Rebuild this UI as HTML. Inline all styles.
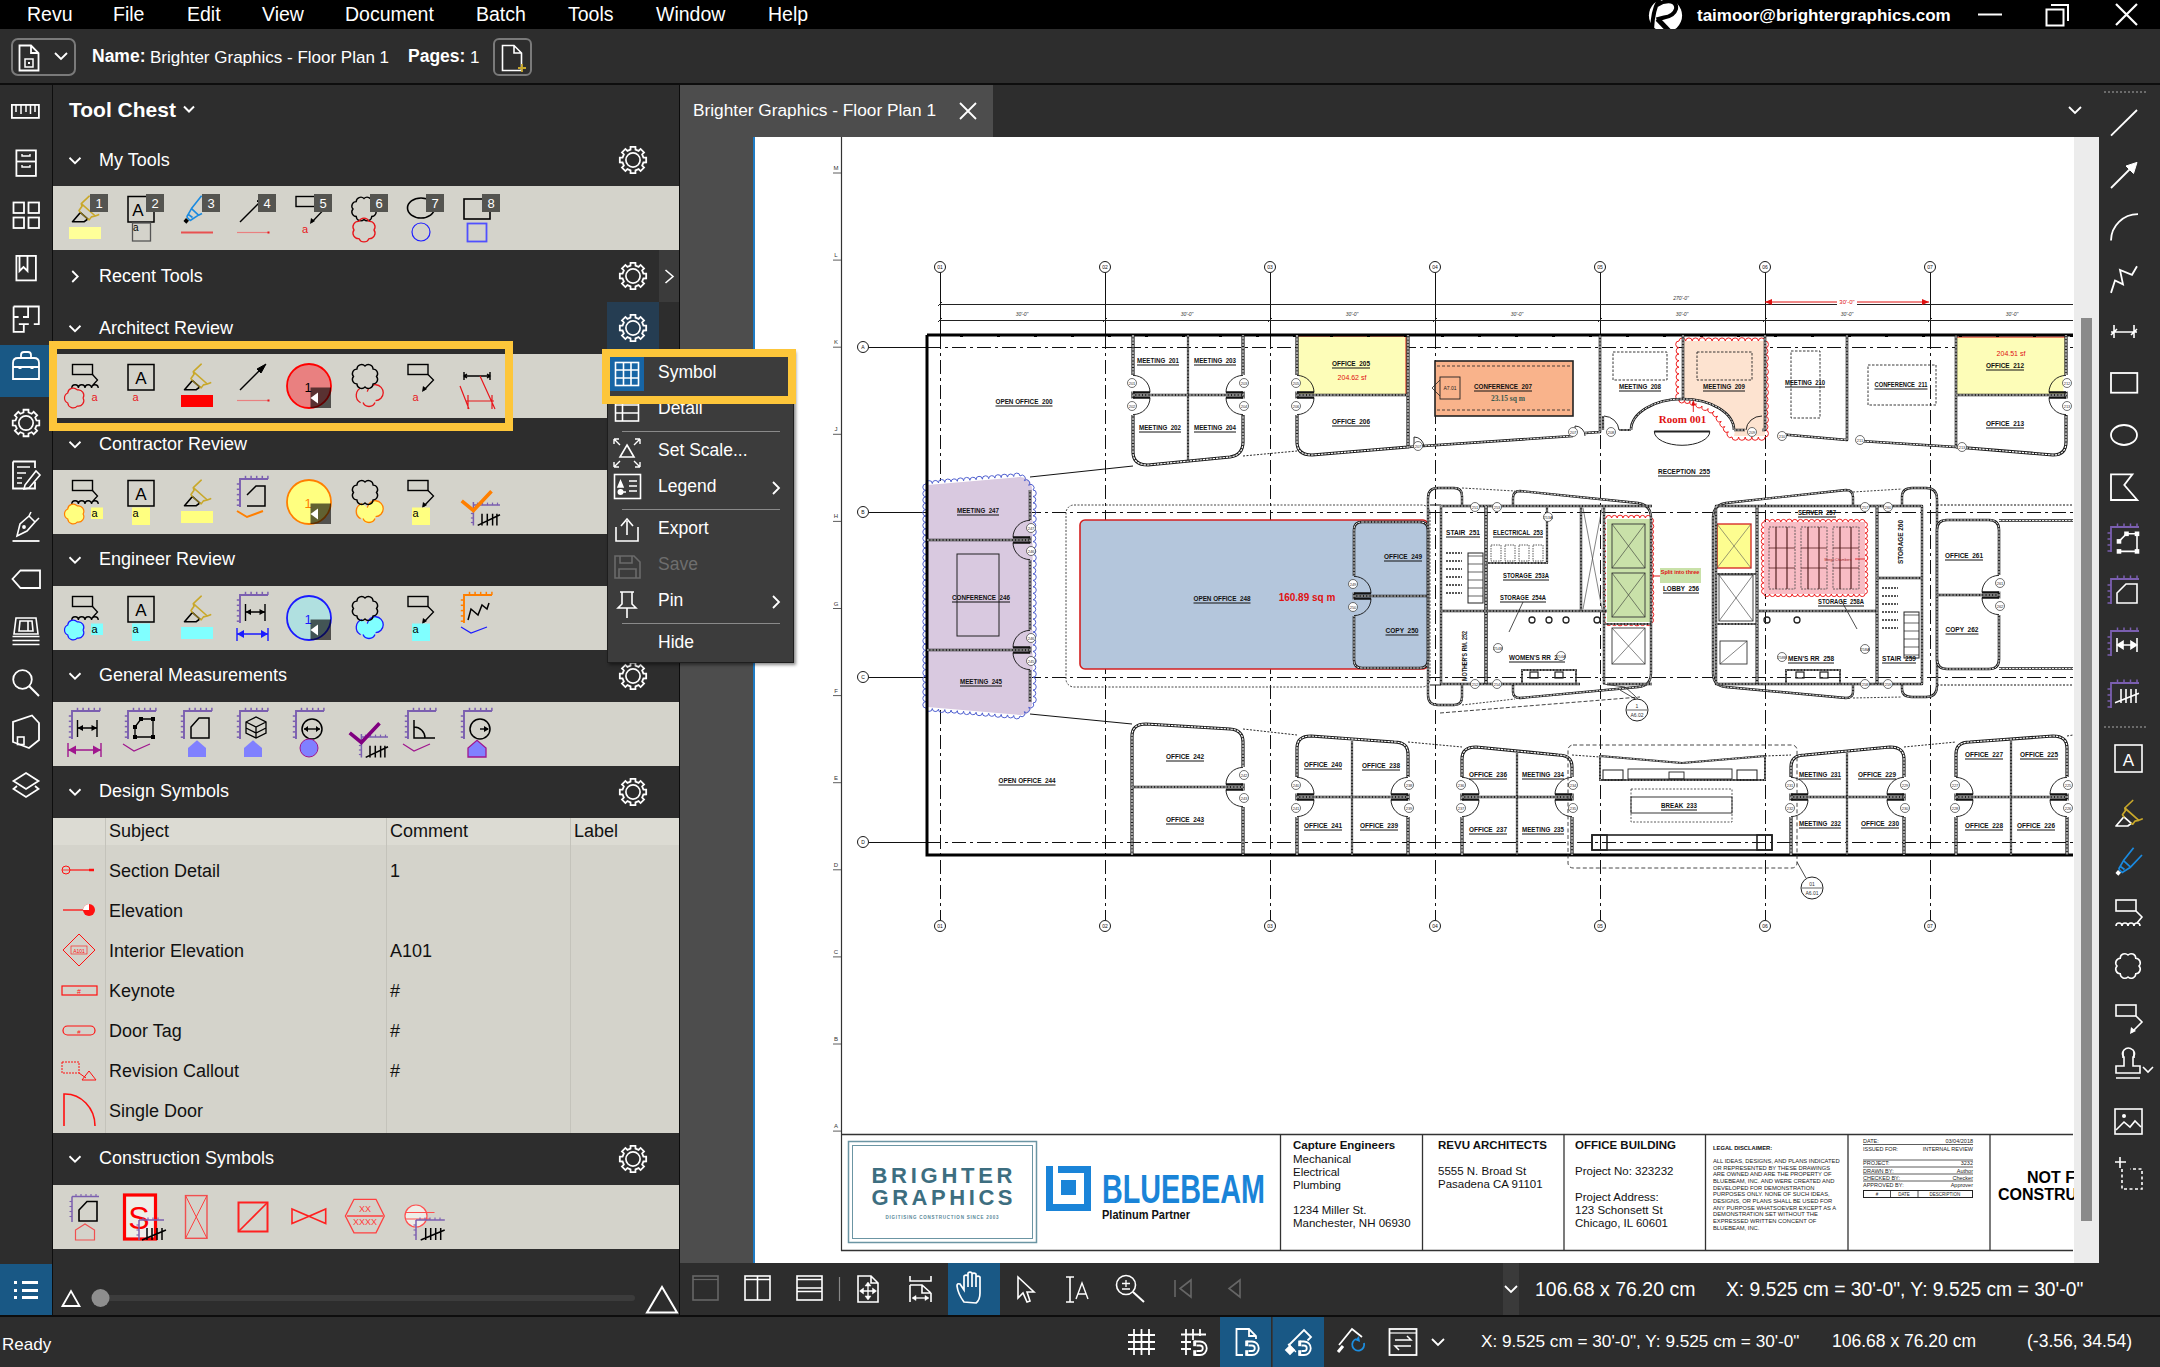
<!DOCTYPE html>
<html><head><meta charset="utf-8">
<style>
*{box-sizing:border-box;margin:0;padding:0}
html,body{width:2160px;height:1367px;overflow:hidden;background:#2d2d2d;font-family:"Liberation Sans",sans-serif;color:#fff}
.a{position:absolute}
.t{position:absolute;white-space:pre;line-height:1}
svg{position:absolute;overflow:visible}
</style></head><body>

<div class="a" style="left:0px;top:0px;width:2160px;height:29px;background:#000;"></div>
<div class="a" style="left:0px;top:29px;width:2160px;height:54px;background:#2d2d2d;"></div>
<div class="a" style="left:0px;top:83px;width:2160px;height:2px;background:#0d0d0d;"></div>
<div class="a" style="left:0px;top:85px;width:52px;height:1231px;background:#2d2d2d;"></div>
<div class="a" style="left:52px;top:85px;width:1px;height:1231px;background:#0e0e0e;"></div>
<div class="a" style="left:0px;top:345px;width:49px;height:52px;background:#195885;"></div>
<div class="a" style="left:0px;top:1264px;width:52px;height:52px;background:#195885;"></div>
<div class="a" style="left:53px;top:85px;width:626px;height:1231px;background:#2d2d2d;"></div>
<div class="a" style="left:679px;top:85px;width:1px;height:1231px;background:#0c0c0c;"></div>
<div class="a" style="left:680px;top:85px;width:1419px;height:52px;background:#2d2d2d;"></div>
<div class="a" style="left:680px;top:85px;width:313px;height:52px;background:#4d4d4d;"></div>
<div class="a" style="left:680px;top:137px;width:1394px;height:1126px;background:#4d4d4d;"></div>
<div class="a" style="left:753px;top:137px;width:1321px;height:1126px;background:#fff;"></div>
<div class="a" style="left:753px;top:137px;width:2px;height:1126px;background:#1e7bc4;"></div>
<div class="a" style="left:2074px;top:137px;width:25px;height:1126px;background:#ececec;"></div>
<div class="a" style="left:2081px;top:318px;width:11px;height:903px;background:#8a8a8a;"></div>
<div class="a" style="left:2099px;top:85px;width:61px;height:1231px;background:#2d2d2d;"></div>
<div class="a" style="left:680px;top:1263px;width:1480px;height:52px;background:#2d2d2d;"></div>
<div class="a" style="left:0px;top:1315px;width:2160px;height:2px;background:#0d0d0d;"></div>
<div class="a" style="left:0px;top:1317px;width:2160px;height:50px;background:#2d2d2d;"></div>
<div class="t" style="left:27px;top:4.5px;font-size:19.5px;font-weight:400;color:#fff;">Revu</div>
<div class="t" style="left:113px;top:4.5px;font-size:19.5px;font-weight:400;color:#fff;">File</div>
<div class="t" style="left:187px;top:4.5px;font-size:19.5px;font-weight:400;color:#fff;">Edit</div>
<div class="t" style="left:262px;top:4.5px;font-size:19.5px;font-weight:400;color:#fff;">View</div>
<div class="t" style="left:345px;top:4.5px;font-size:19.5px;font-weight:400;color:#fff;">Document</div>
<div class="t" style="left:476px;top:4.5px;font-size:19.5px;font-weight:400;color:#fff;">Batch</div>
<div class="t" style="left:568px;top:4.5px;font-size:19.5px;font-weight:400;color:#fff;">Tools</div>
<div class="t" style="left:656px;top:4.5px;font-size:19.5px;font-weight:400;color:#fff;">Window</div>
<div class="t" style="left:768px;top:4.5px;font-size:19.5px;font-weight:400;color:#fff;">Help</div>
<div class="t" style="left:1697px;top:6.6px;font-size:17px;font-weight:700;color:#fff;">taimoor@brightergraphics.com</div>
<svg style="left:1645px;top:0px;" width="42" height="29" viewBox="1645 0 42 29"><clipPath id="lc"><rect x="1640" y="0" width="50" height="29"/></clipPath><g clip-path="url(#lc)"><circle cx="1665.5" cy="15.5" r="16.6" fill="#fff"/><path d="M1659.5 -1 Q1652.5 10 1652 31" fill="none" stroke="#000" stroke-width="4"/><path d="M1657 5 Q1664 0.5 1671 1.5 Q1677 3 1676 9 Q1674 16 1664 17.5 L1656.5 19.5" fill="none" stroke="#000" stroke-width="4"/><path d="M1657.5 19 L1669 31" fill="none" stroke="#000" stroke-width="5"/></g></svg>
<svg style="left:1970px;top:0px;" width="190" height="29" viewBox="1970 0 190 29"><line x1="1978" y1="14.5" x2="2002" y2="14.5" stroke="#fff" stroke-width="2"/><rect x="2046.5" y="9.5" width="17" height="16" fill="none" stroke="#fff" stroke-width="2"/><path d="M2051 5 H2068 V21" fill="none" stroke="#fff" stroke-width="2"/><path d="M2116 4 L2137 25 M2137 4 L2116 25" stroke="#fff" stroke-width="2.2"/></svg>
<svg style="left:8px;top:34px;" width="530" height="46" viewBox="8 34 530 46"><rect x="12" y="39" width="63" height="36" rx="6" fill="none" stroke="#7a7a7a" stroke-width="2"/><path d="M19.5 45.5 H31 L38.5 53 V70.5 H19.5 Z M31 45.5 V53 H38.5" fill="none" stroke="#fff" stroke-width="1.8"/><rect x="25" y="59" width="8" height="8" fill="none" stroke="#fff" stroke-width="1.5"/><rect x="28" y="62" width="2" height="2" fill="#fff"/><path d="M55 53 L61 59 L67 53" fill="none" stroke="#fff" stroke-width="1.8"/><rect x="494" y="39" width="37" height="36" rx="5" fill="none" stroke="#7a7a7a" stroke-width="2"/><path d="M502.5 45.5 H514 L521.5 53 V70.5 H502.5 Z M514 45.5 V53 H521.5" fill="none" stroke="#fff" stroke-width="1.6"/><path d="M522 64 V72 M518 68 H526" stroke="#c8a82c" stroke-width="1.8"/></svg>
<div class="t" style="left:92px;top:48.2px;font-size:17.5px;font-weight:700;color:#fff;">Name:</div>
<div class="t" style="left:150px;top:48.6px;font-size:17px;font-weight:400;color:#fff;">Brighter Graphics - Floor Plan 1</div>
<div class="t" style="left:408px;top:48.2px;font-size:17.5px;font-weight:700;color:#fff;">Pages:</div>
<div class="t" style="left:470px;top:48.6px;font-size:17px;font-weight:400;color:#fff;">1</div>
<div class="t" style="left:69px;top:99.2px;font-size:21px;font-weight:700;color:#fff;">Tool Chest</div>
<svg style="left:180px;top:100px;" width="20" height="20" viewBox="180 100 20 20"><path d="M184 106.5 L189 111.5 L194 106.5" fill="none" stroke="#fff" stroke-width="2"/></svg>
<div class="a" style="left:607px;top:302px;width:52px;height:52px;background:#253d52;"></div>
<div class="a" style="left:659px;top:250px;width:20px;height:52px;background:#3b3b3b;"></div>
<div class="t" style="left:99px;top:150.8px;font-size:18px;font-weight:400;color:#fff;">My Tools</div>
<div class="t" style="left:99px;top:266.8px;font-size:18px;font-weight:400;color:#fff;">Recent Tools</div>
<div class="t" style="left:99px;top:318.8px;font-size:18px;font-weight:400;color:#fff;">Architect Review</div>
<div class="t" style="left:99px;top:434.8px;font-size:18px;font-weight:400;color:#fff;">Contractor Review</div>
<div class="t" style="left:99px;top:550.3px;font-size:18px;font-weight:400;color:#fff;">Engineer Review</div>
<div class="t" style="left:99px;top:666.3px;font-size:18px;font-weight:400;color:#fff;">General Measurements</div>
<div class="t" style="left:99px;top:782.3px;font-size:18px;font-weight:400;color:#fff;">Design Symbols</div>
<div class="t" style="left:99px;top:1149.3px;font-size:18px;font-weight:400;color:#fff;">Construction Symbols</div>
<svg style="left:53px;top:85px;" width="626" height="1231" viewBox="53 85 626 1231"><path d="M69.5 157.75 L75 163.25 L80.5 157.75" fill="none" stroke="#fff" stroke-width="1.8"/><path d="M72.25 271.0 L77.75 276.5 L72.25 282.0" fill="none" stroke="#fff" stroke-width="1.8"/><path d="M69.5 325.75 L75 331.25 L80.5 325.75" fill="none" stroke="#fff" stroke-width="1.8"/><path d="M69.5 441.75 L75 447.25 L80.5 441.75" fill="none" stroke="#fff" stroke-width="1.8"/><path d="M69.5 557.25 L75 562.75 L80.5 557.25" fill="none" stroke="#fff" stroke-width="1.8"/><path d="M69.5 673.25 L75 678.75 L80.5 673.25" fill="none" stroke="#fff" stroke-width="1.8"/><path d="M69.5 789.25 L75 794.75 L80.5 789.25" fill="none" stroke="#fff" stroke-width="1.8"/><path d="M69.5 1156.25 L75 1161.75 L80.5 1156.25" fill="none" stroke="#fff" stroke-width="1.8"/><polygon points="630.50,149.58 630.56,146.82 635.44,146.82 635.50,149.58 638.60,150.86 640.59,148.96 644.04,152.41 642.14,154.40 643.42,157.50 646.18,157.56 646.18,162.44 643.42,162.50 642.14,165.60 644.04,167.59 640.59,171.04 638.60,169.14 635.50,170.42 635.44,173.18 630.56,173.18 630.50,170.42 627.40,169.14 625.41,171.04 621.96,167.59 623.86,165.60 622.58,162.50 619.82,162.44 619.82,157.56 622.58,157.50 623.86,154.40 621.96,152.41 625.41,148.96 627.40,150.86" fill="none" stroke="#fff" stroke-width="1.8" stroke-linejoin="miter"/><circle cx="633" cy="160" r="7.10" fill="none" stroke="#fff" stroke-width="1.7"/><polygon points="630.50,265.58 630.56,262.82 635.44,262.82 635.50,265.58 638.60,266.86 640.59,264.96 644.04,268.41 642.14,270.40 643.42,273.50 646.18,273.56 646.18,278.44 643.42,278.50 642.14,281.60 644.04,283.59 640.59,287.04 638.60,285.14 635.50,286.42 635.44,289.18 630.56,289.18 630.50,286.42 627.40,285.14 625.41,287.04 621.96,283.59 623.86,281.60 622.58,278.50 619.82,278.44 619.82,273.56 622.58,273.50 623.86,270.40 621.96,268.41 625.41,264.96 627.40,266.86" fill="none" stroke="#fff" stroke-width="1.8" stroke-linejoin="miter"/><circle cx="633" cy="276" r="7.10" fill="none" stroke="#fff" stroke-width="1.7"/><polygon points="630.50,317.58 630.56,314.82 635.44,314.82 635.50,317.58 638.60,318.86 640.59,316.96 644.04,320.41 642.14,322.40 643.42,325.50 646.18,325.56 646.18,330.44 643.42,330.50 642.14,333.60 644.04,335.59 640.59,339.04 638.60,337.14 635.50,338.42 635.44,341.18 630.56,341.18 630.50,338.42 627.40,337.14 625.41,339.04 621.96,335.59 623.86,333.60 622.58,330.50 619.82,330.44 619.82,325.56 622.58,325.50 623.86,322.40 621.96,320.41 625.41,316.96 627.40,318.86" fill="none" stroke="#fff" stroke-width="1.8" stroke-linejoin="miter"/><circle cx="633" cy="328" r="7.10" fill="none" stroke="#fff" stroke-width="1.7"/><polygon points="630.50,665.58 630.56,662.82 635.44,662.82 635.50,665.58 638.60,666.86 640.59,664.96 644.04,668.41 642.14,670.40 643.42,673.50 646.18,673.56 646.18,678.44 643.42,678.50 642.14,681.60 644.04,683.59 640.59,687.04 638.60,685.14 635.50,686.42 635.44,689.18 630.56,689.18 630.50,686.42 627.40,685.14 625.41,687.04 621.96,683.59 623.86,681.60 622.58,678.50 619.82,678.44 619.82,673.56 622.58,673.50 623.86,670.40 621.96,668.41 625.41,664.96 627.40,666.86" fill="none" stroke="#fff" stroke-width="1.8" stroke-linejoin="miter"/><circle cx="633" cy="676" r="7.10" fill="none" stroke="#fff" stroke-width="1.7"/><polygon points="630.50,781.58 630.56,778.82 635.44,778.82 635.50,781.58 638.60,782.86 640.59,780.96 644.04,784.41 642.14,786.40 643.42,789.50 646.18,789.56 646.18,794.44 643.42,794.50 642.14,797.60 644.04,799.59 640.59,803.04 638.60,801.14 635.50,802.42 635.44,805.18 630.56,805.18 630.50,802.42 627.40,801.14 625.41,803.04 621.96,799.59 623.86,797.60 622.58,794.50 619.82,794.44 619.82,789.56 622.58,789.50 623.86,786.40 621.96,784.41 625.41,780.96 627.40,782.86" fill="none" stroke="#fff" stroke-width="1.8" stroke-linejoin="miter"/><circle cx="633" cy="792" r="7.10" fill="none" stroke="#fff" stroke-width="1.7"/><polygon points="630.50,1148.58 630.56,1145.82 635.44,1145.82 635.50,1148.58 638.60,1149.86 640.59,1147.96 644.04,1151.41 642.14,1153.40 643.42,1156.50 646.18,1156.56 646.18,1161.44 643.42,1161.50 642.14,1164.60 644.04,1166.59 640.59,1170.04 638.60,1168.14 635.50,1169.42 635.44,1172.18 630.56,1172.18 630.50,1169.42 627.40,1168.14 625.41,1170.04 621.96,1166.59 623.86,1164.60 622.58,1161.50 619.82,1161.44 619.82,1156.56 622.58,1156.50 623.86,1153.40 621.96,1151.41 625.41,1147.96 627.40,1149.86" fill="none" stroke="#fff" stroke-width="1.8" stroke-linejoin="miter"/><circle cx="633" cy="1159" r="7.10" fill="none" stroke="#fff" stroke-width="1.7"/><path d="M665.5 270 L673 276.5 L665.5 283" fill="none" stroke="#fff" stroke-width="1.6"/></svg>
<div class="a" style="left:53px;top:186px;width:626px;height:64px;background:#d4d3cb;"></div>
<div class="a" style="left:53px;top:354px;width:626px;height:64px;background:#d4d3cb;"></div>
<div class="a" style="left:53px;top:470px;width:626px;height:64px;background:#d4d3cb;"></div>
<div class="a" style="left:53px;top:586px;width:626px;height:64px;background:#d4d3cb;"></div>
<div class="a" style="left:53px;top:702px;width:626px;height:64px;background:#d4d3cb;"></div>
<div class="a" style="left:53px;top:1185px;width:626px;height:64px;background:#d4d3cb;"></div>
<div class="a" style="left:53px;top:818px;width:626px;height:315px;background:#d4d3cb;"></div>
<div class="a" style="left:53px;top:818px;width:626px;height:27px;background:#dcdbd3;"></div>
<div class="a" style="left:105px;top:818px;width:1px;height:315px;background:#c4c3bb;"></div>
<div class="a" style="left:386px;top:818px;width:1px;height:315px;background:#c4c3bb;"></div>
<div class="a" style="left:570px;top:818px;width:1px;height:315px;background:#c4c3bb;"></div>
<div class="t" style="left:109px;top:821.8px;font-size:18px;font-weight:400;color:#111;">Subject</div>
<div class="t" style="left:390px;top:821.8px;font-size:18px;font-weight:400;color:#111;">Comment</div>
<div class="t" style="left:574px;top:821.8px;font-size:18px;font-weight:400;color:#111;">Label</div>
<div class="t" style="left:109px;top:861.8px;font-size:18px;font-weight:400;color:#111;">Section Detail</div>
<div class="t" style="left:390px;top:861.8px;font-size:18px;font-weight:400;color:#111;">1</div>
<div class="t" style="left:109px;top:901.8px;font-size:18px;font-weight:400;color:#111;">Elevation</div>
<div class="t" style="left:109px;top:941.8px;font-size:18px;font-weight:400;color:#111;">Interior Elevation</div>
<div class="t" style="left:390px;top:941.8px;font-size:18px;font-weight:400;color:#111;">A101</div>
<div class="t" style="left:109px;top:981.8px;font-size:18px;font-weight:400;color:#111;">Keynote</div>
<div class="t" style="left:390px;top:981.8px;font-size:18px;font-weight:400;color:#111;">#</div>
<div class="t" style="left:109px;top:1021.8px;font-size:18px;font-weight:400;color:#111;">Door Tag</div>
<div class="t" style="left:390px;top:1021.8px;font-size:18px;font-weight:400;color:#111;">#</div>
<div class="t" style="left:109px;top:1061.8px;font-size:18px;font-weight:400;color:#111;">Revision Callout</div>
<div class="t" style="left:390px;top:1061.8px;font-size:18px;font-weight:400;color:#111;">#</div>
<div class="t" style="left:109px;top:1101.8px;font-size:18px;font-weight:400;color:#111;">Single Door</div>
<svg style="left:53px;top:818px;" width="626" height="315" viewBox="53 818 626 315"><circle cx="66" cy="870" r="4" fill="none" stroke="#ff1010" stroke-width="1"/><line x1="62" y1="870" x2="70" y2="870" stroke="#ff1010" stroke-width="0.8"/><line x1="70" y1="870" x2="94" y2="870" stroke="#ff1010" stroke-width="1.2"/><line x1="89" y1="870" x2="94" y2="870" stroke="#ff1010" stroke-width="2.5"/><line x1="63" y1="910" x2="84" y2="910" stroke="#ff1010" stroke-width="1.3"/><circle cx="89" cy="910" r="6" fill="#ff1010"/><path d="M89 904 A6 6 0 0 0 83 910 H89 Z" fill="#fff"/><path d="M79 934 L95 950 L79 966 L63 950 Z" fill="none" stroke="#ff1010" stroke-width="1"/><rect x="71" y="946" width="16" height="8" fill="none" stroke="#ff1010" stroke-width="0.6"/><text x="79" y="952.5" font-size="5" fill="#ff1010" text-anchor="middle" font-family="Liberation Sans">A101</text><rect x="62" y="986" width="35" height="9" fill="none" stroke="#ff1010" stroke-width="1.2"/><text x="79" y="994" font-size="7" fill="#ff1010" text-anchor="middle" font-family="Liberation Sans">#</text><rect x="63" y="1026" width="32" height="9" rx="4.5" fill="none" stroke="#ff1010" stroke-width="1.2"/><text x="79" y="1033.5" font-size="6" fill="#ff1010" text-anchor="middle" font-family="Liberation Sans">#</text><rect x="62" y="1062" width="17" height="11" fill="none" stroke="#ff1010" stroke-width="1" stroke-dasharray="2 1"/><path d="M79 1073 L86 1078" stroke="#ff1010" stroke-width="1"/><path d="M89 1071 L96 1080 H82 Z" fill="none" stroke="#ff1010" stroke-width="1"/><path d="M64 1126 V1094 A30 32 0 0 1 95 1126" fill="none" stroke="#ff1010" stroke-width="1.6"/></svg>
<svg style="left:53px;top:1263px;" width="626" height="52" viewBox="53 1263 626 52"><path d="M62.5 1306 L71 1291 L79.5 1306 Z" fill="none" stroke="#fff" stroke-width="1.8"/><rect x="100" y="1295" width="535" height="6" rx="3" fill="#3c3c3c"/><circle cx="100.5" cy="1298" r="9" fill="#8e8e8e"/><path d="M647 1312.5 L662 1287 L677 1312.5 Z" fill="none" stroke="#fff" stroke-width="2"/></svg>
<div class="t" style="left:2px;top:1335.6px;font-size:17px;font-weight:400;color:#fff;">Ready</div>
<svg style="left:0px;top:1264px;" width="52" height="52" viewBox="0 1264 52 52"><rect x="14" y="1281" width="3" height="3" fill="#fff"/><rect x="14" y="1289" width="3" height="3" fill="#fff"/><rect x="14" y="1296" width="3" height="3" fill="#fff"/><rect x="22" y="1281" width="16" height="3" fill="#fff"/><rect x="22" y="1289" width="16" height="3" fill="#fff"/><rect x="22" y="1296" width="16" height="3" fill="#fff"/></svg>
<svg style="left:0px;top:85px;" width="52" height="730" viewBox="0 85 52 730"><g fill="none" stroke="#fff" stroke-width="1.8">
<rect x="11.9" y="104.9" width="27" height="13"/>
<path d="M16 105 V112 M21 105 V114 M26 105 V112 M30.5 105 V114 M35 105 V112" stroke-width="1.5"/>
<rect x="16.4" y="150.4" width="19.5" height="25.5"/><line x1="16" y1="161.5" x2="36" y2="161.5"/>
<path d="M22 154 V156 H30 V154 M22 165 V167 H30 V165" stroke-width="1.4"/>
<rect x="13.5" y="202.5" width="10.5" height="10.5"/><rect x="28.5" y="202.5" width="10.5" height="10.5"/>
<rect x="13.5" y="217.5" width="10.5" height="10.5"/><rect x="28.5" y="217.5" width="10.5" height="10.5"/>
<rect x="16.4" y="255.9" width="19.5" height="24.5"/><path d="M19.5 255 V271 L23.5 267 L27.5 271 V255"/>
<path d="M13.6 306.5 H38.8 V324.2 H33.8 M28.8 324.2 H18.8 M23.8 324.2 V331.8 H13.6 V306.5 M28.1 306.5 V317 H23 M18.6 317 H13.6"/>
<path d="M13 461.5 H35 V468 M13 461.5 V488.5 H35 V482" /><path d="M17 467 H30 M17 473 H26 M17 478 H22 M17 483 H22" stroke-width="1.6"/><path d="M25 485 L36 471 L40 475 L29 488 L24 489 Z" stroke-width="1.6"/>
<path d="M12.5 541 H39.5" /><path d="M17 536 L20 524 L29 516 L35 522 L27 531 Z M29 516 L31 512 M35 522 L39 518" stroke-width="1.6"/><circle cx="24" cy="527" r="1" fill="#fff"/>
<path d="M40 570.5 H20.5 L12.5 579 L20.5 588 H40 Z"/>
<path d="M16 618 H36 L38 634 H14 Z M20 621 H32 L33 631 H19 Z M28 621 V631" stroke-width="1.6"/><path d="M12.5 636.5 H39.5 M12.5 640.5 H39.5 M12.5 644.5 H39.5" stroke-width="1.6"/>
<circle cx="22.5" cy="679.5" r="9.3"/><line x1="29.3" y1="686.3" x2="39" y2="696" stroke-width="2"/>
<path d="M13 727 V742 L29 748 L39 740 V723 L32 715.5 L13 722 Z"/><rect x="17.5" y="737" width="6.5" height="7.5" stroke-width="1.6"/>
<path d="M26 773 L38.5 781 L26 789 L13.5 781 Z"/><path d="M17 786 L13.5 789 L26 797 L38.5 789 L35 786"/>
<rect x="12.5" y="408.5" width="27" height="0" stroke="none"/>
</g><path d="M13 370.5 V363 Q13 358 18 358 H34 Q39 358 39 363 V370.5 M13 367 H39 M13 367 V379 H39 V367" fill="none" stroke="#fff" stroke-width="1.8"/><path d="M21 358 V355 Q21 352 24 352 H28 Q31 352 31 355 V358" fill="none" stroke="#fff" stroke-width="1.8"/><rect x="18.5" y="366" width="3" height="3" fill="#fff"/><rect x="30.5" y="366" width="3" height="3" fill="#fff"/><polygon points="23.48,412.50 23.54,409.73 28.46,409.73 28.52,412.50 31.64,413.79 33.65,411.87 37.13,415.35 35.21,417.36 36.50,420.48 39.27,420.54 39.27,425.46 36.50,425.52 35.21,428.64 37.13,430.65 33.65,434.13 31.64,432.21 28.52,433.50 28.46,436.27 23.54,436.27 23.48,433.50 20.36,432.21 18.35,434.13 14.87,430.65 16.79,428.64 15.50,425.52 12.73,425.46 12.73,420.54 15.50,420.48 16.79,417.36 14.87,415.35 18.35,411.87 20.36,413.79" fill="none" stroke="#fff" stroke-width="1.8" stroke-linejoin="miter"/><circle cx="26" cy="423" r="7.16" fill="none" stroke="#fff" stroke-width="1.7"/></svg>
<svg style="left:53px;top:186px;" width="626" height="64" viewBox="53 186 626 64"><g transform="translate(61,194)"><rect x="8" y="33" width="32" height="12" fill="#ffff99"/><path d="M11.5 27.7 L19.4 18.5 L26.8 25 L23.3 27.7 Z" fill="none" stroke="#000" stroke-width="1.6" stroke-linejoin="round"/><path d="M19.4 18.5 L18 16.5 L21 12.3 L20.3 9.7 L28.2 2.2 M20.3 9.7 L34.3 22 L37.6 20.7 M34.3 22 L30.4 22.9 L28.2 25.9 L26.8 25" fill="none" stroke="#c9a82a" stroke-width="1.6" stroke-linejoin="round" stroke-linecap="round"/><path d="M19.4 18.5 L26.8 25" stroke="#8a7420" stroke-width="1.3"/><rect x="29" y="0" width="18" height="18" fill="#545450"/><text x="38" y="14" font-size="13" fill="#fff" text-anchor="middle" font-family="Liberation Sans">1</text></g><g transform="translate(117,194)"><rect x="11" y="2.5" width="26" height="25.5" fill="none" stroke="#000" stroke-width="1.5"/><text x="21" y="22" font-size="17" fill="#000" text-anchor="middle" font-family="Liberation Sans">A</text><rect x="15.5" y="29" width="18" height="18" fill="none" stroke="#555" stroke-width="1.3"/><text x="16" y="37" font-size="10" fill="#000" font-family="Liberation Sans">a</text><rect x="29" y="0" width="18" height="18" fill="#545450"/><text x="38" y="14" font-size="13" fill="#fff" text-anchor="middle" font-family="Liberation Sans">2</text></g><g transform="translate(173,194)"><path d="M13.7 23 L18.5 14.6 L28.6 1.7 M18.5 14.6 L25.5 21.2 L29 19.5 M13.7 23 L17.2 26.5 L25.5 21.2 M15.5 20.5 L19.5 23.5" fill="none" stroke="#1a8ae0" stroke-width="1.6" stroke-linejoin="round"/><path d="M10.5 27 L13 24 L16 26.8 L13.3 29.8 Z" fill="#000"/><line x1="8" y1="38.5" x2="40" y2="38.5" stroke="#e85050" stroke-width="2"/><rect x="29" y="0" width="18" height="18" fill="#545450"/><text x="38" y="14" font-size="13" fill="#fff" text-anchor="middle" font-family="Liberation Sans">3</text></g><g transform="translate(229,194)"><line x1="11" y1="28" x2="33" y2="6" stroke="#000" stroke-width="1.5"/><path d="M37 2 L28 7 L32 11 Z" fill="#000" stroke="#000" stroke-width="1"/><line x1="8" y1="38.5" x2="40" y2="38.5" stroke="#e98080" stroke-width="1.2"/><rect x="38.5" y="37.5" width="2" height="2" fill="#e8161b"/><rect x="29" y="0" width="18" height="18" fill="#545450"/><text x="38" y="14" font-size="13" fill="#fff" text-anchor="middle" font-family="Liberation Sans">4</text></g><g transform="translate(285,194)"><rect x="11" y="2.5" width="20" height="10" fill="none" stroke="#000" stroke-width="1.4"/><path d="M31 12.5 L36.5 18 L27 28" fill="none" stroke="#000" stroke-width="1.3"/><path d="M25 30 L26 24 L30 27 Z" fill="#000"/><text x="17" y="38.5" font-size="11" fill="#e8161b" font-family="Liberation Sans">a</text><rect x="29" y="0" width="18" height="18" fill="#545450"/><text x="38" y="14" font-size="13" fill="#fff" text-anchor="middle" font-family="Liberation Sans">5</text></g><g transform="translate(341,194)"><path d="M34.00 15.00 A4.45 4.45 0 0 1 30.78 22.42 A4.60 4.60 0 0 1 23.00 25.50 A4.60 4.60 0 0 1 15.22 22.42 A4.45 4.45 0 0 1 12.00 15.00 A4.45 4.45 0 0 1 15.22 7.58 A4.60 4.60 0 0 1 23.00 4.50 A4.60 4.60 0 0 1 30.78 7.58 A4.45 4.45 0 0 1 34.00 15.00 Z" fill="none" stroke="#000" stroke-width="1.4"/><path d="M33.00 36.00 A5.50 5.50 0 0 1 28.00 44.66 A5.50 5.50 0 0 1 18.00 44.66 A5.50 5.50 0 0 1 13.00 36.00 A5.50 5.50 0 0 1 18.00 27.34 A5.50 5.50 0 0 1 28.00 27.34 A5.50 5.50 0 0 1 33.00 36.00 Z" fill="none" stroke="#e8161b" stroke-width="1.3"/><rect x="29" y="0" width="18" height="18" fill="#545450"/><text x="38" y="14" font-size="13" fill="#fff" text-anchor="middle" font-family="Liberation Sans">6</text></g><g transform="translate(397,194)"><ellipse cx="24" cy="14" rx="13.5" ry="10" fill="none" stroke="#000" stroke-width="1.6"/><circle cx="24" cy="38" r="9" fill="none" stroke="#2020ff" stroke-width="1.2"/><rect x="29" y="0" width="18" height="18" fill="#545450"/><text x="38" y="14" font-size="13" fill="#fff" text-anchor="middle" font-family="Liberation Sans">7</text></g><g transform="translate(453,194)"><rect x="11" y="5" width="26" height="20" fill="none" stroke="#000" stroke-width="1.6"/><rect x="14.5" y="29.5" width="19" height="18" fill="none" stroke="#5050ff" stroke-width="1.8"/><rect x="29" y="0" width="18" height="18" fill="#545450"/><text x="38" y="14" font-size="13" fill="#fff" text-anchor="middle" font-family="Liberation Sans">8</text></g></svg>
<svg style="left:53px;top:354px;" width="626" height="64" viewBox="53 354 626 64"><g transform="translate(61,362)"><rect x="11.5" y="2.5" width="20" height="10" fill="none" stroke="#000" stroke-width="1.4"/><path d="M31.5 12.5 L36.5 18 L32 23" fill="none" stroke="#000" stroke-width="1.3"/><path d="M10.8 26 a3.3 3.3 0 0 1 6.6 0 a3.3 3.3 0 0 1 6.6 0 a3.3 3.3 0 0 1 6.6 0 a3.3 3.3 0 0 1 6.6 0" fill="none" stroke="#000" stroke-width="1.4"/><path d="M22.10 36.00 A5.50 5.50 0 0 1 16.23 44.08 A5.50 5.50 0 0 1 6.72 41.00 A5.50 5.50 0 0 1 6.72 31.00 A5.50 5.50 0 0 1 16.23 27.92 A5.50 5.50 0 0 1 22.10 36.00 Z" fill="none" stroke="#e8161b" stroke-width="1.2"/><text x="30.5" y="38.5" font-size="11" fill="#e8161b" font-family="Liberation Sans">a</text></g><g transform="translate(117,362)"><rect x="11" y="2.5" width="26" height="25.5" fill="none" stroke="#000" stroke-width="1.5"/><text x="24" y="22" font-size="17" fill="#000" text-anchor="middle" font-family="Liberation Sans">A</text><text x="15.5" y="38.5" font-size="11" fill="#e8161b" font-family="Liberation Sans">a</text></g><g transform="translate(173,362)"><rect x="8" y="33" width="32" height="12" fill="#ff0000"/><path d="M11.5 27.7 L19.4 18.5 L26.8 25 L23.3 27.7 Z" fill="none" stroke="#000" stroke-width="1.6" stroke-linejoin="round"/><path d="M19.4 18.5 L18 16.5 L21 12.3 L20.3 9.7 L28.2 2.2 M20.3 9.7 L34.3 22 L37.6 20.7 M34.3 22 L30.4 22.9 L28.2 25.9 L26.8 25" fill="none" stroke="#c9a82a" stroke-width="1.6" stroke-linejoin="round" stroke-linecap="round"/><path d="M19.4 18.5 L26.8 25" stroke="#8a7420" stroke-width="1.3"/></g><g transform="translate(229,362)"><line x1="11" y1="28" x2="33" y2="6" stroke="#000" stroke-width="1.5"/><path d="M37 2 L28 7 L32 11 Z" fill="#000" stroke="#000" stroke-width="1"/><line x1="8" y1="38.5" x2="40" y2="38.5" stroke="#e98080" stroke-width="1.2"/><rect x="38.5" y="37.5" width="2" height="2" fill="#e8161b"/></g><g transform="translate(285,362)"><circle cx="24" cy="24" r="22" fill="#e98080" stroke="#ff0000" stroke-width="1.8"/><text x="23" y="30" font-size="13" fill="#000" text-anchor="middle" font-family="Liberation Sans">1</text><rect x="25.5" y="25.5" width="20.5" height="20.5" fill="#000" fill-opacity="0.62"/><path d="M33 30.5 L25.5 36 L33 41.5 Z" fill="#fff"/></g><g transform="translate(341,362)"><path d="M19.6 40.7 A8.3 8.3 0 0 1 21 25.5 M26.3 29.6 A8 8 0 1 1 34.6 38.7 M22 40.5 A6.5 6.5 0 0 0 34 40.5" fill="none" stroke="#e8161b" stroke-width="1.3"/><path d="M35.50 14.50 A4.48 4.48 0 0 1 32.13 21.92 A4.78 4.78 0 0 1 24.00 25.00 A4.78 4.78 0 0 1 15.87 21.92 A4.48 4.48 0 0 1 12.50 14.50 A4.48 4.48 0 0 1 15.87 7.08 A4.78 4.78 0 0 1 24.00 4.00 A4.78 4.78 0 0 1 32.13 7.08 A4.48 4.48 0 0 1 35.50 14.50 Z" fill="#d4d3cb" stroke="#000" stroke-width="1.4"/></g><g transform="translate(397,362)"><rect x="11" y="2.5" width="20" height="10" fill="none" stroke="#000" stroke-width="1.4"/><path d="M31 12.5 L36.5 18 L27 28" fill="none" stroke="#000" stroke-width="1.3"/><path d="M25 30 L26 24 L30 27 Z" fill="#000"/><text x="15.5" y="38.5" font-size="11" fill="#e8161b" font-family="Liberation Sans">a</text></g><g transform="translate(453,362)"><path d="M11 14 H37 M11 10 V18 M37 10 V18 M14 12 L11 14 L14 16 M34 12 L37 14 L34 16" fill="none" stroke="#000" stroke-width="1.4"/><path d="M7 24 L16 47 M27 14 L42 47 M13 39 H41 M15 33 V47 M39 33 V47" fill="none" stroke="#e8161b" stroke-width="1.2"/></g></svg>
<svg style="left:53px;top:470px;" width="626" height="64" viewBox="53 470 626 64"><g transform="translate(61,478)"><rect x="11.5" y="2.5" width="20" height="10" fill="none" stroke="#000" stroke-width="1.4"/><path d="M31.5 12.5 L36.5 18 L32 23" fill="none" stroke="#000" stroke-width="1.3"/><path d="M10.8 26 a3.3 3.3 0 0 1 6.6 0 a3.3 3.3 0 0 1 6.6 0 a3.3 3.3 0 0 1 6.6 0 a3.3 3.3 0 0 1 6.6 0" fill="none" stroke="#000" stroke-width="1.4"/><path d="M22.10 36.00 A5.50 5.50 0 0 1 16.23 44.08 A5.50 5.50 0 0 1 6.72 41.00 A5.50 5.50 0 0 1 6.72 31.00 A5.50 5.50 0 0 1 16.23 27.92 A5.50 5.50 0 0 1 22.10 36.00 Z" fill="#ffff80" stroke="#ff7f00" stroke-width="1.2"/><rect x="30" y="29.5" width="12" height="11.5" fill="#ffff80"/><text x="30.5" y="38.5" font-size="11" fill="#000" font-family="Liberation Sans">a</text></g><g transform="translate(117,478)"><rect x="11" y="2.5" width="26" height="25.5" fill="none" stroke="#000" stroke-width="1.5"/><text x="24" y="22" font-size="17" fill="#000" text-anchor="middle" font-family="Liberation Sans">A</text><rect x="15" y="29.5" width="18" height="17.5" fill="#ffff80"/><text x="15.5" y="38.5" font-size="11" fill="#000" font-family="Liberation Sans">a</text></g><g transform="translate(173,478)"><rect x="8" y="33" width="32" height="12" fill="#ffff80"/><path d="M11.5 27.7 L19.4 18.5 L26.8 25 L23.3 27.7 Z" fill="none" stroke="#000" stroke-width="1.6" stroke-linejoin="round"/><path d="M19.4 18.5 L18 16.5 L21 12.3 L20.3 9.7 L28.2 2.2 M20.3 9.7 L34.3 22 L37.6 20.7 M34.3 22 L30.4 22.9 L28.2 25.9 L26.8 25" fill="none" stroke="#c9a82a" stroke-width="1.6" stroke-linejoin="round" stroke-linecap="round"/><path d="M19.4 18.5 L26.8 25" stroke="#8a7420" stroke-width="1.3"/></g><g transform="translate(229,478)"><path d="M11 0 V29 M11 1 H39" stroke="#7b5fb0" stroke-width="1.9" fill="none"/><line x1="16.5" y1="-2.2" x2="16.5" y2="1" stroke="#7b5fb0" stroke-width="1.5"/><line x1="22.1" y1="-2.2" x2="22.1" y2="1" stroke="#7b5fb0" stroke-width="1.5"/><line x1="27.7" y1="-2.2" x2="27.7" y2="1" stroke="#7b5fb0" stroke-width="1.5"/><line x1="33.3" y1="-2.2" x2="33.3" y2="1" stroke="#7b5fb0" stroke-width="1.5"/><line x1="38.9" y1="-2.2" x2="38.9" y2="1" stroke="#7b5fb0" stroke-width="1.5"/><line x1="7.8" y1="6.0" x2="11" y2="6.0" stroke="#7b5fb0" stroke-width="1.5"/><line x1="7.8" y1="11.3" x2="11" y2="11.3" stroke="#7b5fb0" stroke-width="1.5"/><line x1="7.8" y1="16.6" x2="11" y2="16.6" stroke="#7b5fb0" stroke-width="1.5"/><line x1="7.8" y1="21.9" x2="11" y2="21.9" stroke="#7b5fb0" stroke-width="1.5"/><line x1="7.8" y1="27.2" x2="11" y2="27.2" stroke="#7b5fb0" stroke-width="1.5"/><path d="M18 17 L27 8 H36 V28 H18" fill="none" stroke="#000" stroke-width="1.5"/><path d="M8 33 L18 39 L34 33" fill="none" stroke="#ff7f00" stroke-width="2"/></g><g transform="translate(285,478)"><circle cx="24" cy="24" r="22" fill="#ffff80" stroke="#ff7f00" stroke-width="1.8"/><text x="23" y="30" font-size="13" fill="#ff7f00" text-anchor="middle" font-family="Liberation Sans">1</text><rect x="25.5" y="25.5" width="20.5" height="20.5" fill="#000" fill-opacity="0.62"/><path d="M33 30.5 L25.5 36 L33 41.5 Z" fill="#fff"/></g><g transform="translate(341,478)"><path d="M21 40.5 A8.3 8.3 0 0 1 21 25.5 L26.3 29.6 A8 8 0 1 1 34.6 38.7 A7 7 0 0 1 21 40.5 Z" fill="#ffff80" stroke="none"/><path d="M19.6 40.7 A8.3 8.3 0 0 1 21 25.5 M26.3 29.6 A8 8 0 1 1 34.6 38.7 M22 40.5 A6.5 6.5 0 0 0 34 40.5" fill="none" stroke="#ff7f00" stroke-width="1.3"/><path d="M35.50 14.50 A4.48 4.48 0 0 1 32.13 21.92 A4.78 4.78 0 0 1 24.00 25.00 A4.78 4.78 0 0 1 15.87 21.92 A4.48 4.48 0 0 1 12.50 14.50 A4.48 4.48 0 0 1 15.87 7.08 A4.78 4.78 0 0 1 24.00 4.00 A4.78 4.78 0 0 1 32.13 7.08 A4.48 4.48 0 0 1 35.50 14.50 Z" fill="none" stroke="#000" stroke-width="1.4"/></g><g transform="translate(397,478)"><rect x="11" y="2.5" width="20" height="10" fill="none" stroke="#000" stroke-width="1.4"/><path d="M31 12.5 L36.5 18 L27 28" fill="none" stroke="#000" stroke-width="1.3"/><path d="M25 30 L26 24 L30 27 Z" fill="#000"/><rect x="15" y="29.5" width="18" height="17.5" fill="#ffff80"/><text x="15.5" y="38.5" font-size="11" fill="#000" font-family="Liberation Sans">a</text></g><g transform="translate(453,478)"><path d="M20.4 24 V47.4 M20.4 27.1 H47" stroke="#7b5fb0" stroke-width="1.5" fill="none"/><line x1="24.5" y1="24.6" x2="24.5" y2="27.1" stroke="#7b5fb0" stroke-width="1.2"/><line x1="29.5" y1="24.6" x2="29.5" y2="27.1" stroke="#7b5fb0" stroke-width="1.2"/><line x1="34.5" y1="24.6" x2="34.5" y2="27.1" stroke="#7b5fb0" stroke-width="1.2"/><line x1="39.5" y1="24.6" x2="39.5" y2="27.1" stroke="#7b5fb0" stroke-width="1.2"/><line x1="44.5" y1="24.6" x2="44.5" y2="27.1" stroke="#7b5fb0" stroke-width="1.2"/><line x1="17.9" y1="31.0" x2="20.4" y2="31.0" stroke="#7b5fb0" stroke-width="1.2"/><line x1="17.9" y1="35.5" x2="20.4" y2="35.5" stroke="#7b5fb0" stroke-width="1.2"/><line x1="17.9" y1="40.0" x2="20.4" y2="40.0" stroke="#7b5fb0" stroke-width="1.2"/><line x1="17.9" y1="44.5" x2="20.4" y2="44.5" stroke="#7b5fb0" stroke-width="1.2"/><path d="M8.7 22.9 L20.4 32.5 L38.5 13.3" fill="none" stroke="#ff7f00" stroke-width="3.6"/><path d="M24.7 47.4 L47 36.7 M29 47.4 V35.7 M34.3 47.4 V35.7 M39.6 47.4 V35.7 M43.9 47.4 V35.7" stroke="#000" stroke-width="1.5" fill="none"/></g></svg>
<svg style="left:53px;top:586px;" width="626" height="64" viewBox="53 586 626 64"><g transform="translate(61,594)"><rect x="11.5" y="2.5" width="20" height="10" fill="none" stroke="#000" stroke-width="1.4"/><path d="M31.5 12.5 L36.5 18 L32 23" fill="none" stroke="#000" stroke-width="1.3"/><path d="M10.8 26 a3.3 3.3 0 0 1 6.6 0 a3.3 3.3 0 0 1 6.6 0 a3.3 3.3 0 0 1 6.6 0 a3.3 3.3 0 0 1 6.6 0" fill="none" stroke="#000" stroke-width="1.4"/><path d="M22.10 36.00 A5.50 5.50 0 0 1 16.23 44.08 A5.50 5.50 0 0 1 6.72 41.00 A5.50 5.50 0 0 1 6.72 31.00 A5.50 5.50 0 0 1 16.23 27.92 A5.50 5.50 0 0 1 22.10 36.00 Z" fill="#80ffff" stroke="#1a1aff" stroke-width="1.2"/><rect x="30" y="29.5" width="12" height="11.5" fill="#80ffff"/><text x="30.5" y="38.5" font-size="11" fill="#000" font-family="Liberation Sans">a</text></g><g transform="translate(117,594)"><rect x="11" y="2.5" width="26" height="25.5" fill="none" stroke="#000" stroke-width="1.5"/><text x="24" y="22" font-size="17" fill="#000" text-anchor="middle" font-family="Liberation Sans">A</text><rect x="15" y="29.5" width="18" height="17.5" fill="#80ffff"/><text x="15.5" y="38.5" font-size="11" fill="#000" font-family="Liberation Sans">a</text></g><g transform="translate(173,594)"><rect x="8" y="33" width="32" height="12" fill="#80ffff"/><path d="M11.5 27.7 L19.4 18.5 L26.8 25 L23.3 27.7 Z" fill="none" stroke="#000" stroke-width="1.6" stroke-linejoin="round"/><path d="M19.4 18.5 L18 16.5 L21 12.3 L20.3 9.7 L28.2 2.2 M20.3 9.7 L34.3 22 L37.6 20.7 M34.3 22 L30.4 22.9 L28.2 25.9 L26.8 25" fill="none" stroke="#c9a82a" stroke-width="1.6" stroke-linejoin="round" stroke-linecap="round"/><path d="M19.4 18.5 L26.8 25" stroke="#8a7420" stroke-width="1.3"/></g><g transform="translate(229,594)"><path d="M11 0 V29 M11 1 H39" stroke="#7b5fb0" stroke-width="1.9" fill="none"/><line x1="16.5" y1="-2.2" x2="16.5" y2="1" stroke="#7b5fb0" stroke-width="1.5"/><line x1="22.1" y1="-2.2" x2="22.1" y2="1" stroke="#7b5fb0" stroke-width="1.5"/><line x1="27.7" y1="-2.2" x2="27.7" y2="1" stroke="#7b5fb0" stroke-width="1.5"/><line x1="33.3" y1="-2.2" x2="33.3" y2="1" stroke="#7b5fb0" stroke-width="1.5"/><line x1="38.9" y1="-2.2" x2="38.9" y2="1" stroke="#7b5fb0" stroke-width="1.5"/><line x1="7.8" y1="6.0" x2="11" y2="6.0" stroke="#7b5fb0" stroke-width="1.5"/><line x1="7.8" y1="11.3" x2="11" y2="11.3" stroke="#7b5fb0" stroke-width="1.5"/><line x1="7.8" y1="16.6" x2="11" y2="16.6" stroke="#7b5fb0" stroke-width="1.5"/><line x1="7.8" y1="21.9" x2="11" y2="21.9" stroke="#7b5fb0" stroke-width="1.5"/><line x1="7.8" y1="27.2" x2="11" y2="27.2" stroke="#7b5fb0" stroke-width="1.5"/><path d="M16.5 10 V27 M36 10 V27 M16.5 18 H36" stroke="#000" stroke-width="1.4" fill="none"/><path d="M16.5 18 L22 15 V21 Z M36 18 L30.5 15 V21 Z" fill="#000"/><path d="M8 34 V47 M39 34 V47 M8 40 H39" stroke="#1a1aff" stroke-width="1.4" fill="none"/><path d="M8 40 L15 36 V44 Z M39 40 L32 36 V44 Z" fill="#1a1aff"/></g><g transform="translate(285,594)"><circle cx="24" cy="24" r="22" fill="#b0e0e0" stroke="#1a1aff" stroke-width="1.8"/><text x="23" y="30" font-size="13" fill="#1a1aff" text-anchor="middle" font-family="Liberation Sans">1</text><rect x="25.5" y="25.5" width="20.5" height="20.5" fill="#000" fill-opacity="0.62"/><path d="M33 30.5 L25.5 36 L33 41.5 Z" fill="#fff"/></g><g transform="translate(341,594)"><path d="M21 40.5 A8.3 8.3 0 0 1 21 25.5 L26.3 29.6 A8 8 0 1 1 34.6 38.7 A7 7 0 0 1 21 40.5 Z" fill="#80ffff" stroke="none"/><path d="M19.6 40.7 A8.3 8.3 0 0 1 21 25.5 M26.3 29.6 A8 8 0 1 1 34.6 38.7 M22 40.5 A6.5 6.5 0 0 0 34 40.5" fill="none" stroke="#1a1aff" stroke-width="1.3"/><path d="M35.50 14.50 A4.48 4.48 0 0 1 32.13 21.92 A4.78 4.78 0 0 1 24.00 25.00 A4.78 4.78 0 0 1 15.87 21.92 A4.48 4.48 0 0 1 12.50 14.50 A4.48 4.48 0 0 1 15.87 7.08 A4.78 4.78 0 0 1 24.00 4.00 A4.78 4.78 0 0 1 32.13 7.08 A4.48 4.48 0 0 1 35.50 14.50 Z" fill="none" stroke="#000" stroke-width="1.4"/></g><g transform="translate(397,594)"><rect x="11" y="2.5" width="20" height="10" fill="none" stroke="#000" stroke-width="1.4"/><path d="M31 12.5 L36.5 18 L27 28" fill="none" stroke="#000" stroke-width="1.3"/><path d="M25 30 L26 24 L30 27 Z" fill="#000"/><rect x="15" y="29.5" width="18" height="17.5" fill="#80ffff"/><text x="15.5" y="38.5" font-size="11" fill="#000" font-family="Liberation Sans">a</text></g><g transform="translate(453,594)"><path d="M11 0 V29 M11 1 H39" stroke="#ff7f00" stroke-width="1.9" fill="none"/><line x1="16.5" y1="-2.2" x2="16.5" y2="1" stroke="#ff7f00" stroke-width="1.5"/><line x1="22.1" y1="-2.2" x2="22.1" y2="1" stroke="#ff7f00" stroke-width="1.5"/><line x1="27.7" y1="-2.2" x2="27.7" y2="1" stroke="#ff7f00" stroke-width="1.5"/><line x1="33.3" y1="-2.2" x2="33.3" y2="1" stroke="#ff7f00" stroke-width="1.5"/><line x1="38.9" y1="-2.2" x2="38.9" y2="1" stroke="#ff7f00" stroke-width="1.5"/><line x1="7.8" y1="6.0" x2="11" y2="6.0" stroke="#ff7f00" stroke-width="1.5"/><line x1="7.8" y1="11.3" x2="11" y2="11.3" stroke="#ff7f00" stroke-width="1.5"/><line x1="7.8" y1="16.6" x2="11" y2="16.6" stroke="#ff7f00" stroke-width="1.5"/><line x1="7.8" y1="21.9" x2="11" y2="21.9" stroke="#ff7f00" stroke-width="1.5"/><line x1="7.8" y1="27.2" x2="11" y2="27.2" stroke="#ff7f00" stroke-width="1.5"/><path d="M15 26 L18 15 L25 21 L29 11 L34 15 L36 9" fill="none" stroke="#000" stroke-width="1.5"/><path d="M8 33 L18 39 L34 33" fill="none" stroke="#1a1aff" stroke-width="1.2"/></g></svg>
<svg style="left:53px;top:702px;" width="626" height="64" viewBox="53 702 626 64"><g transform="translate(61,710)"><path d="M11 0 V29 M11 1 H39" stroke="#7b5fb0" stroke-width="1.9" fill="none"/><line x1="16.5" y1="-2.2" x2="16.5" y2="1" stroke="#7b5fb0" stroke-width="1.5"/><line x1="22.1" y1="-2.2" x2="22.1" y2="1" stroke="#7b5fb0" stroke-width="1.5"/><line x1="27.7" y1="-2.2" x2="27.7" y2="1" stroke="#7b5fb0" stroke-width="1.5"/><line x1="33.3" y1="-2.2" x2="33.3" y2="1" stroke="#7b5fb0" stroke-width="1.5"/><line x1="38.9" y1="-2.2" x2="38.9" y2="1" stroke="#7b5fb0" stroke-width="1.5"/><line x1="7.8" y1="6.0" x2="11" y2="6.0" stroke="#7b5fb0" stroke-width="1.5"/><line x1="7.8" y1="11.3" x2="11" y2="11.3" stroke="#7b5fb0" stroke-width="1.5"/><line x1="7.8" y1="16.6" x2="11" y2="16.6" stroke="#7b5fb0" stroke-width="1.5"/><line x1="7.8" y1="21.9" x2="11" y2="21.9" stroke="#7b5fb0" stroke-width="1.5"/><line x1="7.8" y1="27.2" x2="11" y2="27.2" stroke="#7b5fb0" stroke-width="1.5"/><path d="M16.5 10 V27 M36 10 V27 M16.5 18 H36" stroke="#000" stroke-width="1.4" fill="none"/><path d="M16.5 18 L22 15 V21 Z M36 18 L30.5 15 V21 Z" fill="#000"/><path d="M7 33 V47 M40 33 V47 M7 40 H40" stroke="#a0168e" stroke-width="1.4" fill="none"/><path d="M7 40 L15 35.5 V44.5 Z M40 40 L32 35.5 V44.5 Z" fill="#a0168e"/></g><g transform="translate(117,710)"><path d="M11 0 V29 M11 1 H39" stroke="#7b5fb0" stroke-width="1.9" fill="none"/><line x1="16.5" y1="-2.2" x2="16.5" y2="1" stroke="#7b5fb0" stroke-width="1.5"/><line x1="22.1" y1="-2.2" x2="22.1" y2="1" stroke="#7b5fb0" stroke-width="1.5"/><line x1="27.7" y1="-2.2" x2="27.7" y2="1" stroke="#7b5fb0" stroke-width="1.5"/><line x1="33.3" y1="-2.2" x2="33.3" y2="1" stroke="#7b5fb0" stroke-width="1.5"/><line x1="38.9" y1="-2.2" x2="38.9" y2="1" stroke="#7b5fb0" stroke-width="1.5"/><line x1="7.8" y1="6.0" x2="11" y2="6.0" stroke="#7b5fb0" stroke-width="1.5"/><line x1="7.8" y1="11.3" x2="11" y2="11.3" stroke="#7b5fb0" stroke-width="1.5"/><line x1="7.8" y1="16.6" x2="11" y2="16.6" stroke="#7b5fb0" stroke-width="1.5"/><line x1="7.8" y1="21.9" x2="11" y2="21.9" stroke="#7b5fb0" stroke-width="1.5"/><line x1="7.8" y1="27.2" x2="11" y2="27.2" stroke="#7b5fb0" stroke-width="1.5"/><path d="M18 17 L24 9 H36 V27 H18 Z" fill="none" stroke="#000" stroke-width="1.3"/><rect x="16" y="15" width="4" height="4"/><rect x="22" y="7" width="4" height="4"/><rect x="34" y="7" width="4" height="4"/><rect x="34" y="25" width="4" height="4"/><rect x="16" y="25" width="4" height="4"/><path d="M6 34 L17 41 L33 34" fill="none" stroke="#a0168e" stroke-width="1.2"/></g><g transform="translate(173,710)"><path d="M11 0 V29 M11 1 H39" stroke="#7b5fb0" stroke-width="1.9" fill="none"/><line x1="16.5" y1="-2.2" x2="16.5" y2="1" stroke="#7b5fb0" stroke-width="1.5"/><line x1="22.1" y1="-2.2" x2="22.1" y2="1" stroke="#7b5fb0" stroke-width="1.5"/><line x1="27.7" y1="-2.2" x2="27.7" y2="1" stroke="#7b5fb0" stroke-width="1.5"/><line x1="33.3" y1="-2.2" x2="33.3" y2="1" stroke="#7b5fb0" stroke-width="1.5"/><line x1="38.9" y1="-2.2" x2="38.9" y2="1" stroke="#7b5fb0" stroke-width="1.5"/><line x1="7.8" y1="6.0" x2="11" y2="6.0" stroke="#7b5fb0" stroke-width="1.5"/><line x1="7.8" y1="11.3" x2="11" y2="11.3" stroke="#7b5fb0" stroke-width="1.5"/><line x1="7.8" y1="16.6" x2="11" y2="16.6" stroke="#7b5fb0" stroke-width="1.5"/><line x1="7.8" y1="21.9" x2="11" y2="21.9" stroke="#7b5fb0" stroke-width="1.5"/><line x1="7.8" y1="27.2" x2="11" y2="27.2" stroke="#7b5fb0" stroke-width="1.5"/><path d="M18 28 V17 L26 8 H36 V28 Z" fill="none" stroke="#000" stroke-width="1.5"/><path d="M15 47 V38 L24 30.3 L33 38 V47 Z" fill="#8080ff" /></g><g transform="translate(229,710)"><path d="M11 0 V29 M11 1 H39" stroke="#7b5fb0" stroke-width="1.9" fill="none"/><line x1="16.5" y1="-2.2" x2="16.5" y2="1" stroke="#7b5fb0" stroke-width="1.5"/><line x1="22.1" y1="-2.2" x2="22.1" y2="1" stroke="#7b5fb0" stroke-width="1.5"/><line x1="27.7" y1="-2.2" x2="27.7" y2="1" stroke="#7b5fb0" stroke-width="1.5"/><line x1="33.3" y1="-2.2" x2="33.3" y2="1" stroke="#7b5fb0" stroke-width="1.5"/><line x1="38.9" y1="-2.2" x2="38.9" y2="1" stroke="#7b5fb0" stroke-width="1.5"/><line x1="7.8" y1="6.0" x2="11" y2="6.0" stroke="#7b5fb0" stroke-width="1.5"/><line x1="7.8" y1="11.3" x2="11" y2="11.3" stroke="#7b5fb0" stroke-width="1.5"/><line x1="7.8" y1="16.6" x2="11" y2="16.6" stroke="#7b5fb0" stroke-width="1.5"/><line x1="7.8" y1="21.9" x2="11" y2="21.9" stroke="#7b5fb0" stroke-width="1.5"/><line x1="7.8" y1="27.2" x2="11" y2="27.2" stroke="#7b5fb0" stroke-width="1.5"/><path d="M17 12 L27 7 L37 12 V23 L27 28 L17 23 Z M17 12 L27 17 L37 12 M27 17 V28 M17 18 L27 23 L37 18" fill="none" stroke="#000" stroke-width="1.3"/><path d="M15 47 V38 L24 30.3 L33 38 V47 Z" fill="#8080ff" /></g><g transform="translate(285,710)"><path d="M11 0 V29 M11 1 H39" stroke="#7b5fb0" stroke-width="1.9" fill="none"/><line x1="16.5" y1="-2.2" x2="16.5" y2="1" stroke="#7b5fb0" stroke-width="1.5"/><line x1="22.1" y1="-2.2" x2="22.1" y2="1" stroke="#7b5fb0" stroke-width="1.5"/><line x1="27.7" y1="-2.2" x2="27.7" y2="1" stroke="#7b5fb0" stroke-width="1.5"/><line x1="33.3" y1="-2.2" x2="33.3" y2="1" stroke="#7b5fb0" stroke-width="1.5"/><line x1="38.9" y1="-2.2" x2="38.9" y2="1" stroke="#7b5fb0" stroke-width="1.5"/><line x1="7.8" y1="6.0" x2="11" y2="6.0" stroke="#7b5fb0" stroke-width="1.5"/><line x1="7.8" y1="11.3" x2="11" y2="11.3" stroke="#7b5fb0" stroke-width="1.5"/><line x1="7.8" y1="16.6" x2="11" y2="16.6" stroke="#7b5fb0" stroke-width="1.5"/><line x1="7.8" y1="21.9" x2="11" y2="21.9" stroke="#7b5fb0" stroke-width="1.5"/><line x1="7.8" y1="27.2" x2="11" y2="27.2" stroke="#7b5fb0" stroke-width="1.5"/><circle cx="27" cy="19" r="10" fill="none" stroke="#000" stroke-width="1.5"/><path d="M19 19 H35" stroke="#000" stroke-width="1.4"/><path d="M19 19 L23 16 V22 Z M35 19 L31 16 V22 Z" fill="#000"/><circle cx="24" cy="38" r="9" fill="#8080ff" stroke="#a0168e" stroke-width="1"/></g><g transform="translate(341,710)"><path d="M20.4 24 V47.4 M20.4 27.1 H47" stroke="#7b5fb0" stroke-width="1.5" fill="none"/><line x1="24.5" y1="24.6" x2="24.5" y2="27.1" stroke="#7b5fb0" stroke-width="1.2"/><line x1="29.5" y1="24.6" x2="29.5" y2="27.1" stroke="#7b5fb0" stroke-width="1.2"/><line x1="34.5" y1="24.6" x2="34.5" y2="27.1" stroke="#7b5fb0" stroke-width="1.2"/><line x1="39.5" y1="24.6" x2="39.5" y2="27.1" stroke="#7b5fb0" stroke-width="1.2"/><line x1="44.5" y1="24.6" x2="44.5" y2="27.1" stroke="#7b5fb0" stroke-width="1.2"/><line x1="17.9" y1="31.0" x2="20.4" y2="31.0" stroke="#7b5fb0" stroke-width="1.2"/><line x1="17.9" y1="35.5" x2="20.4" y2="35.5" stroke="#7b5fb0" stroke-width="1.2"/><line x1="17.9" y1="40.0" x2="20.4" y2="40.0" stroke="#7b5fb0" stroke-width="1.2"/><line x1="17.9" y1="44.5" x2="20.4" y2="44.5" stroke="#7b5fb0" stroke-width="1.2"/><path d="M8.7 22.9 L20.4 32.5 L38.5 13.3" fill="none" stroke="#800080" stroke-width="3.6"/><path d="M24.7 47.4 L47 36.7 M29 47.4 V35.7 M34.3 47.4 V35.7 M39.6 47.4 V35.7 M43.9 47.4 V35.7" stroke="#000" stroke-width="1.5" fill="none"/></g><g transform="translate(397,710)"><path d="M11 0 V29 M11 1 H39" stroke="#7b5fb0" stroke-width="1.9" fill="none"/><line x1="16.5" y1="-2.2" x2="16.5" y2="1" stroke="#7b5fb0" stroke-width="1.5"/><line x1="22.1" y1="-2.2" x2="22.1" y2="1" stroke="#7b5fb0" stroke-width="1.5"/><line x1="27.7" y1="-2.2" x2="27.7" y2="1" stroke="#7b5fb0" stroke-width="1.5"/><line x1="33.3" y1="-2.2" x2="33.3" y2="1" stroke="#7b5fb0" stroke-width="1.5"/><line x1="38.9" y1="-2.2" x2="38.9" y2="1" stroke="#7b5fb0" stroke-width="1.5"/><line x1="7.8" y1="6.0" x2="11" y2="6.0" stroke="#7b5fb0" stroke-width="1.5"/><line x1="7.8" y1="11.3" x2="11" y2="11.3" stroke="#7b5fb0" stroke-width="1.5"/><line x1="7.8" y1="16.6" x2="11" y2="16.6" stroke="#7b5fb0" stroke-width="1.5"/><line x1="7.8" y1="21.9" x2="11" y2="21.9" stroke="#7b5fb0" stroke-width="1.5"/><line x1="7.8" y1="27.2" x2="11" y2="27.2" stroke="#7b5fb0" stroke-width="1.5"/><path d="M17 10 V28 H38 M17 17 A11 11 0 0 1 28 28" fill="none" stroke="#000" stroke-width="1.5"/><path d="M6 34 L17 41 L33 34" fill="none" stroke="#a0168e" stroke-width="1.2"/></g><g transform="translate(453,710)"><path d="M11 0 V29 M11 1 H39" stroke="#7b5fb0" stroke-width="1.9" fill="none"/><line x1="16.5" y1="-2.2" x2="16.5" y2="1" stroke="#7b5fb0" stroke-width="1.5"/><line x1="22.1" y1="-2.2" x2="22.1" y2="1" stroke="#7b5fb0" stroke-width="1.5"/><line x1="27.7" y1="-2.2" x2="27.7" y2="1" stroke="#7b5fb0" stroke-width="1.5"/><line x1="33.3" y1="-2.2" x2="33.3" y2="1" stroke="#7b5fb0" stroke-width="1.5"/><line x1="38.9" y1="-2.2" x2="38.9" y2="1" stroke="#7b5fb0" stroke-width="1.5"/><line x1="7.8" y1="6.0" x2="11" y2="6.0" stroke="#7b5fb0" stroke-width="1.5"/><line x1="7.8" y1="11.3" x2="11" y2="11.3" stroke="#7b5fb0" stroke-width="1.5"/><line x1="7.8" y1="16.6" x2="11" y2="16.6" stroke="#7b5fb0" stroke-width="1.5"/><line x1="7.8" y1="21.9" x2="11" y2="21.9" stroke="#7b5fb0" stroke-width="1.5"/><line x1="7.8" y1="27.2" x2="11" y2="27.2" stroke="#7b5fb0" stroke-width="1.5"/><circle cx="27" cy="19" r="10" fill="none" stroke="#000" stroke-width="1.5"/><path d="M27 19 H35" stroke="#000" stroke-width="1.4"/><path d="M36 19 L31 16 V22 Z" fill="#000"/><path d="M15 47 V38 L24 30.3 L33 38 V47 Z" fill="#8080ff" stroke="#a0168e" stroke-width="1.3"/></g></svg>
<svg style="left:53px;top:1185px;" width="626" height="64" viewBox="53 1185 626 64"><g transform="translate(61,1193)"><path d="M11 3.5 V29 M11 3.5 H38" stroke="#7b5fb0" stroke-width="1.5" fill="none"/><line x1="15" y1="1.0" x2="15" y2="3.5" stroke="#7b5fb0" stroke-width="1.1"/><line x1="20" y1="1.0" x2="20" y2="3.5" stroke="#7b5fb0" stroke-width="1.1"/><line x1="25" y1="1.0" x2="25" y2="3.5" stroke="#7b5fb0" stroke-width="1.1"/><line x1="30" y1="1.0" x2="30" y2="3.5" stroke="#7b5fb0" stroke-width="1.1"/><line x1="35" y1="1.0" x2="35" y2="3.5" stroke="#7b5fb0" stroke-width="1.1"/><line x1="8.5" y1="8.5" x2="11" y2="8.5" stroke="#7b5fb0" stroke-width="1.1"/><line x1="8.5" y1="13.5" x2="11" y2="13.5" stroke="#7b5fb0" stroke-width="1.1"/><line x1="8.5" y1="18.5" x2="11" y2="18.5" stroke="#7b5fb0" stroke-width="1.1"/><line x1="8.5" y1="23.5" x2="11" y2="23.5" stroke="#7b5fb0" stroke-width="1.1"/><path d="M18 28 V17 L26 8.5 H36 V28 Z" fill="none" stroke="#000" stroke-width="1.6"/><path d="M14.5 47 V37 L24 31 L33.5 37 V47 Z" fill="none" stroke="#f05050" stroke-width="1.2"/></g><g transform="translate(117,1193)"><rect x="7.5" y="2" width="31" height="44" fill="#eeeee8" stroke="#ff0000" stroke-width="3.2"/><text x="22" y="35.5" font-size="32" fill="#ff0000" text-anchor="middle" font-family="Liberation Sans">S</text><path d="M22 27 V47 M22 27 H47" stroke="#7b5fb0" stroke-width="1.5" fill="none"/><line x1="26" y1="24.5" x2="26" y2="27" stroke="#7b5fb0" stroke-width="1.1"/><line x1="31" y1="24.5" x2="31" y2="27" stroke="#7b5fb0" stroke-width="1.1"/><line x1="36" y1="24.5" x2="36" y2="27" stroke="#7b5fb0" stroke-width="1.1"/><line x1="41" y1="24.5" x2="41" y2="27" stroke="#7b5fb0" stroke-width="1.1"/><line x1="19.5" y1="32" x2="22" y2="32" stroke="#7b5fb0" stroke-width="1.1"/><line x1="19.5" y1="37" x2="22" y2="37" stroke="#7b5fb0" stroke-width="1.1"/><line x1="19.5" y1="42" x2="22" y2="42" stroke="#7b5fb0" stroke-width="1.1"/><path d="M25 47 L49 37 M30 47 V35 M35 47 V35 M40 47 V35 M45 47 V35" stroke="#000" stroke-width="1.5" fill="none"/></g><g transform="translate(173,1193)"><rect x="12.5" y="2.6" width="21.5" height="42.7" fill="none" stroke="#f05050" stroke-width="1.4"/><path d="M12.5 2.6 L34 45.3 M34 2.6 L12.5 45.3" stroke="#ff4040" stroke-width="1"/></g><g transform="translate(229,1193)"><rect x="9.5" y="9.5" width="29" height="29" fill="none" stroke="#ff2020" stroke-width="2"/><path d="M9.5 38.5 L38.5 9.5" stroke="#ff2020" stroke-width="1.6"/></g><g transform="translate(285,1193)"><path d="M7 16 L24 23.3 L40.7 16 V30.5 L24 23.3 L7 30.5 Z" fill="none" stroke="#ff2020" stroke-width="1.6"/></g><g transform="translate(341,1193)"><path d="M13 6.3 H35 L43.3 23 L35 39.8 H13 L4.4 23 Z M6 23 H42" fill="none" stroke="#ff4040" stroke-width="1.3"/><text x="24" y="19" font-size="9" fill="#ff4040" text-anchor="middle" font-family="Liberation Sans">XX</text><text x="24" y="32" font-size="9" fill="#ff4040" text-anchor="middle" font-family="Liberation Sans">XXXX</text></g><g transform="translate(397,1193)"><circle cx="19" cy="23" r="11" fill="#eeeee8" stroke="#ff5050" stroke-width="1.2"/><path d="M9 19.5 H37.5 M9 26 H33" stroke="#ff5050" stroke-width="1.1"/><path d="M19 27 V47 M19 27 H47.8" stroke="#7b5fb0" stroke-width="1.5" fill="none"/><line x1="23" y1="24.5" x2="23" y2="27" stroke="#7b5fb0" stroke-width="1.1"/><line x1="28" y1="24.5" x2="28" y2="27" stroke="#7b5fb0" stroke-width="1.1"/><line x1="33" y1="24.5" x2="33" y2="27" stroke="#7b5fb0" stroke-width="1.1"/><line x1="38" y1="24.5" x2="38" y2="27" stroke="#7b5fb0" stroke-width="1.1"/><line x1="43" y1="24.5" x2="43" y2="27" stroke="#7b5fb0" stroke-width="1.1"/><line x1="16.5" y1="32" x2="19" y2="32" stroke="#7b5fb0" stroke-width="1.1"/><line x1="16.5" y1="37" x2="19" y2="37" stroke="#7b5fb0" stroke-width="1.1"/><line x1="16.5" y1="42" x2="19" y2="42" stroke="#7b5fb0" stroke-width="1.1"/><path d="M23.7 47 L47.7 37 M28.7 47 V35 M33.7 47 V35 M38.7 47 V35 M43.7 47 V35" stroke="#000" stroke-width="1.5" fill="none"/></g></svg>
<div class="a" style="left:49px;top:341px;width:464px;height:90px;border:8px solid #fdc63a"></div>
<div class="a" style="left:57px;top:349px;width:448px;height:5px;background:#2d2d2d;"></div>
<div class="a" style="left:57px;top:418px;width:448px;height:5px;background:#2d2d2d;"></div>
<div class="a" style="left:607px;top:350px;width:187px;height:313px;background:#3c3c3c;border:1px solid #1e1e1e;box-shadow:2px 2px 3px rgba(0,0,0,0.45)"></div>
<div class="a" style="left:622px;top:431px;width:158px;height:1px;background:#8a8a8a;"></div>
<div class="a" style="left:622px;top:509px;width:158px;height:1px;background:#8a8a8a;"></div>
<div class="a" style="left:622px;top:623px;width:158px;height:1px;background:#8a8a8a;"></div>
<div class="t" style="left:658px;top:364.2px;font-size:17.5px;font-weight:400;color:#fff;">Symbol</div>
<div class="t" style="left:658px;top:400.2px;font-size:17.5px;font-weight:400;color:#fff;">Detail</div>
<div class="t" style="left:658px;top:442.2px;font-size:17.5px;font-weight:400;color:#fff;">Set Scale...</div>
<div class="t" style="left:658px;top:478.2px;font-size:17.5px;font-weight:400;color:#fff;">Legend</div>
<div class="t" style="left:658px;top:520.2px;font-size:17.5px;font-weight:400;color:#fff;">Export</div>
<div class="t" style="left:658px;top:556.2px;font-size:17.5px;font-weight:400;color:#6e6e6e;">Save</div>
<div class="t" style="left:658px;top:592.2px;font-size:17.5px;font-weight:400;color:#fff;">Pin</div>
<div class="t" style="left:658px;top:634.2px;font-size:17.5px;font-weight:400;color:#fff;">Hide</div>
<svg style="left:607px;top:350px;" width="187" height="313" viewBox="607 350 187 313"><rect x="610" y="357" width="34" height="34" fill="#1765a5"/><g fill="none" stroke="#fff" stroke-width="1.6"><rect x="615.5" y="362.5" width="23" height="23"/><path d="M623.5 362.5 V385.5 M631 362.5 V385.5 M615.5 370 H638.5 M615.5 378 H638.5"/><rect x="615.5" y="398" width="23" height="23"/><path d="M622.5 398 V421 M615.5 405 H638.5 M615.5 413 H638.5"/><path d="M627 445 L634 457 H620 Z"/><path d="M614 439 L620 445 M614 439 H619 M614 439 V444 M640 439 L634 445 M640 439 H635 M640 439 V444 M614 467 L620 461 M614 467 H619 M614 467 V462 M640 467 L634 461 M640 467 H635 M640 467 V462" stroke-width="1.4"/><rect x="614.5" y="474.5" width="26" height="24"/><path d="M629 481 H637 M629 486 H637 M629 491 H637 M620 492 H626"/><path d="M618 487 L620.5 481 L623 487 Z" fill="#fff"/><circle cx="620.5" cy="492" r="2.2" fill="#fff"/><path d="M616 527 V541 H638 V527 M627 521 V535 M621 526 L627 519 L633 526"/></g><g fill="none" stroke="#6a6a6a" stroke-width="1.6"><path d="M615 556 H634 L640 562 V578 H615 Z M620 556 V563 H632 V556 M619 578 V569 H636 V578"/></g><g fill="none" stroke="#fff" stroke-width="1.6"><path d="M620 592 H634 M622 592 V604 L618 608 H636 L632 604 V592 M627 608 V618"/></g><path d="M773 482 L779 488 L773 494 M773 596 L779 602 L773 608" fill="none" stroke="#fff" stroke-width="1.8"/></svg>
<div class="a" style="left:602px;top:349px;width:194px;height:55px;border:8px solid #fdc63a"></div>
<div class="t" style="left:693px;top:102.4px;font-size:17.3px;font-weight:400;color:#fff;">Brighter Graphics - Floor Plan 1</div>
<svg style="left:955px;top:100px;" width="25" height="25" viewBox="955 100 25 25"><path d="M960 103 L976 119 M976 103 L960 119" stroke="#fff" stroke-width="1.8"/></svg>
<svg style="left:2065px;top:100px;" width="20" height="20" viewBox="2065 100 20 20"><path d="M2069 107 L2075 113 L2081 107" fill="none" stroke="#fff" stroke-width="1.8"/></svg>
<svg style="left:2099px;top:85px;" width="61" height="1231" viewBox="2099 85 61 1231"><g fill="none" stroke="#fff" stroke-width="1.8"><path d="M2104 92 H2146" stroke-dasharray="2 2" stroke-width="1.2" stroke="#aaa"/><path d="M2111 135.7 L2137 110"/><path d="M2111 188 L2131 168"/><path d="M2137 162.4 L2126 166 L2133.5 173.5 Z" fill="#fff" stroke-width="1"/><path d="M2111 240.5 A27 26.5 0 0 1 2138 214.2"/><path d="M2111 292.9 L2115 280.5 L2123 284.3 L2120 270 L2132 274.8 L2137 266.2"/><path d="M2111 332 H2137 M2114 325 V338 M2134 325 V338 M2111 335 L2117 329 M2131 335 L2137 329" stroke-width="1.6"/><rect x="2111" y="373" width="26.3" height="19.7"/><ellipse cx="2124" cy="435" rx="13" ry="10"/><path d="M2111 474.3 H2132.4 L2124.3 485 L2137.3 500 H2111 Z"/></g><path d="M2111 526 V552 M2111 527 H2139" stroke="#7b5fb0" stroke-width="1.8" fill="none"/><line x1="2117.5" y1="523.5" x2="2117.5" y2="527" stroke="#7b5fb0" stroke-width="1.5"/><line x1="2124.0" y1="523.5" x2="2124.0" y2="527" stroke="#7b5fb0" stroke-width="1.5"/><line x1="2130.5" y1="523.5" x2="2130.5" y2="527" stroke="#7b5fb0" stroke-width="1.5"/><line x1="2137.0" y1="523.5" x2="2137.0" y2="527" stroke="#7b5fb0" stroke-width="1.5"/><line x1="2107.5" y1="533" x2="2111" y2="533" stroke="#7b5fb0" stroke-width="1.5"/><line x1="2107.5" y1="539" x2="2111" y2="539" stroke="#7b5fb0" stroke-width="1.5"/><line x1="2107.5" y1="545" x2="2111" y2="545" stroke="#7b5fb0" stroke-width="1.5"/><line x1="2107.5" y1="551" x2="2111" y2="551" stroke="#7b5fb0" stroke-width="1.5"/><path d="M2111 578 V604 M2111 579 H2139" stroke="#7b5fb0" stroke-width="1.8" fill="none"/><line x1="2117.5" y1="575.5" x2="2117.5" y2="579" stroke="#7b5fb0" stroke-width="1.5"/><line x1="2124.0" y1="575.5" x2="2124.0" y2="579" stroke="#7b5fb0" stroke-width="1.5"/><line x1="2130.5" y1="575.5" x2="2130.5" y2="579" stroke="#7b5fb0" stroke-width="1.5"/><line x1="2137.0" y1="575.5" x2="2137.0" y2="579" stroke="#7b5fb0" stroke-width="1.5"/><line x1="2107.5" y1="585" x2="2111" y2="585" stroke="#7b5fb0" stroke-width="1.5"/><line x1="2107.5" y1="591" x2="2111" y2="591" stroke="#7b5fb0" stroke-width="1.5"/><line x1="2107.5" y1="597" x2="2111" y2="597" stroke="#7b5fb0" stroke-width="1.5"/><line x1="2107.5" y1="603" x2="2111" y2="603" stroke="#7b5fb0" stroke-width="1.5"/><path d="M2111 630 V656 M2111 631 H2139" stroke="#7b5fb0" stroke-width="1.8" fill="none"/><line x1="2117.5" y1="627.5" x2="2117.5" y2="631" stroke="#7b5fb0" stroke-width="1.5"/><line x1="2124.0" y1="627.5" x2="2124.0" y2="631" stroke="#7b5fb0" stroke-width="1.5"/><line x1="2130.5" y1="627.5" x2="2130.5" y2="631" stroke="#7b5fb0" stroke-width="1.5"/><line x1="2137.0" y1="627.5" x2="2137.0" y2="631" stroke="#7b5fb0" stroke-width="1.5"/><line x1="2107.5" y1="637" x2="2111" y2="637" stroke="#7b5fb0" stroke-width="1.5"/><line x1="2107.5" y1="643" x2="2111" y2="643" stroke="#7b5fb0" stroke-width="1.5"/><line x1="2107.5" y1="649" x2="2111" y2="649" stroke="#7b5fb0" stroke-width="1.5"/><line x1="2107.5" y1="655" x2="2111" y2="655" stroke="#7b5fb0" stroke-width="1.5"/><path d="M2111 682 V708 M2111 683 H2139" stroke="#7b5fb0" stroke-width="1.8" fill="none"/><line x1="2117.5" y1="679.5" x2="2117.5" y2="683" stroke="#7b5fb0" stroke-width="1.5"/><line x1="2124.0" y1="679.5" x2="2124.0" y2="683" stroke="#7b5fb0" stroke-width="1.5"/><line x1="2130.5" y1="679.5" x2="2130.5" y2="683" stroke="#7b5fb0" stroke-width="1.5"/><line x1="2137.0" y1="679.5" x2="2137.0" y2="683" stroke="#7b5fb0" stroke-width="1.5"/><line x1="2107.5" y1="689" x2="2111" y2="689" stroke="#7b5fb0" stroke-width="1.5"/><line x1="2107.5" y1="695" x2="2111" y2="695" stroke="#7b5fb0" stroke-width="1.5"/><line x1="2107.5" y1="701" x2="2111" y2="701" stroke="#7b5fb0" stroke-width="1.5"/><line x1="2107.5" y1="707" x2="2111" y2="707" stroke="#7b5fb0" stroke-width="1.5"/><g fill="none" stroke="#fff" stroke-width="1.6"><path d="M2119 541.4 L2126.5 533.8 H2137 V551.4 H2119"/><path d="M2117 603 V593 L2126 584 H2137 V603 Z"/><path d="M2118 645 H2136 M2117 638 V652 M2137 638 V652"/><path d="M2117.5 645 L2123 641.5 V648.5 Z M2136.5 645 L2131 641.5 V648.5 Z" fill="#fff"/><path d="M2115 702.7 L2139 693.2 M2121 703 V689 M2126 703 V689 M2131 703 V689 M2136 703 V689"/></g><rect x="2116.7" y="539.1" width="4.6" height="4.6" fill="#fff"/><rect x="2124.2" y="531.5" width="4.6" height="4.6" fill="#fff"/><rect x="2134.7" y="531.5" width="4.6" height="4.6" fill="#fff"/><rect x="2134.7" y="549.1" width="4.6" height="4.6" fill="#fff"/><rect x="2116.7" y="549.1" width="4.6" height="4.6" fill="#fff"/><path d="M2104 727 H2146" stroke-dasharray="2 2" stroke-width="1.2" stroke="#aaa"/><g fill="none" stroke="#fff" stroke-width="1.6"><rect x="2115" y="745" width="27" height="27"/><path d="M2134 1052 V1058 M2123 1052 V1058"/></g><text x="2128.5" y="766" font-size="17" fill="#fff" text-anchor="middle" font-family="Liberation Sans">A</text><g transform="translate(2104.5,798.3)"><path d="M11.5 27.7 L19.4 18.5 L26.8 25 L23.3 27.7 Z" fill="none" stroke="#fff" stroke-width="1.7" stroke-linejoin="round"/><path d="M19.4 18.5 L18 16.5 L21 12.3 L20.3 9.7 L28.2 2.2 M20.3 9.7 L34.3 22 L37.6 20.7 M34.3 22 L30.4 22.9 L28.2 25.9 L26.8 25" fill="none" stroke="#c9a82a" stroke-width="1.7" stroke-linejoin="round" stroke-linecap="round"/></g><g transform="translate(2105,846)"><path d="M13.7 23 L18.5 14.6 L28.6 1.7 M18.5 14.6 L25.5 21.2 L37 9 M13.7 23 L17.2 26.5 L25.5 21.2 M15.5 20.5 L19.5 23.5" fill="none" stroke="#1a8ae0" stroke-width="1.7" stroke-linejoin="round"/><path d="M10.5 27 L13 24 L16 26.8 L13.3 29.8 Z" fill="#fff"/></g><g fill="none" stroke="#fff" stroke-width="1.6"><rect x="2116" y="900" width="20" height="11"/><path d="M2136 911 L2142 917 L2137 923"/><path d="M2116 926 a3 3 0 0 1 6 0 a3 3 0 0 1 6 0 a3 3 0 0 1 6 0 a3 3 0 0 1 6 0"/></g><path d="M2139.00 966.00 A4.63 4.63 0 0 1 2135.78 973.78 A4.63 4.63 0 0 1 2128.00 977.00 A4.63 4.63 0 0 1 2120.22 973.78 A4.63 4.63 0 0 1 2117.00 966.00 A4.63 4.63 0 0 1 2120.22 958.22 A4.63 4.63 0 0 1 2128.00 955.00 A4.63 4.63 0 0 1 2135.78 958.22 A4.63 4.63 0 0 1 2139.00 966.00 Z" fill="none" stroke="#fff" stroke-width="1.6"/><g fill="none" stroke="#fff" stroke-width="1.6"><rect x="2116" y="1005" width="20" height="11"/><path d="M2136 1016 L2142 1022 L2132 1032"/></g><path d="M2130 1034 L2131 1027 L2136 1031 Z" fill="#fff"/><g fill="none" stroke="#fff" stroke-width="1.6"><path d="M2116 1073 H2140 V1066 H2133 V1057 Q2136 1054 2133 1050 Q2128 1046 2124 1050 Q2121 1054 2124 1057 V1066 H2116 Z M2116 1078 H2140"/><path d="M2143 1067 L2148 1072 L2153 1067"/><rect x="2115" y="1109" width="27" height="25"/><path d="M2116 1130 L2124 1122 L2130 1127 L2135 1121 L2141 1127"/><path d="M2120 1157 V1168 M2115 1162 H2126" /><path d="M2122 1169 V1189 H2142 V1169 H2130" stroke-dasharray="3 2.5"/></g><circle cx="2124" cy="1116" r="2" fill="#fff"/></svg>
<div class="a" style="left:948px;top:1263px;width:52px;height:52px;background:#195885;"></div>
<div class="a" style="left:1503px;top:1263px;width:16px;height:52px;background:#3a3a3a;"></div>
<svg style="left:680px;top:1263px;" width="1480" height="52" viewBox="680 1263 1480 52"><g fill="none" stroke="#fff" stroke-width="1.6"><rect x="693" y="1276" width="25" height="24" stroke="#666"/><path d="M693 1279.5 H718" stroke="#666" stroke-width="1.2"/><rect x="745" y="1276" width="25" height="24"/><path d="M757.5 1276 V1300 M745 1279.5 H770" /><rect x="797" y="1276" width="25" height="24"/><path d="M797 1288 H822 M797 1279.5 H822 M797 1291.5 H822"/><path d="M839.5 1277 V1301" stroke="#888" stroke-width="1.2"/><path d="M858 1276 H871 L878 1283 V1302 H858 Z M871 1276 V1283 H878"/><path d="M868 1283 V1299 M860.5 1291 H875.5" stroke-width="1.3"/><path d="M868 1282 L865 1286 H871 Z M868 1300 L865 1296 H871 Z M859.5 1291 L863.5 1288 V1294 Z M876.5 1291 L872.5 1288 V1294 Z" fill="#fff" stroke-width="0.5"/><path d="M910 1276 V1281 H931 V1276 M910 1285 V1302 M931 1293 V1302 M910 1285 H922 L931 1293 M922 1285 V1293 H931"/><path d="M913 1298 H928" stroke-width="1.3"/><path d="M912 1298 L916 1295.5 V1300.5 Z M929 1298 L925 1295.5 V1300.5 Z" fill="#fff" stroke-width="0.5"/><path d="M1018 1277 V1298 L1023 1293 L1027 1302 L1030 1301 L1027 1292 L1034 1292 Z"/><path d="M1066 1277 H1074 M1070 1277 V1302 M1066 1302 H1074"/><path d="M1076 1299 L1082 1283 L1088 1299 M1078 1294 H1086" stroke-width="1.4"/><circle cx="1126" cy="1285" r="9.5"/><path d="M1133 1292 L1144 1302" stroke-width="2"/><path d="M1126 1280 V1287 M1122 1283.5 H1130 M1122 1289 H1130" stroke-width="1.3"/><path d="M1175 1280 V1297 M1191 1280 L1180 1288.5 L1191 1297 Z" stroke="#666"/><path d="M1240 1280 L1229 1288.5 L1240 1297 Z" stroke="#666"/><path d="M1505 1286 L1511 1292 L1517 1286" stroke-width="1.8"/></g><path d="M964 1302 Q958 1294 957 1286 Q957 1283 960 1284 L964 1290 V1276 Q966 1274 968 1276 V1287 V1273 Q970 1271 972 1273 V1287 V1274 Q974 1272 976 1274 V1287 V1277 Q978 1275 980 1277 V1293 Q980 1300 976 1303 Z" fill="none" stroke="#fff" stroke-width="1.7"/></svg>
<div class="t" style="left:1535px;top:1279.5px;font-size:19.5px;font-weight:400;color:#fff;">106.68 x 76.20 cm</div>
<div class="t" style="left:1726px;top:1279.7px;font-size:19.3px;font-weight:400;color:#fff;">X: 9.525 cm = 30'-0", Y: 9.525 cm = 30'-0"</div>
<div class="a" style="left:1220px;top:1317px;width:51px;height:50px;background:#195885;"></div>
<div class="a" style="left:1272px;top:1317px;width:52px;height:50px;background:#195885;"></div>
<svg style="left:1100px;top:1317px;" width="360" height="50" viewBox="1100 1317 360 50"><g fill="none" stroke="#fff" stroke-width="1.8"><path d="M1134 1329 V1355 M1141.5 1329 V1355 M1149 1329 V1355 M1128 1335 H1155 M1128 1342 H1155 M1128 1349 H1155"/><path d="M1186 1329 V1355 M1193 1329 V1340 M1200 1329 V1336 M1181 1334.5 H1206 M1181 1342 H1191 M1181 1349 H1191"/><path d="M1194.5 1341.5 H1200 A6.75 6.75 0 0 1 1200 1355 H1194.5 M1196.5 1345.5 H1200 A2.75 2.75 0 0 1 1200 1351 H1196.5"/><rect x="1193.2" y="1340.6" width="3" height="5.6" fill="#fff" stroke="none"/><rect x="1193.2" y="1350.2" width="3" height="5.6" fill="#fff" stroke="none"/><path d="M1243 1355 H1236.5 V1329 H1249 L1256 1336 V1339 M1249 1329 V1336 H1256"/><path d="M1246.5 1341.5 H1252 A6.75 6.75 0 0 1 1252 1355 H1246.5 M1248.5 1345.5 H1252 A2.75 2.75 0 0 1 1252 1351 H1248.5"/><rect x="1245.2" y="1340.6" width="3" height="5.6" fill="#fff" stroke="none"/><rect x="1245.2" y="1350.2" width="3" height="5.6" fill="#fff" stroke="none"/><path d="M1288.5 1345.5 L1304 1330 L1311 1337 L1307.5 1340.5"/><path d="M1290 1346 L1294 1350 L1290 1354 L1286 1350 Z" fill="#fff"/><path d="M1288 1344 L1296 1352" stroke-width="1.2"/><path d="M1299.5 1341.5 H1304 A6.75 6.75 0 0 1 1304 1355 H1299.5 M1301.5 1345.5 H1304 A2.75 2.75 0 0 1 1304 1351 H1301.5"/><rect x="1298.2" y="1340.6" width="3" height="5.6" fill="#fff" stroke="none"/><rect x="1298.2" y="1350.2" width="3" height="5.6" fill="#fff" stroke="none"/><path d="M1339 1345 L1352 1329 L1362 1337"/><path d="M1338 1352 L1343 1346" stroke-width="3"/><rect x="1389.5" y="1329" width="27" height="26"/><path d="M1389.5 1333 H1416.5" stroke-width="1.2"/><path d="M1395 1340 H1411 L1407 1336 M1411 1346 H1395 L1399 1350" stroke-width="1.5"/><path d="M1432 1339 L1438 1345 L1444 1339"/></g><path d="M1364 1343 A6 6 0 1 1 1356 1339" fill="none" stroke="#1c8ee0" stroke-width="1.8"/><path d="M1359 1336 L1355 1340 L1360 1342 Z" fill="#1c8ee0"/><rect x="1272" y="1317" width="1" height="50" fill="#2f3d48"/></svg>
<div class="t" style="left:1481px;top:1333.4px;font-size:17.2px;font-weight:400;color:#fff;">X: 9.525 cm = 30'-0", Y: 9.525 cm = 30'-0"</div>
<div class="t" style="left:1832px;top:1333.2px;font-size:17.5px;font-weight:400;color:#fff;">106.68 x 76.20 cm</div>
<div class="t" style="left:2027px;top:1333.2px;font-size:17.5px;font-weight:400;color:#fff;">(-3.56, 34.54)</div>
<svg style="left:755px;top:137px;clip-path:inset(0 0 0 0)" width="1319" height="1126" viewBox="755 137 1319 1126"><line x1="841.5" y1="137" x2="841.5" y2="1251" stroke="#333" stroke-width="1.2"/><text x="836" y="170.0" font-size="6" fill="#333" text-anchor="middle" font-family="Liberation Sans">M</text><line x1="833" y1="173.0" x2="841" y2="173.0" stroke="#333" stroke-width="0.8"/><text x="836" y="257.1" font-size="6" fill="#333" text-anchor="middle" font-family="Liberation Sans">L</text><line x1="833" y1="260.1" x2="841" y2="260.1" stroke="#333" stroke-width="0.8"/><text x="836" y="344.2" font-size="6" fill="#333" text-anchor="middle" font-family="Liberation Sans">K</text><line x1="833" y1="347.2" x2="841" y2="347.2" stroke="#333" stroke-width="0.8"/><text x="836" y="431.29999999999995" font-size="6" fill="#333" text-anchor="middle" font-family="Liberation Sans">J</text><line x1="833" y1="434.29999999999995" x2="841" y2="434.29999999999995" stroke="#333" stroke-width="0.8"/><text x="836" y="518.4" font-size="6" fill="#333" text-anchor="middle" font-family="Liberation Sans">H</text><line x1="833" y1="521.4" x2="841" y2="521.4" stroke="#333" stroke-width="0.8"/><text x="836" y="605.5" font-size="6" fill="#333" text-anchor="middle" font-family="Liberation Sans">G</text><line x1="833" y1="608.5" x2="841" y2="608.5" stroke="#333" stroke-width="0.8"/><text x="836" y="692.5999999999999" font-size="6" fill="#333" text-anchor="middle" font-family="Liberation Sans">F</text><line x1="833" y1="695.5999999999999" x2="841" y2="695.5999999999999" stroke="#333" stroke-width="0.8"/><text x="836" y="779.6999999999999" font-size="6" fill="#333" text-anchor="middle" font-family="Liberation Sans">E</text><line x1="833" y1="782.6999999999999" x2="841" y2="782.6999999999999" stroke="#333" stroke-width="0.8"/><text x="836" y="866.8" font-size="6" fill="#333" text-anchor="middle" font-family="Liberation Sans">D</text><line x1="833" y1="869.8" x2="841" y2="869.8" stroke="#333" stroke-width="0.8"/><text x="836" y="953.9" font-size="6" fill="#333" text-anchor="middle" font-family="Liberation Sans">C</text><line x1="833" y1="956.9" x2="841" y2="956.9" stroke="#333" stroke-width="0.8"/><text x="836" y="1041.0" font-size="6" fill="#333" text-anchor="middle" font-family="Liberation Sans">B</text><line x1="833" y1="1044.0" x2="841" y2="1044.0" stroke="#333" stroke-width="0.8"/><text x="836" y="1128.1" font-size="6" fill="#333" text-anchor="middle" font-family="Liberation Sans">A</text><line x1="833" y1="1131.1" x2="841" y2="1131.1" stroke="#333" stroke-width="0.8"/><line x1="940.5" y1="273" x2="940.5" y2="335" stroke="#111" stroke-width="1"/><line x1="940.5" y1="335" x2="940.5" y2="920" stroke="#111" stroke-width="1" stroke-dasharray="14 4 3 4"/><circle cx="940" cy="267" r="5.5" fill="#fff" stroke="#1a1a1a" stroke-width="1"/><text x="940" y="268.8" font-size="5" fill="#111" text-anchor="middle" font-family="Liberation Sans">01</text><circle cx="940" cy="926" r="5.5" fill="#fff" stroke="#1a1a1a" stroke-width="1"/><text x="940" y="927.8" font-size="5" fill="#111" text-anchor="middle" font-family="Liberation Sans">01</text><line x1="1105.5" y1="273" x2="1105.5" y2="335" stroke="#111" stroke-width="1"/><line x1="1105.5" y1="335" x2="1105.5" y2="920" stroke="#111" stroke-width="1" stroke-dasharray="14 4 3 4"/><circle cx="1105" cy="267" r="5.5" fill="#fff" stroke="#1a1a1a" stroke-width="1"/><text x="1105" y="268.8" font-size="5" fill="#111" text-anchor="middle" font-family="Liberation Sans">02</text><circle cx="1105" cy="926" r="5.5" fill="#fff" stroke="#1a1a1a" stroke-width="1"/><text x="1105" y="927.8" font-size="5" fill="#111" text-anchor="middle" font-family="Liberation Sans">02</text><line x1="1270.5" y1="273" x2="1270.5" y2="335" stroke="#111" stroke-width="1"/><line x1="1270.5" y1="335" x2="1270.5" y2="920" stroke="#111" stroke-width="1" stroke-dasharray="14 4 3 4"/><circle cx="1270" cy="267" r="5.5" fill="#fff" stroke="#1a1a1a" stroke-width="1"/><text x="1270" y="268.8" font-size="5" fill="#111" text-anchor="middle" font-family="Liberation Sans">03</text><circle cx="1270" cy="926" r="5.5" fill="#fff" stroke="#1a1a1a" stroke-width="1"/><text x="1270" y="927.8" font-size="5" fill="#111" text-anchor="middle" font-family="Liberation Sans">03</text><line x1="1435.5" y1="273" x2="1435.5" y2="335" stroke="#111" stroke-width="1"/><line x1="1435.5" y1="335" x2="1435.5" y2="920" stroke="#111" stroke-width="1" stroke-dasharray="14 4 3 4"/><circle cx="1435" cy="267" r="5.5" fill="#fff" stroke="#1a1a1a" stroke-width="1"/><text x="1435" y="268.8" font-size="5" fill="#111" text-anchor="middle" font-family="Liberation Sans">04</text><circle cx="1435" cy="926" r="5.5" fill="#fff" stroke="#1a1a1a" stroke-width="1"/><text x="1435" y="927.8" font-size="5" fill="#111" text-anchor="middle" font-family="Liberation Sans">04</text><line x1="1600.5" y1="273" x2="1600.5" y2="335" stroke="#111" stroke-width="1"/><line x1="1600.5" y1="335" x2="1600.5" y2="920" stroke="#111" stroke-width="1" stroke-dasharray="14 4 3 4"/><circle cx="1600" cy="267" r="5.5" fill="#fff" stroke="#1a1a1a" stroke-width="1"/><text x="1600" y="268.8" font-size="5" fill="#111" text-anchor="middle" font-family="Liberation Sans">05</text><circle cx="1600" cy="926" r="5.5" fill="#fff" stroke="#1a1a1a" stroke-width="1"/><text x="1600" y="927.8" font-size="5" fill="#111" text-anchor="middle" font-family="Liberation Sans">05</text><line x1="1765.5" y1="273" x2="1765.5" y2="335" stroke="#111" stroke-width="1"/><line x1="1765.5" y1="335" x2="1765.5" y2="920" stroke="#111" stroke-width="1" stroke-dasharray="14 4 3 4"/><circle cx="1765" cy="267" r="5.5" fill="#fff" stroke="#1a1a1a" stroke-width="1"/><text x="1765" y="268.8" font-size="5" fill="#111" text-anchor="middle" font-family="Liberation Sans">06</text><circle cx="1765" cy="926" r="5.5" fill="#fff" stroke="#1a1a1a" stroke-width="1"/><text x="1765" y="927.8" font-size="5" fill="#111" text-anchor="middle" font-family="Liberation Sans">06</text><line x1="1930.5" y1="273" x2="1930.5" y2="335" stroke="#111" stroke-width="1"/><line x1="1930.5" y1="335" x2="1930.5" y2="920" stroke="#111" stroke-width="1" stroke-dasharray="14 4 3 4"/><circle cx="1930" cy="267" r="5.5" fill="#fff" stroke="#1a1a1a" stroke-width="1"/><text x="1930" y="268.8" font-size="5" fill="#111" text-anchor="middle" font-family="Liberation Sans">07</text><circle cx="1930" cy="926" r="5.5" fill="#fff" stroke="#1a1a1a" stroke-width="1"/><text x="1930" y="927.8" font-size="5" fill="#111" text-anchor="middle" font-family="Liberation Sans">07</text><line x1="869" y1="347.5" x2="927" y2="347.5" stroke="#111" stroke-width="1"/><line x1="927" y1="347.5" x2="2073" y2="347.5" stroke="#111" stroke-width="1" stroke-dasharray="14 4 3 4"/><circle cx="863" cy="347" r="5.5" fill="#fff" stroke="#1a1a1a" stroke-width="1"/><text x="863" y="348.8" font-size="5" fill="#111" text-anchor="middle" font-family="Liberation Sans">A</text><line x1="869" y1="512.5" x2="927" y2="512.5" stroke="#111" stroke-width="1"/><line x1="927" y1="512.5" x2="2073" y2="512.5" stroke="#111" stroke-width="1" stroke-dasharray="14 4 3 4"/><circle cx="863" cy="512" r="5.5" fill="#fff" stroke="#1a1a1a" stroke-width="1"/><text x="863" y="513.8" font-size="5" fill="#111" text-anchor="middle" font-family="Liberation Sans">B</text><line x1="869" y1="677.5" x2="927" y2="677.5" stroke="#111" stroke-width="1"/><line x1="927" y1="677.5" x2="2073" y2="677.5" stroke="#111" stroke-width="1" stroke-dasharray="14 4 3 4"/><circle cx="863" cy="677" r="5.5" fill="#fff" stroke="#1a1a1a" stroke-width="1"/><text x="863" y="678.8" font-size="5" fill="#111" text-anchor="middle" font-family="Liberation Sans">C</text><line x1="869" y1="842.5" x2="927" y2="842.5" stroke="#111" stroke-width="1"/><line x1="927" y1="842.5" x2="2073" y2="842.5" stroke="#111" stroke-width="1" stroke-dasharray="14 4 3 4"/><circle cx="863" cy="842" r="5.5" fill="#fff" stroke="#1a1a1a" stroke-width="1"/><text x="863" y="843.8" font-size="5" fill="#111" text-anchor="middle" font-family="Liberation Sans">D</text><line x1="940" y1="304.5" x2="2073" y2="304.5" stroke="#222" stroke-width="1"/><line x1="940" y1="320.5" x2="2073" y2="320.5" stroke="#222" stroke-width="1"/><line x1="938" y1="322" x2="942" y2="318" stroke="#222" stroke-width="1"/><line x1="1103" y1="322" x2="1107" y2="318" stroke="#222" stroke-width="1"/><line x1="1268" y1="322" x2="1272" y2="318" stroke="#222" stroke-width="1"/><line x1="1433" y1="322" x2="1437" y2="318" stroke="#222" stroke-width="1"/><line x1="1598" y1="322" x2="1602" y2="318" stroke="#222" stroke-width="1"/><line x1="1763" y1="322" x2="1767" y2="318" stroke="#222" stroke-width="1"/><line x1="1928" y1="322" x2="1932" y2="318" stroke="#222" stroke-width="1"/><line x1="938" y1="306" x2="942" y2="302" stroke="#222" stroke-width="1"/><text x="1022" y="316" font-size="5" fill="#333" text-anchor="middle" font-family="Liberation Sans" font-style="italic">30'-0"</text><text x="1187" y="316" font-size="5" fill="#333" text-anchor="middle" font-family="Liberation Sans" font-style="italic">30'-0"</text><text x="1352" y="316" font-size="5" fill="#333" text-anchor="middle" font-family="Liberation Sans" font-style="italic">30'-0"</text><text x="1517" y="316" font-size="5" fill="#333" text-anchor="middle" font-family="Liberation Sans" font-style="italic">30'-0"</text><text x="1682" y="316" font-size="5" fill="#333" text-anchor="middle" font-family="Liberation Sans" font-style="italic">30'-0"</text><text x="1847" y="316" font-size="5" fill="#333" text-anchor="middle" font-family="Liberation Sans" font-style="italic">30'-0"</text><text x="2012" y="316" font-size="5" fill="#333" text-anchor="middle" font-family="Liberation Sans" font-style="italic">30'-0"</text><text x="1681" y="300" font-size="5" fill="#333" text-anchor="middle" font-family="Liberation Sans" font-style="italic">270'-0"</text><line x1="1765" y1="302" x2="1929" y2="302" stroke="#e01010" stroke-width="1"/><path d="M1765 302 L1772 299 V305 Z M1929 302 L1922 299 V305 Z" fill="#e01010"/><rect x="1837" y="298" width="20" height="7" fill="#fff"/><text x="1847" y="304" font-size="6" fill="#e01010" text-anchor="middle" font-family="Liberation Sans">30'-0"</text><rect x="1297" y="336" width="110" height="58" fill="#fdfdb8"/><rect x="1957" y="337" width="109" height="57" fill="#fdfdb8"/><path d="M1297 336 H1406 V394" fill="none" stroke="#e01010" stroke-width="1"/><path d="M1957 337 H2066" fill="none" stroke="#e01010" stroke-width="1"/><rect x="1435" y="361" width="138" height="55" fill="#f9b38b" stroke="#222" stroke-width="1.6"/><line x1="1437" y1="366" x2="1571" y2="366" stroke="#222" stroke-width="0.8" stroke-dasharray="3 2"/><line x1="1437" y1="410" x2="1571" y2="410" stroke="#222" stroke-width="0.8" stroke-dasharray="3 2"/><rect x="1440" y="377" width="20" height="22" fill="none" stroke="#222" stroke-width="0.9"/><path d="M1440 380 L1432 388 L1440 396" fill="none" stroke="#222" stroke-width="0.8"/><text x="1450" y="390" font-size="5" fill="#222" text-anchor="middle" font-family="Liberation Sans">A7.01</text><text x="1503" y="389" font-size="7.5" font-weight="700" fill="#111" text-anchor="middle" font-family="Liberation Sans" style="white-space:pre" textLength="58" lengthAdjust="spacingAndGlyphs">CONFERENCE  207</text><line x1="1474.0" y1="391" x2="1532.0" y2="391" stroke="#111" stroke-width="1"/><text x="1508" y="401" font-size="7.5" font-weight="700" fill="#3a5a50" text-anchor="middle" font-family="Liberation Serif">23.15 sq m</text><path d="M1682 341 H1765 V436 H1734 A51.5 31 0 0 0 1682 399 Z" fill="#fde3d0"/><path d="M1679.0 341.0 A3.31 3.31 0 0 1 1685.6 341.0 A3.31 3.31 0 0 1 1692.2 341.0 A3.31 3.31 0 0 1 1698.8 341.0 A3.31 3.31 0 0 1 1705.5 341.0 A3.31 3.31 0 0 1 1712.1 341.0 A3.31 3.31 0 0 1 1718.7 341.0 A3.31 3.31 0 0 1 1725.3 341.0 A3.31 3.31 0 0 1 1731.9 341.0 A3.31 3.31 0 0 1 1738.5 341.0 A3.31 3.31 0 0 1 1745.2 341.0 A3.31 3.31 0 0 1 1751.8 341.0 A3.31 3.31 0 0 1 1758.4 341.0 A3.31 3.31 0 0 1 1765.0 341.0 A3.43 3.43 0 0 1 1765.0 347.9 A3.43 3.43 0 0 1 1765.0 354.7 A3.43 3.43 0 0 1 1765.0 361.6 A3.43 3.43 0 0 1 1765.0 368.4 A3.43 3.43 0 0 1 1765.0 375.3 A3.43 3.43 0 0 1 1765.0 382.1 A3.43 3.43 0 0 1 1765.0 389.0 A3.43 3.43 0 0 1 1765.0 395.9 A3.43 3.43 0 0 1 1765.0 402.7 A3.43 3.43 0 0 1 1765.0 409.6 A3.43 3.43 0 0 1 1765.0 416.4 A3.43 3.43 0 0 1 1765.0 423.3 A3.43 3.43 0 0 1 1765.0 430.1 A3.43 3.43 0 0 1 1765.0 437.0 A3.30 3.30 0 0 1 1758.4 437.0 A3.30 3.30 0 0 1 1751.8 437.0 A3.30 3.30 0 0 1 1745.2 437.0 A3.30 3.30 0 0 1 1738.6 437.0 A3.30 3.30 0 0 1 1732.0 437.0 A3.16 3.16 0 0 1 1728.4 431.8 A3.16 3.16 0 0 1 1724.8 426.6 A3.16 3.16 0 0 1 1721.2 421.4 A3.16 3.16 0 0 1 1717.6 416.2 A3.16 3.16 0 0 1 1714.0 411.0 A3.25 3.25 0 0 1 1708.0 408.5 A3.25 3.25 0 0 1 1702.0 406.0 A3.25 3.25 0 0 1 1696.0 403.5 A3.25 3.25 0 0 1 1690.0 401.0 A2.76 2.76 0 0 1 1684.5 400.5 A2.76 2.76 0 0 1 1679.0 400.0 A3.28 3.28 0 0 1 1679.0 393.4 A3.28 3.28 0 0 1 1679.0 386.9 A3.28 3.28 0 0 1 1679.0 380.3 A3.28 3.28 0 0 1 1679.0 373.8 A3.28 3.28 0 0 1 1679.0 367.2 A3.28 3.28 0 0 1 1679.0 360.7 A3.28 3.28 0 0 1 1679.0 354.1 A3.28 3.28 0 0 1 1679.0 347.6 A3.28 3.28 0 0 1 1679.0 341.0 " fill="none" stroke="#ef2020" stroke-width="1"/><path d="M927 485 L1020 477 Q1032 478 1032 490 V702 Q1032 715 1020 715 L927 707 Z" fill="#d9c9e0"/><path d="M926.0 484.0 A3.14 3.14 0 0 1 932.3 483.5 A3.14 3.14 0 0 1 938.5 482.9 A3.14 3.14 0 0 1 944.8 482.4 A3.14 3.14 0 0 1 951.1 481.9 A3.14 3.14 0 0 1 957.3 481.3 A3.14 3.14 0 0 1 963.6 480.8 A3.14 3.14 0 0 1 969.9 480.3 A3.14 3.14 0 0 1 976.1 479.7 A3.14 3.14 0 0 1 982.4 479.2 A3.14 3.14 0 0 1 988.7 478.7 A3.14 3.14 0 0 1 994.9 478.1 A3.14 3.14 0 0 1 1001.2 477.6 A3.14 3.14 0 0 1 1007.5 477.1 A3.14 3.14 0 0 1 1013.7 476.5 A3.14 3.14 0 0 1 1020.0 476.0 A3.18 3.18 0 0 1 1024.3 480.7 A3.18 3.18 0 0 1 1028.7 485.3 A3.18 3.18 0 0 1 1033.0 490.0 A3.23 3.23 0 0 1 1033.0 496.5 A3.23 3.23 0 0 1 1033.0 502.9 A3.23 3.23 0 0 1 1033.0 509.4 A3.23 3.23 0 0 1 1033.0 515.8 A3.23 3.23 0 0 1 1033.0 522.3 A3.23 3.23 0 0 1 1033.0 528.7 A3.23 3.23 0 0 1 1033.0 535.2 A3.23 3.23 0 0 1 1033.0 541.6 A3.23 3.23 0 0 1 1033.0 548.1 A3.23 3.23 0 0 1 1033.0 554.5 A3.23 3.23 0 0 1 1033.0 561.0 A3.23 3.23 0 0 1 1033.0 567.5 A3.23 3.23 0 0 1 1033.0 573.9 A3.23 3.23 0 0 1 1033.0 580.4 A3.23 3.23 0 0 1 1033.0 586.8 A3.23 3.23 0 0 1 1033.0 593.3 A3.23 3.23 0 0 1 1033.0 599.7 A3.23 3.23 0 0 1 1033.0 606.2 A3.23 3.23 0 0 1 1033.0 612.6 A3.23 3.23 0 0 1 1033.0 619.1 A3.23 3.23 0 0 1 1033.0 625.5 A3.23 3.23 0 0 1 1033.0 632.0 A3.23 3.23 0 0 1 1033.0 638.5 A3.23 3.23 0 0 1 1033.0 644.9 A3.23 3.23 0 0 1 1033.0 651.4 A3.23 3.23 0 0 1 1033.0 657.8 A3.23 3.23 0 0 1 1033.0 664.3 A3.23 3.23 0 0 1 1033.0 670.7 A3.23 3.23 0 0 1 1033.0 677.2 A3.23 3.23 0 0 1 1033.0 683.6 A3.23 3.23 0 0 1 1033.0 690.1 A3.23 3.23 0 0 1 1033.0 696.5 A3.23 3.23 0 0 1 1033.0 703.0 A3.06 3.06 0 0 1 1028.7 707.3 A3.06 3.06 0 0 1 1024.3 711.7 A3.06 3.06 0 0 1 1020.0 716.0 A3.14 3.14 0 0 1 1013.7 715.5 A3.14 3.14 0 0 1 1007.5 714.9 A3.14 3.14 0 0 1 1001.2 714.4 A3.14 3.14 0 0 1 994.9 713.9 A3.14 3.14 0 0 1 988.7 713.3 A3.14 3.14 0 0 1 982.4 712.8 A3.14 3.14 0 0 1 976.1 712.3 A3.14 3.14 0 0 1 969.9 711.7 A3.14 3.14 0 0 1 963.6 711.2 A3.14 3.14 0 0 1 957.3 710.7 A3.14 3.14 0 0 1 951.1 710.1 A3.14 3.14 0 0 1 944.8 709.6 A3.14 3.14 0 0 1 938.5 709.1 A3.14 3.14 0 0 1 932.3 708.5 A3.14 3.14 0 0 1 926.0 708.0 A3.20 3.20 0 0 1 926.0 701.6 A3.20 3.20 0 0 1 926.0 695.2 A3.20 3.20 0 0 1 926.0 688.8 A3.20 3.20 0 0 1 926.0 682.4 A3.20 3.20 0 0 1 926.0 676.0 A3.20 3.20 0 0 1 926.0 669.6 A3.20 3.20 0 0 1 926.0 663.2 A3.20 3.20 0 0 1 926.0 656.8 A3.20 3.20 0 0 1 926.0 650.4 A3.20 3.20 0 0 1 926.0 644.0 A3.20 3.20 0 0 1 926.0 637.6 A3.20 3.20 0 0 1 926.0 631.2 A3.20 3.20 0 0 1 926.0 624.8 A3.20 3.20 0 0 1 926.0 618.4 A3.20 3.20 0 0 1 926.0 612.0 A3.20 3.20 0 0 1 926.0 605.6 A3.20 3.20 0 0 1 926.0 599.2 A3.20 3.20 0 0 1 926.0 592.8 A3.20 3.20 0 0 1 926.0 586.4 A3.20 3.20 0 0 1 926.0 580.0 A3.20 3.20 0 0 1 926.0 573.6 A3.20 3.20 0 0 1 926.0 567.2 A3.20 3.20 0 0 1 926.0 560.8 A3.20 3.20 0 0 1 926.0 554.4 A3.20 3.20 0 0 1 926.0 548.0 A3.20 3.20 0 0 1 926.0 541.6 A3.20 3.20 0 0 1 926.0 535.2 A3.20 3.20 0 0 1 926.0 528.8 A3.20 3.20 0 0 1 926.0 522.4 A3.20 3.20 0 0 1 926.0 516.0 A3.20 3.20 0 0 1 926.0 509.6 A3.20 3.20 0 0 1 926.0 503.2 A3.20 3.20 0 0 1 926.0 496.8 A3.20 3.20 0 0 1 926.0 490.4 A3.20 3.20 0 0 1 926.0 484.0 " fill="none" stroke="#5060d0" stroke-width="1"/><rect x="1066" y="505" width="364" height="182" rx="8" fill="none" stroke="#333" stroke-width="0.9" stroke-dasharray="2 1.5"/><rect x="1080" y="520" width="348" height="149" rx="5" fill="#b4c6dc" stroke="#d42020" stroke-width="1.6"/><rect x="1607" y="519" width="44" height="103" fill="#c9e1a9"/><path d="M1606.0 518.0 A2.81 2.81 0 0 1 1611.6 518.0 A2.81 2.81 0 0 1 1617.2 518.0 A2.81 2.81 0 0 1 1622.9 518.0 A2.81 2.81 0 0 1 1628.5 518.0 A2.81 2.81 0 0 1 1634.1 518.0 A2.81 2.81 0 0 1 1639.8 518.0 A2.81 2.81 0 0 1 1645.4 518.0 A2.81 2.81 0 0 1 1651.0 518.0 A2.76 2.76 0 0 1 1651.0 523.5 A2.76 2.76 0 0 1 1651.0 529.1 A2.76 2.76 0 0 1 1651.0 534.6 A2.76 2.76 0 0 1 1651.0 540.1 A2.76 2.76 0 0 1 1651.0 545.6 A2.76 2.76 0 0 1 1651.0 551.2 A2.76 2.76 0 0 1 1651.0 556.7 A2.76 2.76 0 0 1 1651.0 562.2 A2.76 2.76 0 0 1 1651.0 567.7 A2.76 2.76 0 0 1 1651.0 573.3 A2.76 2.76 0 0 1 1651.0 578.8 A2.76 2.76 0 0 1 1651.0 584.3 A2.76 2.76 0 0 1 1651.0 589.8 A2.76 2.76 0 0 1 1651.0 595.4 A2.76 2.76 0 0 1 1651.0 600.9 A2.76 2.76 0 0 1 1651.0 606.4 A2.76 2.76 0 0 1 1651.0 611.9 A2.76 2.76 0 0 1 1651.0 617.5 A2.76 2.76 0 0 1 1651.0 623.0 A2.81 2.81 0 0 1 1645.4 623.0 A2.81 2.81 0 0 1 1639.8 623.0 A2.81 2.81 0 0 1 1634.1 623.0 A2.81 2.81 0 0 1 1628.5 623.0 A2.81 2.81 0 0 1 1622.9 623.0 A2.81 2.81 0 0 1 1617.2 623.0 A2.81 2.81 0 0 1 1611.6 623.0 A2.81 2.81 0 0 1 1606.0 623.0 A2.76 2.76 0 0 1 1606.0 617.5 A2.76 2.76 0 0 1 1606.0 611.9 A2.76 2.76 0 0 1 1606.0 606.4 A2.76 2.76 0 0 1 1606.0 600.9 A2.76 2.76 0 0 1 1606.0 595.4 A2.76 2.76 0 0 1 1606.0 589.8 A2.76 2.76 0 0 1 1606.0 584.3 A2.76 2.76 0 0 1 1606.0 578.8 A2.76 2.76 0 0 1 1606.0 573.3 A2.76 2.76 0 0 1 1606.0 567.7 A2.76 2.76 0 0 1 1606.0 562.2 A2.76 2.76 0 0 1 1606.0 556.7 A2.76 2.76 0 0 1 1606.0 551.2 A2.76 2.76 0 0 1 1606.0 545.6 A2.76 2.76 0 0 1 1606.0 540.1 A2.76 2.76 0 0 1 1606.0 534.6 A2.76 2.76 0 0 1 1606.0 529.1 A2.76 2.76 0 0 1 1606.0 523.5 A2.76 2.76 0 0 1 1606.0 518.0 " fill="none" stroke="#ef2020" stroke-width="1"/><rect x="1612" y="524" width="33" height="44" fill="none" stroke="#333" stroke-width="0.9"/><path d="M1612 524 L1645 568 M1645 524 L1612 568" stroke="#333" stroke-width="0.6"/><rect x="1612" y="573" width="33" height="44" fill="none" stroke="#333" stroke-width="0.9"/><path d="M1612 573 L1645 617 M1645 573 L1612 617" stroke="#333" stroke-width="0.6"/><line x1="1651" y1="576" x2="1660" y2="576" stroke="#e01010" stroke-width="1"/><rect x="1660" y="568" width="41" height="15" fill="#c9e1a9"/><text x="1680" y="574" font-size="5.5" font-weight="700" fill="#e01010" text-anchor="middle" font-family="Liberation Sans">Split into three</text><text x="1681" y="591" font-size="7.5" font-weight="700" fill="#111" text-anchor="middle" font-family="Liberation Sans" style="white-space:pre" textLength="36" lengthAdjust="spacingAndGlyphs">LOBBY  256</text><line x1="1663.0" y1="593" x2="1699.0" y2="593" stroke="#111" stroke-width="1"/><rect x="1717" y="524" width="34" height="44" fill="#fdfd90" stroke="#d42020" stroke-width="1.3"/><path d="M1717 524 L1751 568 M1751 524 L1717 568" stroke="#555" stroke-width="0.6"/><rect x="1764" y="522" width="101" height="72" fill="#f8bcc4"/><path d="M1764.0 522.0 A2.81 2.81 0 0 1 1769.6 522.0 A2.81 2.81 0 0 1 1775.2 522.0 A2.81 2.81 0 0 1 1780.8 522.0 A2.81 2.81 0 0 1 1786.4 522.0 A2.81 2.81 0 0 1 1792.1 522.0 A2.81 2.81 0 0 1 1797.7 522.0 A2.81 2.81 0 0 1 1803.3 522.0 A2.81 2.81 0 0 1 1808.9 522.0 A2.81 2.81 0 0 1 1814.5 522.0 A2.81 2.81 0 0 1 1820.1 522.0 A2.81 2.81 0 0 1 1825.7 522.0 A2.81 2.81 0 0 1 1831.3 522.0 A2.81 2.81 0 0 1 1836.9 522.0 A2.81 2.81 0 0 1 1842.6 522.0 A2.81 2.81 0 0 1 1848.2 522.0 A2.81 2.81 0 0 1 1853.8 522.0 A2.81 2.81 0 0 1 1859.4 522.0 A2.81 2.81 0 0 1 1865.0 522.0 A2.77 2.77 0 0 1 1865.0 527.5 A2.77 2.77 0 0 1 1865.0 533.1 A2.77 2.77 0 0 1 1865.0 538.6 A2.77 2.77 0 0 1 1865.0 544.2 A2.77 2.77 0 0 1 1865.0 549.7 A2.77 2.77 0 0 1 1865.0 555.2 A2.77 2.77 0 0 1 1865.0 560.8 A2.77 2.77 0 0 1 1865.0 566.3 A2.77 2.77 0 0 1 1865.0 571.8 A2.77 2.77 0 0 1 1865.0 577.4 A2.77 2.77 0 0 1 1865.0 582.9 A2.77 2.77 0 0 1 1865.0 588.5 A2.77 2.77 0 0 1 1865.0 594.0 A2.81 2.81 0 0 1 1859.4 594.0 A2.81 2.81 0 0 1 1853.8 594.0 A2.81 2.81 0 0 1 1848.2 594.0 A2.81 2.81 0 0 1 1842.6 594.0 A2.81 2.81 0 0 1 1836.9 594.0 A2.81 2.81 0 0 1 1831.3 594.0 A2.81 2.81 0 0 1 1825.7 594.0 A2.81 2.81 0 0 1 1820.1 594.0 A2.81 2.81 0 0 1 1814.5 594.0 A2.81 2.81 0 0 1 1808.9 594.0 A2.81 2.81 0 0 1 1803.3 594.0 A2.81 2.81 0 0 1 1797.7 594.0 A2.81 2.81 0 0 1 1792.1 594.0 A2.81 2.81 0 0 1 1786.4 594.0 A2.81 2.81 0 0 1 1780.8 594.0 A2.81 2.81 0 0 1 1775.2 594.0 A2.81 2.81 0 0 1 1769.6 594.0 A2.81 2.81 0 0 1 1764.0 594.0 A2.77 2.77 0 0 1 1764.0 588.5 A2.77 2.77 0 0 1 1764.0 582.9 A2.77 2.77 0 0 1 1764.0 577.4 A2.77 2.77 0 0 1 1764.0 571.8 A2.77 2.77 0 0 1 1764.0 566.3 A2.77 2.77 0 0 1 1764.0 560.8 A2.77 2.77 0 0 1 1764.0 555.2 A2.77 2.77 0 0 1 1764.0 549.7 A2.77 2.77 0 0 1 1764.0 544.2 A2.77 2.77 0 0 1 1764.0 538.6 A2.77 2.77 0 0 1 1764.0 533.1 A2.77 2.77 0 0 1 1764.0 527.5 A2.77 2.77 0 0 1 1764.0 522.0 " fill="none" stroke="#ef2020" stroke-width="1"/><rect x="1769" y="527" width="26" height="62" fill="none" stroke="#444" stroke-width="0.8" stroke-dasharray="2 1.2"/><line x1="1776" y1="527" x2="1776" y2="589" stroke="#552020" stroke-width="1.2"/><line x1="1787" y1="527" x2="1787" y2="589" stroke="#552020" stroke-width="1.2"/><line x1="1769" y1="548" x2="1795" y2="548" stroke="#552020" stroke-width="0.8"/><line x1="1769" y1="568" x2="1795" y2="568" stroke="#552020" stroke-width="0.8"/><rect x="1801" y="527" width="26" height="62" fill="none" stroke="#444" stroke-width="0.8" stroke-dasharray="2 1.2"/><line x1="1808" y1="527" x2="1808" y2="589" stroke="#552020" stroke-width="1.2"/><line x1="1819" y1="527" x2="1819" y2="589" stroke="#552020" stroke-width="1.2"/><line x1="1801" y1="548" x2="1827" y2="548" stroke="#552020" stroke-width="0.8"/><line x1="1801" y1="568" x2="1827" y2="568" stroke="#552020" stroke-width="0.8"/><rect x="1833" y="527" width="26" height="62" fill="none" stroke="#444" stroke-width="0.8" stroke-dasharray="2 1.2"/><line x1="1840" y1="527" x2="1840" y2="589" stroke="#552020" stroke-width="1.2"/><line x1="1851" y1="527" x2="1851" y2="589" stroke="#552020" stroke-width="1.2"/><line x1="1833" y1="548" x2="1859" y2="548" stroke="#552020" stroke-width="0.8"/><line x1="1833" y1="568" x2="1859" y2="568" stroke="#552020" stroke-width="0.8"/><text x="1838" y="561" font-size="3.5" fill="#a02020" text-anchor="middle" font-family="Liberation Sans">Merge Chambers</text><line x1="1855" y1="559" x2="1865" y2="559" stroke="#e01010" stroke-width="0.8"/><path d="M927 335 H2073 M927 335 V855 H2073" fill="none" stroke="#000" stroke-width="3"/><rect x="960" y="334" width="3" height="3" fill="#000"/><rect x="997" y="334" width="3" height="3" fill="#000"/><rect x="1034" y="334" width="3" height="3" fill="#000"/><rect x="1071" y="334" width="3" height="3" fill="#000"/><rect x="1108" y="334" width="3" height="3" fill="#000"/><rect x="1145" y="334" width="3" height="3" fill="#000"/><rect x="1182" y="334" width="3" height="3" fill="#000"/><rect x="1219" y="334" width="3" height="3" fill="#000"/><rect x="1256" y="334" width="3" height="3" fill="#000"/><rect x="1293" y="334" width="3" height="3" fill="#000"/><rect x="1330" y="334" width="3" height="3" fill="#000"/><rect x="1367" y="334" width="3" height="3" fill="#000"/><rect x="1404" y="334" width="3" height="3" fill="#000"/><rect x="1441" y="334" width="3" height="3" fill="#000"/><rect x="1478" y="334" width="3" height="3" fill="#000"/><rect x="1515" y="334" width="3" height="3" fill="#000"/><rect x="1552" y="334" width="3" height="3" fill="#000"/><rect x="1589" y="334" width="3" height="3" fill="#000"/><rect x="1626" y="334" width="3" height="3" fill="#000"/><rect x="1663" y="334" width="3" height="3" fill="#000"/><rect x="1700" y="334" width="3" height="3" fill="#000"/><rect x="1737" y="334" width="3" height="3" fill="#000"/><rect x="1774" y="334" width="3" height="3" fill="#000"/><rect x="1811" y="334" width="3" height="3" fill="#000"/><rect x="1848" y="334" width="3" height="3" fill="#000"/><rect x="1885" y="334" width="3" height="3" fill="#000"/><rect x="1922" y="334" width="3" height="3" fill="#000"/><rect x="1959" y="334" width="3" height="3" fill="#000"/><rect x="1996" y="334" width="3" height="3" fill="#000"/><rect x="2033" y="334" width="3" height="3" fill="#000"/><rect x="2070" y="334" width="3" height="3" fill="#000"/><path d="M1133 335 V452 Q1133 465 1148 465 L1230 457 Q1243 455 1243 442 V335" fill="none" stroke="#1a1a1a" stroke-width="3.2" stroke-linejoin="round"/><path d="M1133 335 V452 Q1133 465 1148 465 L1230 457 Q1243 455 1243 442 V335" fill="none" stroke="#fff" stroke-width="1.15" stroke-dasharray="2.4 0.9"/><path d="M1188 335 V461" fill="none" stroke="#1a1a1a" stroke-width="2.2" stroke-linejoin="round"/><path d="M1188 335 V461" fill="none" stroke="#fff" stroke-width="0.79" stroke-dasharray="2.4 0.9"/><path d="M1133 395 H1243" fill="none" stroke="#1a1a1a" stroke-width="2.6" stroke-linejoin="round"/><path d="M1133 395 H1243" fill="none" stroke="#fff" stroke-width="0.94" stroke-dasharray="2.4 0.9"/><rect x="1130.4" y="375" width="5.2" height="16.5" fill="#fff"/><rect x="1130.4" y="398.5" width="5.2" height="16.5" fill="#fff"/><path d="M1133 392.4 H1150 M1133 397.6 H1150" stroke="#111" stroke-width="2.2"/><path d="M1150 392.4 A17 17 0 0 0 1133 375.4 M1150 397.6 A17 17 0 0 1 1133 414.6" fill="none" stroke="#111" stroke-width="0.9"/><circle cx="1132" cy="383" r="4.5" fill="#fff" stroke="#333" stroke-width="0.7"/><text x="1132" y="384.5" font-size="4" fill="#333" text-anchor="middle" font-family="Liberation Sans">201</text><circle cx="1132" cy="406" r="4.5" fill="#fff" stroke="#333" stroke-width="0.7"/><text x="1132" y="407.5" font-size="4" fill="#333" text-anchor="middle" font-family="Liberation Sans">202</text><rect x="1240.4" y="375" width="5.2" height="16.5" fill="#fff"/><rect x="1240.4" y="398.5" width="5.2" height="16.5" fill="#fff"/><path d="M1243 392.4 H1226 M1243 397.6 H1226" stroke="#111" stroke-width="2.2"/><path d="M1226 392.4 A17 17 0 0 1 1243 375.4 M1226 397.6 A17 17 0 0 0 1243 414.6" fill="none" stroke="#111" stroke-width="0.9"/><circle cx="1244" cy="383" r="4.5" fill="#fff" stroke="#333" stroke-width="0.7"/><text x="1244" y="384.5" font-size="4" fill="#333" text-anchor="middle" font-family="Liberation Sans">203</text><circle cx="1244" cy="406" r="4.5" fill="#fff" stroke="#333" stroke-width="0.7"/><text x="1244" y="407.5" font-size="4" fill="#333" text-anchor="middle" font-family="Liberation Sans">204</text><text x="1158" y="363" font-size="7.5" font-weight="700" fill="#111" text-anchor="middle" font-family="Liberation Sans" style="white-space:pre" textLength="42" lengthAdjust="spacingAndGlyphs">MEETING  201</text><line x1="1137.0" y1="365" x2="1179.0" y2="365" stroke="#111" stroke-width="1"/><text x="1215" y="363" font-size="7.5" font-weight="700" fill="#111" text-anchor="middle" font-family="Liberation Sans" style="white-space:pre" textLength="42" lengthAdjust="spacingAndGlyphs">MEETING  203</text><line x1="1194.0" y1="365" x2="1236.0" y2="365" stroke="#111" stroke-width="1"/><text x="1160" y="430" font-size="7.5" font-weight="700" fill="#111" text-anchor="middle" font-family="Liberation Sans" style="white-space:pre" textLength="42" lengthAdjust="spacingAndGlyphs">MEETING  202</text><line x1="1139.0" y1="432" x2="1181.0" y2="432" stroke="#111" stroke-width="1"/><text x="1215" y="430" font-size="7.5" font-weight="700" fill="#111" text-anchor="middle" font-family="Liberation Sans" style="white-space:pre" textLength="42" lengthAdjust="spacingAndGlyphs">MEETING  204</text><line x1="1194.0" y1="432" x2="1236.0" y2="432" stroke="#111" stroke-width="1"/><text x="1024" y="404" font-size="7.5" font-weight="700" fill="#111" text-anchor="middle" font-family="Liberation Sans" style="white-space:pre" textLength="57" lengthAdjust="spacingAndGlyphs">OPEN OFFICE  200</text><line x1="995.5" y1="406" x2="1052.5" y2="406" stroke="#111" stroke-width="1"/><path d="M1297 335 V442 Q1297 455 1312 455 L1408 447 V335" fill="none" stroke="#1a1a1a" stroke-width="3.2" stroke-linejoin="round"/><path d="M1297 335 V442 Q1297 455 1312 455 L1408 447 V335" fill="none" stroke="#fff" stroke-width="1.15" stroke-dasharray="2.4 0.9"/><path d="M1297 395 H1408" fill="none" stroke="#1a1a1a" stroke-width="2.6" stroke-linejoin="round"/><path d="M1297 395 H1408" fill="none" stroke="#fff" stroke-width="0.94" stroke-dasharray="2.4 0.9"/><rect x="1294.4" y="375" width="5.2" height="16.5" fill="#fff"/><rect x="1294.4" y="398.5" width="5.2" height="16.5" fill="#fff"/><path d="M1297 392.4 H1314 M1297 397.6 H1314" stroke="#111" stroke-width="2.2"/><path d="M1314 392.4 A17 17 0 0 0 1297 375.4 M1314 397.6 A17 17 0 0 1 1297 414.6" fill="none" stroke="#111" stroke-width="0.9"/><circle cx="1296" cy="383" r="4.5" fill="#fff" stroke="#333" stroke-width="0.7"/><text x="1296" y="384.5" font-size="4" fill="#333" text-anchor="middle" font-family="Liberation Sans">205</text><circle cx="1296" cy="406" r="4.5" fill="#fff" stroke="#333" stroke-width="0.7"/><text x="1296" y="407.5" font-size="4" fill="#333" text-anchor="middle" font-family="Liberation Sans">206</text><text x="1351" y="366" font-size="7.5" font-weight="700" fill="#111" text-anchor="middle" font-family="Liberation Sans" style="white-space:pre" textLength="38" lengthAdjust="spacingAndGlyphs">OFFICE  205</text><line x1="1332.0" y1="368" x2="1370.0" y2="368" stroke="#111" stroke-width="1"/><text x="1352" y="380" font-size="7" fill="#e01010" text-anchor="middle" font-family="Liberation Sans">204.62 sf</text><text x="1351" y="424" font-size="7.5" font-weight="700" fill="#111" text-anchor="middle" font-family="Liberation Sans" style="white-space:pre" textLength="38" lengthAdjust="spacingAndGlyphs">OFFICE  206</text><line x1="1332.0" y1="426" x2="1370.0" y2="426" stroke="#111" stroke-width="1"/><path d="M1408 447 L1573 436" fill="none" stroke="#1a1a1a" stroke-width="2.6" stroke-linejoin="round"/><path d="M1408 447 L1573 436" fill="none" stroke="#fff" stroke-width="0.94" stroke-dasharray="2.4 0.9"/><path d="M1585 433 L1600 432 V335" fill="none" stroke="#1a1a1a" stroke-width="2.6" stroke-linejoin="round"/><path d="M1585 433 L1600 432 V335" fill="none" stroke="#fff" stroke-width="0.94" stroke-dasharray="2.4 0.9"/><path d="M1575 436 L1575 426 A10 10 0 0 1 1585 436" fill="none" stroke="#1a1a1a" stroke-width="0.9"/><path d="M1414 447 L1414 437 A10 10 0 0 1 1424 447" fill="none" stroke="#1a1a1a" stroke-width="0.9"/><circle cx="1418" cy="446" r="4.5" fill="#fff" stroke="#333" stroke-width="0.7"/><text x="1418" y="447.5" font-size="4" fill="#333" text-anchor="middle" font-family="Liberation Sans">207</text><circle cx="1573" cy="432" r="4.5" fill="#fff" stroke="#333" stroke-width="0.7"/><text x="1573" y="433.5" font-size="4" fill="#333" text-anchor="middle" font-family="Liberation Sans">207</text><path d="M1603 430 V416 M1619 430 H1631" fill="none" stroke="#1a1a1a" stroke-width="2.2" stroke-linejoin="round"/><path d="M1603 430 V416 M1619 430 H1631" fill="none" stroke="#fff" stroke-width="0.79" stroke-dasharray="2.4 0.9"/><path d="M1604 416 A16 15 0 0 1 1619 430" fill="none" stroke="#111" stroke-width="0.9"/><path d="M1631 430 A51.5 31 0 0 1 1734 430" fill="none" stroke="#1a1a1a" stroke-width="2.6" stroke-linejoin="round"/><path d="M1631 430 A51.5 31 0 0 1 1734 430" fill="none" stroke="#fff" stroke-width="0.94" stroke-dasharray="2.4 0.9"/><path d="M1683 335 V398" fill="none" stroke="#1a1a1a" stroke-width="2.6" stroke-linejoin="round"/><path d="M1683 335 V398" fill="none" stroke="#fff" stroke-width="0.94" stroke-dasharray="2.4 0.9"/><path d="M1734 430 H1745 M1762 430 H1765 V335" fill="none" stroke="#1a1a1a" stroke-width="2.6" stroke-linejoin="round"/><path d="M1734 430 H1745 M1762 430 H1765 V335" fill="none" stroke="#fff" stroke-width="0.94" stroke-dasharray="2.4 0.9"/><path d="M1762 416 A16 15 0 0 0 1746 430" fill="none" stroke="#111" stroke-width="0.9"/><circle cx="1611" cy="432" r="4.5" fill="#fff" stroke="#333" stroke-width="0.7"/><text x="1611" y="433.5" font-size="4" fill="#333" text-anchor="middle" font-family="Liberation Sans">208</text><circle cx="1752" cy="432" r="4.5" fill="#fff" stroke="#333" stroke-width="0.7"/><text x="1752" y="433.5" font-size="4" fill="#333" text-anchor="middle" font-family="Liberation Sans">209</text><rect x="1613" y="352" width="54" height="28" fill="none" stroke="#222" stroke-width="0.9" stroke-dasharray="2.5 1.5"/><rect x="1697" y="352" width="55" height="28" fill="none" stroke="#222" stroke-width="0.9" stroke-dasharray="2.5 1.5"/><text x="1640" y="389" font-size="7.5" font-weight="700" fill="#111" text-anchor="middle" font-family="Liberation Sans" style="white-space:pre" textLength="42" lengthAdjust="spacingAndGlyphs">MEETING  208</text><line x1="1619.0" y1="391" x2="1661.0" y2="391" stroke="#111" stroke-width="1"/><text x="1724" y="389" font-size="7.5" font-weight="700" fill="#111" text-anchor="middle" font-family="Liberation Sans" style="white-space:pre" textLength="42" lengthAdjust="spacingAndGlyphs">MEETING  209</text><line x1="1703.0" y1="391" x2="1745.0" y2="391" stroke="#111" stroke-width="1"/><text x="1682.5" y="423" font-size="11" font-weight="700" fill="#e01010" text-anchor="middle" font-family="Liberation Serif">Room 001</text><line x1="1693.3" y1="412" x2="1693.3" y2="402" stroke="#e01010" stroke-width="0.9"/><path d="M1693.3 400 L1691.3 405 H1695.3 Z" fill="#e01010"/><path d="M1654.3 431.5 H1709.8 A27.75 13.8 0 0 1 1654.3 431.5 Z" fill="none" stroke="#222" stroke-width="1"/><path d="M1654.3 431.5 H1709.8" stroke="#222" stroke-width="1.8"/><text x="1684" y="474" font-size="7.5" font-weight="700" fill="#111" text-anchor="middle" font-family="Liberation Sans" style="white-space:pre" textLength="52" lengthAdjust="spacingAndGlyphs">RECEPTION  255</text><line x1="1658.0" y1="476" x2="1710.0" y2="476" stroke="#111" stroke-width="1"/><path d="M1778 434 L1847 440 V335" fill="none" stroke="#1a1a1a" stroke-width="2.6" stroke-linejoin="round"/><path d="M1778 434 L1847 440 V335" fill="none" stroke="#fff" stroke-width="0.94" stroke-dasharray="2.4 0.9"/><rect x="1791" y="351" width="29" height="67" fill="none" stroke="#222" stroke-width="0.9" stroke-dasharray="2.5 1.5"/><text x="1805" y="385" font-size="7.5" font-weight="700" fill="#111" text-anchor="middle" font-family="Liberation Sans" style="white-space:pre" textLength="40" lengthAdjust="spacingAndGlyphs">MEETING  210</text><line x1="1785.0" y1="387" x2="1825.0" y2="387" stroke="#111" stroke-width="1"/><circle cx="1782" cy="436" r="4.5" fill="#fff" stroke="#333" stroke-width="0.7"/><text x="1782" y="437.5" font-size="4" fill="#333" text-anchor="middle" font-family="Liberation Sans">210</text><path d="M1860 441 L1956 447 V335" fill="none" stroke="#1a1a1a" stroke-width="2.6" stroke-linejoin="round"/><path d="M1860 441 L1956 447 V335" fill="none" stroke="#fff" stroke-width="0.94" stroke-dasharray="2.4 0.9"/><rect x="1868" y="365" width="68" height="40" fill="none" stroke="#222" stroke-width="0.9" stroke-dasharray="2.5 1.5"/><text x="1901" y="387" font-size="7.5" font-weight="700" fill="#111" text-anchor="middle" font-family="Liberation Sans" style="white-space:pre" textLength="53" lengthAdjust="spacingAndGlyphs">CONFERENCE  211</text><line x1="1874.5" y1="389" x2="1927.5" y2="389" stroke="#111" stroke-width="1"/><circle cx="1860" cy="440" r="4.5" fill="#fff" stroke="#333" stroke-width="0.7"/><text x="1860" y="441.5" font-size="4" fill="#333" text-anchor="middle" font-family="Liberation Sans">211</text><path d="M1956 447 L2053 455 Q2066 455 2066 442 V335" fill="none" stroke="#1a1a1a" stroke-width="3.2" stroke-linejoin="round"/><path d="M1956 447 L2053 455 Q2066 455 2066 442 V335" fill="none" stroke="#fff" stroke-width="1.15" stroke-dasharray="2.4 0.9"/><path d="M1956 395 H2066" fill="none" stroke="#1a1a1a" stroke-width="2.6" stroke-linejoin="round"/><path d="M1956 395 H2066" fill="none" stroke="#fff" stroke-width="0.94" stroke-dasharray="2.4 0.9"/><rect x="2063.4" y="375" width="5.2" height="16.5" fill="#fff"/><rect x="2063.4" y="398.5" width="5.2" height="16.5" fill="#fff"/><path d="M2066 392.4 H2049 M2066 397.6 H2049" stroke="#111" stroke-width="2.2"/><path d="M2049 392.4 A17 17 0 0 1 2066 375.4 M2049 397.6 A17 17 0 0 0 2066 414.6" fill="none" stroke="#111" stroke-width="0.9"/><circle cx="2067" cy="383" r="4.5" fill="#fff" stroke="#333" stroke-width="0.7"/><text x="2067" y="384.5" font-size="4" fill="#333" text-anchor="middle" font-family="Liberation Sans">212</text><circle cx="2067" cy="406" r="4.5" fill="#fff" stroke="#333" stroke-width="0.7"/><text x="2067" y="407.5" font-size="4" fill="#333" text-anchor="middle" font-family="Liberation Sans">213</text><text x="2011" y="356" font-size="7" fill="#e01010" text-anchor="middle" font-family="Liberation Sans">204.51 sf</text><text x="2005" y="368" font-size="7.5" font-weight="700" fill="#111" text-anchor="middle" font-family="Liberation Sans" style="white-space:pre" textLength="38" lengthAdjust="spacingAndGlyphs">OFFICE  212</text><line x1="1986.0" y1="370" x2="2024.0" y2="370" stroke="#111" stroke-width="1"/><text x="2005" y="426" font-size="7.5" font-weight="700" fill="#111" text-anchor="middle" font-family="Liberation Sans" style="white-space:pre" textLength="38" lengthAdjust="spacingAndGlyphs">OFFICE  213</text><line x1="1986.0" y1="428" x2="2024.0" y2="428" stroke="#111" stroke-width="1"/><circle cx="1962" cy="447" r="4.5" fill="#fff" stroke="#333" stroke-width="0.7"/><text x="1962" y="448.5" font-size="4" fill="#333" text-anchor="middle" font-family="Liberation Sans">213</text><path d="M1030 477 L1133 466" stroke="#111" stroke-width="1"/><path d="M1243 456 L1297 451" stroke="#111" stroke-width="0.9" stroke-dasharray="2 1.5"/><path d="M1030 714 L1132 724" stroke="#111" stroke-width="1"/><path d="M927 540 H1030" fill="none" stroke="#1a1a1a" stroke-width="2.4" stroke-linejoin="round"/><path d="M927 540 H1030" fill="none" stroke="#fff" stroke-width="0.86" stroke-dasharray="2.4 0.9"/><path d="M927 650 H1030" fill="none" stroke="#1a1a1a" stroke-width="2.4" stroke-linejoin="round"/><path d="M927 650 H1030" fill="none" stroke="#fff" stroke-width="0.86" stroke-dasharray="2.4 0.9"/><path d="M1030 490 V702" fill="none" stroke="#1a1a1a" stroke-width="2.6" stroke-linejoin="round"/><path d="M1030 490 V702" fill="none" stroke="#fff" stroke-width="0.94" stroke-dasharray="2.4 0.9"/><rect x="957" y="554" width="42" height="82" fill="none" stroke="#222" stroke-width="1"/><rect x="1027.4" y="520" width="5.2" height="16.5" fill="#d9c9e0"/><rect x="1027.4" y="543.5" width="5.2" height="16.5" fill="#d9c9e0"/><path d="M1030 537.4 H1013 M1030 542.6 H1013" stroke="#111" stroke-width="2.2"/><path d="M1013 537.4 A17 17 0 0 1 1030 520.4 M1013 542.6 A17 17 0 0 0 1030 559.6" fill="none" stroke="#111" stroke-width="0.9"/><circle cx="1031" cy="528" r="4.5" fill="#fff" stroke="#333" stroke-width="0.7"/><text x="1031" y="529.5" font-size="4" fill="#333" text-anchor="middle" font-family="Liberation Sans">247</text><circle cx="1031" cy="551" r="4.5" fill="#fff" stroke="#333" stroke-width="0.7"/><text x="1031" y="552.5" font-size="4" fill="#333" text-anchor="middle" font-family="Liberation Sans">246</text><rect x="1027.4" y="630" width="5.2" height="16.5" fill="#d9c9e0"/><rect x="1027.4" y="653.5" width="5.2" height="16.5" fill="#d9c9e0"/><path d="M1030 647.4 H1013 M1030 652.6 H1013" stroke="#111" stroke-width="2.2"/><path d="M1013 647.4 A17 17 0 0 1 1030 630.4 M1013 652.6 A17 17 0 0 0 1030 669.6" fill="none" stroke="#111" stroke-width="0.9"/><circle cx="1031" cy="638" r="4.5" fill="#fff" stroke="#333" stroke-width="0.7"/><text x="1031" y="639.5" font-size="4" fill="#333" text-anchor="middle" font-family="Liberation Sans">246</text><circle cx="1031" cy="661" r="4.5" fill="#fff" stroke="#333" stroke-width="0.7"/><text x="1031" y="662.5" font-size="4" fill="#333" text-anchor="middle" font-family="Liberation Sans">245</text><text x="978" y="513" font-size="7.5" font-weight="700" fill="#111" text-anchor="middle" font-family="Liberation Sans" style="white-space:pre" textLength="42" lengthAdjust="spacingAndGlyphs">MEETING  247</text><line x1="957.0" y1="515" x2="999.0" y2="515" stroke="#111" stroke-width="1"/><text x="981" y="600" font-size="7.5" font-weight="700" fill="#111" text-anchor="middle" font-family="Liberation Sans" style="white-space:pre" textLength="58" lengthAdjust="spacingAndGlyphs">CONFERENCE  246</text><line x1="952.0" y1="602" x2="1010.0" y2="602" stroke="#111" stroke-width="1"/><text x="981" y="684" font-size="7.5" font-weight="700" fill="#111" text-anchor="middle" font-family="Liberation Sans" style="white-space:pre" textLength="42" lengthAdjust="spacingAndGlyphs">MEETING  245</text><line x1="960.0" y1="686" x2="1002.0" y2="686" stroke="#111" stroke-width="1"/><path d="M1362 522 H1420 Q1428 522 1428 530 V660 Q1428 668 1420 668 H1362 Q1354 668 1354 660 V530 Q1354 522 1362 522 Z" fill="none" stroke="#1a1a1a" stroke-width="2.6" stroke-linejoin="round"/><path d="M1362 522 H1420 Q1428 522 1428 530 V660 Q1428 668 1420 668 H1362 Q1354 668 1354 660 V530 Q1354 522 1362 522 Z" fill="none" stroke="#fff" stroke-width="0.94" stroke-dasharray="2.4 0.9"/><path d="M1354 596 H1428" fill="none" stroke="#1a1a1a" stroke-width="2.4" stroke-linejoin="round"/><path d="M1354 596 H1428" fill="none" stroke="#fff" stroke-width="0.86" stroke-dasharray="2.4 0.9"/><rect x="1351.4" y="576" width="5.2" height="16.5" fill="#b4c6dc"/><rect x="1351.4" y="599.5" width="5.2" height="16.5" fill="#b4c6dc"/><path d="M1354 593.4 H1371 M1354 598.6 H1371" stroke="#111" stroke-width="2.2"/><path d="M1371 593.4 A17 17 0 0 0 1354 576.4 M1371 598.6 A17 17 0 0 1 1354 615.6" fill="none" stroke="#111" stroke-width="0.9"/><circle cx="1353" cy="584" r="4.5" fill="#fff" stroke="#333" stroke-width="0.7"/><text x="1353" y="585.5" font-size="4" fill="#333" text-anchor="middle" font-family="Liberation Sans">249</text><circle cx="1353" cy="607" r="4.5" fill="#fff" stroke="#333" stroke-width="0.7"/><text x="1353" y="608.5" font-size="4" fill="#333" text-anchor="middle" font-family="Liberation Sans">250</text><text x="1403" y="559" font-size="7.5" font-weight="700" fill="#111" text-anchor="middle" font-family="Liberation Sans" style="white-space:pre" textLength="38" lengthAdjust="spacingAndGlyphs">OFFICE  249</text><line x1="1384.0" y1="561" x2="1422.0" y2="561" stroke="#111" stroke-width="1"/><text x="1402" y="633" font-size="7.5" font-weight="700" fill="#111" text-anchor="middle" font-family="Liberation Sans" style="white-space:pre" textLength="33" lengthAdjust="spacingAndGlyphs">COPY  250</text><line x1="1385.5" y1="635" x2="1418.5" y2="635" stroke="#111" stroke-width="1"/><text x="1222" y="601" font-size="7.5" font-weight="700" fill="#111" text-anchor="middle" font-family="Liberation Sans" style="white-space:pre" textLength="57" lengthAdjust="spacingAndGlyphs">OPEN OFFICE  248</text><line x1="1193.5" y1="603" x2="1250.5" y2="603" stroke="#111" stroke-width="1"/><text x="1307" y="601" font-size="10" font-weight="700" fill="#e01010" text-anchor="middle" font-family="Liberation Sans">160.89 sq m</text><path d="M1462 506 V496 Q1462 488 1454 488 H1438 Q1428 488 1428 498 V695 Q1428 705 1438 705 H1454 Q1462 705 1462 697 V684" fill="none" stroke="#1a1a1a" stroke-width="2.4" stroke-linejoin="round"/><path d="M1462 506 V496 Q1462 488 1454 488 H1438 Q1428 488 1428 498 V695 Q1428 705 1438 705 H1454 Q1462 705 1462 697 V684" fill="none" stroke="#fff" stroke-width="0.86" stroke-dasharray="2.4 0.9"/><path d="M1513 506 V498 Q1513 491 1520 491 L1638 503 Q1651 505 1651 518 V673 Q1651 686 1638 687 L1520 698 Q1513 698 1513 692 V684" fill="none" stroke="#1a1a1a" stroke-width="2.4" stroke-linejoin="round"/><path d="M1513 506 V498 Q1513 491 1520 491 L1638 503 Q1651 505 1651 518 V673 Q1651 686 1638 687 L1520 698 Q1513 698 1513 692 V684" fill="none" stroke="#fff" stroke-width="0.86" stroke-dasharray="2.4 0.9"/><path d="M1441 506 H1652 M1441 506 V684 H1580 M1607 684 H1652" fill="none" stroke="#1a1a1a" stroke-width="2.4" stroke-linejoin="round"/><path d="M1441 506 H1652 M1441 506 V684 H1580 M1607 684 H1652" fill="none" stroke="#fff" stroke-width="0.86" stroke-dasharray="2.4 0.9"/><path d="M1486 506 V684" fill="none" stroke="#1a1a1a" stroke-width="3.4" stroke-linejoin="round"/><path d="M1486 506 V684" fill="none" stroke="#fff" stroke-width="1.22" stroke-dasharray="2.4 0.9"/><path d="M1441 611 H1607" fill="none" stroke="#1a1a1a" stroke-width="2.4" stroke-linejoin="round"/><path d="M1441 611 H1607" fill="none" stroke="#fff" stroke-width="0.86" stroke-dasharray="2.4 0.9"/><path d="M1547 506 V563 H1486" fill="none" stroke="#1a1a1a" stroke-width="2.2" stroke-linejoin="round"/><path d="M1547 506 V563 H1486" fill="none" stroke="#fff" stroke-width="0.79" stroke-dasharray="2.4 0.9"/><path d="M1581 506 V611 M1604 506 V684" fill="none" stroke="#1a1a1a" stroke-width="2.4" stroke-linejoin="round"/><path d="M1581 506 V611 M1604 506 V684" fill="none" stroke="#fff" stroke-width="0.86" stroke-dasharray="2.4 0.9"/><path d="M1583 508 L1602 609 M1602 508 L1583 609" stroke="#333" stroke-width="0.6"/><rect x="1612" y="628" width="33" height="36" fill="none" stroke="#333" stroke-width="0.9"/><path d="M1612 628 L1645 664 M1645 628 L1612 664" stroke="#333" stroke-width="0.6"/><path d="M1605 624 H1651" fill="none" stroke="#1a1a1a" stroke-width="2.2" stroke-linejoin="round"/><path d="M1605 624 H1651" fill="none" stroke="#fff" stroke-width="0.79" stroke-dasharray="2.4 0.9"/><rect x="1491" y="545" width="10" height="16" fill="none" stroke="#333" stroke-width="0.8" stroke-dasharray="1.5 1"/><rect x="1505" y="545" width="10" height="16" fill="none" stroke="#333" stroke-width="0.8" stroke-dasharray="1.5 1"/><rect x="1519" y="545" width="10" height="16" fill="none" stroke="#333" stroke-width="0.8" stroke-dasharray="1.5 1"/><rect x="1533" y="545" width="10" height="16" fill="none" stroke="#333" stroke-width="0.8" stroke-dasharray="1.5 1"/><line x1="1446" y1="553" x2="1462" y2="553" stroke="#222" stroke-width="1.3" stroke-dasharray="2 1"/><line x1="1446" y1="561" x2="1462" y2="561" stroke="#222" stroke-width="1.3" stroke-dasharray="2 1"/><line x1="1446" y1="569" x2="1462" y2="569" stroke="#222" stroke-width="1.3" stroke-dasharray="2 1"/><line x1="1446" y1="577" x2="1462" y2="577" stroke="#222" stroke-width="1.3" stroke-dasharray="2 1"/><line x1="1446" y1="585" x2="1462" y2="585" stroke="#222" stroke-width="1.3" stroke-dasharray="2 1"/><line x1="1446" y1="593" x2="1462" y2="593" stroke="#222" stroke-width="1.3" stroke-dasharray="2 1"/><rect x="1468" y="553" width="15" height="50" fill="none" stroke="#222" stroke-width="1"/><line x1="1468" y1="556" x2="1483" y2="556" stroke="#222" stroke-width="0.7"/><line x1="1468" y1="564" x2="1483" y2="564" stroke="#222" stroke-width="0.7"/><line x1="1468" y1="572" x2="1483" y2="572" stroke="#222" stroke-width="0.7"/><line x1="1468" y1="580" x2="1483" y2="580" stroke="#222" stroke-width="0.7"/><line x1="1468" y1="588" x2="1483" y2="588" stroke="#222" stroke-width="0.7"/><line x1="1468" y1="596" x2="1483" y2="596" stroke="#222" stroke-width="0.7"/><text x="1463" y="535" font-size="7" font-weight="700" fill="#111" text-anchor="middle" font-family="Liberation Sans" style="white-space:pre" textLength="34" lengthAdjust="spacingAndGlyphs">STAIR  251</text><line x1="1446.0" y1="537" x2="1480.0" y2="537" stroke="#111" stroke-width="1"/><text x="1518" y="535" font-size="7" font-weight="700" fill="#111" text-anchor="middle" font-family="Liberation Sans" style="white-space:pre" textLength="50" lengthAdjust="spacingAndGlyphs">ELECTRICAL  253</text><line x1="1493.0" y1="537" x2="1543.0" y2="537" stroke="#111" stroke-width="1"/><text x="1526" y="578" font-size="7" font-weight="700" fill="#111" text-anchor="middle" font-family="Liberation Sans" style="white-space:pre" textLength="46" lengthAdjust="spacingAndGlyphs">STORAGE  253A</text><line x1="1503.0" y1="580" x2="1549.0" y2="580" stroke="#111" stroke-width="1"/><text x="1523" y="600" font-size="7" font-weight="700" fill="#111" text-anchor="middle" font-family="Liberation Sans" style="white-space:pre" textLength="46" lengthAdjust="spacingAndGlyphs">STORAGE  254A</text><line x1="1500.0" y1="602" x2="1546.0" y2="602" stroke="#111" stroke-width="1"/><text x="1537" y="660" font-size="7" font-weight="700" fill="#111" text-anchor="middle" font-family="Liberation Sans" style="white-space:pre" textLength="56" lengthAdjust="spacingAndGlyphs">WOMEN'S RR  254</text><line x1="1509.0" y1="662" x2="1565.0" y2="662" stroke="#111" stroke-width="1"/><text x="1467" y="656" font-size="7" font-weight="700" fill="#111" text-anchor="middle" font-family="Liberation Sans" transform="rotate(-90 1467 656)" textLength="50" lengthAdjust="spacingAndGlyphs">MOTHER'S RM.  252</text><circle cx="1475" cy="507" r="4.5" fill="#fff" stroke="#333" stroke-width="0.7"/><text x="1475" y="508.5" font-size="4" fill="#333" text-anchor="middle" font-family="Liberation Sans">251</text><circle cx="1497" cy="507" r="4.5" fill="#fff" stroke="#333" stroke-width="0.7"/><text x="1497" y="508.5" font-size="4" fill="#333" text-anchor="middle" font-family="Liberation Sans">253</text><circle cx="1548" cy="517" r="4.5" fill="#fff" stroke="#333" stroke-width="0.7"/><text x="1548" y="518.5" font-size="4" fill="#333" text-anchor="middle" font-family="Liberation Sans">253A</text><circle cx="1475" cy="684" r="4.5" fill="#fff" stroke="#333" stroke-width="0.7"/><text x="1475" y="685.5" font-size="4" fill="#333" text-anchor="middle" font-family="Liberation Sans">252</text><circle cx="1497" cy="684" r="4.5" fill="#fff" stroke="#333" stroke-width="0.7"/><text x="1497" y="685.5" font-size="4" fill="#333" text-anchor="middle" font-family="Liberation Sans">254</text><circle cx="1498" cy="648" r="4.5" fill="#fff" stroke="#333" stroke-width="0.7"/><text x="1498" y="649.5" font-size="4" fill="#333" text-anchor="middle" font-family="Liberation Sans">254B</text><circle cx="1561" cy="656" r="4.5" fill="#fff" stroke="#333" stroke-width="0.7"/><text x="1561" y="657.5" font-size="4" fill="#333" text-anchor="middle" font-family="Liberation Sans">254A</text><circle cx="1532" cy="620" r="3" fill="none" stroke="#222" stroke-width="1.3"/><circle cx="1549" cy="620" r="3" fill="none" stroke="#222" stroke-width="1.3"/><circle cx="1566" cy="620" r="3" fill="none" stroke="#222" stroke-width="1.3"/><circle cx="1597" cy="620" r="3" fill="none" stroke="#222" stroke-width="1.3"/><rect x="1530" y="672" width="8" height="6" fill="none" stroke="#222" stroke-width="1.2"/><rect x="1555" y="672" width="8" height="6" fill="none" stroke="#222" stroke-width="1.2"/><path d="M1522 684 V670 H1576 V684" fill="none" stroke="#1a1a1a" stroke-width="2" stroke-linejoin="round"/><path d="M1522 684 V670 H1576 V684" fill="none" stroke="#fff" stroke-width="0.72" stroke-dasharray="2.4 0.9"/><line x1="1523" y1="602" x2="1509" y2="632" stroke="#222" stroke-width="0.8"/><path d="M1603 684 L1625 687 Q1640 700 1637 699" fill="none" stroke="#222" stroke-width="0.8"/><path d="M1620 690 L1637 700" stroke="#222" stroke-width="0.8"/><circle cx="1637" cy="710" r="11" fill="#fff" stroke="#222" stroke-width="1"/><line x1="1627" y1="710" x2="1647" y2="710" stroke="#222" stroke-width="0.7"/><text x="1637" y="708" font-size="5" fill="#333" text-anchor="middle" font-family="Liberation Sans">1</text><text x="1637" y="717" font-size="5" fill="#333" text-anchor="middle" font-family="Liberation Sans">A6.02</text><path d="M1462 488 L1515 491" stroke="#111" stroke-width="0.8" stroke-dasharray="2 1.5"/><path d="M1462 705 L1515 699" stroke="#111" stroke-width="0.8" stroke-dasharray="2 1.5"/><path d="M1440 713 L1640 697" stroke="#111" stroke-width="0.8" stroke-dasharray="4 2"/><path d="M1853 506 V497 Q1853 490 1846 490 L1726 503 Q1713 505 1713 518 V673 Q1713 686 1726 687 L1846 698 Q1853 698 1853 692 V684" fill="none" stroke="#1a1a1a" stroke-width="2.4" stroke-linejoin="round"/><path d="M1853 506 V497 Q1853 490 1846 490 L1726 503 Q1713 505 1713 518 V673 Q1713 686 1726 687 L1846 698 Q1853 698 1853 692 V684" fill="none" stroke="#fff" stroke-width="0.86" stroke-dasharray="2.4 0.9"/><path d="M1716 506 H1922 V684 H1716 Z" fill="none" stroke="#1a1a1a" stroke-width="2.4" stroke-linejoin="round"/><path d="M1716 506 H1922 V684 H1716 Z" fill="none" stroke="#fff" stroke-width="0.86" stroke-dasharray="2.4 0.9"/><path d="M1757 506 V684" fill="none" stroke="#1a1a1a" stroke-width="3" stroke-linejoin="round"/><path d="M1757 506 V684" fill="none" stroke="#fff" stroke-width="1.08" stroke-dasharray="2.4 0.9"/><path d="M1716 574 H1757 M1716 624 H1757" fill="none" stroke="#1a1a1a" stroke-width="2.2" stroke-linejoin="round"/><path d="M1716 574 H1757 M1716 624 H1757" fill="none" stroke="#fff" stroke-width="0.79" stroke-dasharray="2.4 0.9"/><rect x="1719" y="575" width="34" height="46" fill="none" stroke="#333" stroke-width="0.9"/><path d="M1719 575 L1753 621 M1753 575 L1719 621" stroke="#333" stroke-width="0.6"/><rect x="1720" y="641" width="27" height="23" fill="none" stroke="#333" stroke-width="0.9"/><path d="M1720 664 L1747 641" stroke="#333" stroke-width="0.6"/><path d="M1757 611 H1877" fill="none" stroke="#1a1a1a" stroke-width="2.4" stroke-linejoin="round"/><path d="M1757 611 H1877" fill="none" stroke="#fff" stroke-width="0.86" stroke-dasharray="2.4 0.9"/><path d="M1877 506 V684" fill="none" stroke="#1a1a1a" stroke-width="3" stroke-linejoin="round"/><path d="M1877 506 V684" fill="none" stroke="#fff" stroke-width="1.08" stroke-dasharray="2.4 0.9"/><path d="M1877 578 H1922" fill="none" stroke="#1a1a1a" stroke-width="2.4" stroke-linejoin="round"/><path d="M1877 578 H1922" fill="none" stroke="#fff" stroke-width="0.86" stroke-dasharray="2.4 0.9"/><line x1="1882" y1="588" x2="1898" y2="588" stroke="#222" stroke-width="1.3" stroke-dasharray="2 1"/><line x1="1882" y1="596" x2="1898" y2="596" stroke="#222" stroke-width="1.3" stroke-dasharray="2 1"/><line x1="1882" y1="604" x2="1898" y2="604" stroke="#222" stroke-width="1.3" stroke-dasharray="2 1"/><line x1="1882" y1="612" x2="1898" y2="612" stroke="#222" stroke-width="1.3" stroke-dasharray="2 1"/><line x1="1882" y1="620" x2="1898" y2="620" stroke="#222" stroke-width="1.3" stroke-dasharray="2 1"/><line x1="1882" y1="628" x2="1898" y2="628" stroke="#222" stroke-width="1.3" stroke-dasharray="2 1"/><rect x="1904" y="612" width="15" height="46" fill="none" stroke="#222" stroke-width="1"/><line x1="1904" y1="615" x2="1919" y2="615" stroke="#222" stroke-width="0.7"/><line x1="1904" y1="623" x2="1919" y2="623" stroke="#222" stroke-width="0.7"/><line x1="1904" y1="631" x2="1919" y2="631" stroke="#222" stroke-width="0.7"/><line x1="1904" y1="639" x2="1919" y2="639" stroke="#222" stroke-width="0.7"/><line x1="1904" y1="647" x2="1919" y2="647" stroke="#222" stroke-width="0.7"/><line x1="1904" y1="655" x2="1919" y2="655" stroke="#222" stroke-width="0.7"/><text x="1817" y="515" font-size="7" font-weight="700" fill="#111" text-anchor="middle" font-family="Liberation Sans" style="white-space:pre" textLength="38" lengthAdjust="spacingAndGlyphs">SERVER  257</text><line x1="1798.0" y1="517" x2="1836.0" y2="517" stroke="#111" stroke-width="1"/><text x="1841" y="604" font-size="7" font-weight="700" fill="#111" text-anchor="middle" font-family="Liberation Sans" style="white-space:pre" textLength="46" lengthAdjust="spacingAndGlyphs">STORAGE  258A</text><line x1="1818.0" y1="606" x2="1864.0" y2="606" stroke="#111" stroke-width="1"/><text x="1811" y="661" font-size="7" font-weight="700" fill="#111" text-anchor="middle" font-family="Liberation Sans" style="white-space:pre" textLength="46" lengthAdjust="spacingAndGlyphs">MEN'S RR  258</text><line x1="1788.0" y1="663" x2="1834.0" y2="663" stroke="#111" stroke-width="1"/><text x="1899" y="661" font-size="7" font-weight="700" fill="#111" text-anchor="middle" font-family="Liberation Sans" style="white-space:pre" textLength="34" lengthAdjust="spacingAndGlyphs">STAIR  259</text><line x1="1882.0" y1="663" x2="1916.0" y2="663" stroke="#111" stroke-width="1"/><text x="1903" y="542" font-size="7" font-weight="700" fill="#111" text-anchor="middle" font-family="Liberation Sans" transform="rotate(-90 1903 542)" textLength="44" lengthAdjust="spacingAndGlyphs">STORAGE  260</text><circle cx="1865" cy="507" r="4.5" fill="#fff" stroke="#333" stroke-width="0.7"/><text x="1865" y="508.5" font-size="4" fill="#333" text-anchor="middle" font-family="Liberation Sans">257</text><circle cx="1888" cy="507" r="4.5" fill="#fff" stroke="#333" stroke-width="0.7"/><text x="1888" y="508.5" font-size="4" fill="#333" text-anchor="middle" font-family="Liberation Sans">260</text><circle cx="1865" cy="684" r="4.5" fill="#fff" stroke="#333" stroke-width="0.7"/><text x="1865" y="685.5" font-size="4" fill="#333" text-anchor="middle" font-family="Liberation Sans">258</text><circle cx="1888" cy="684" r="4.5" fill="#fff" stroke="#333" stroke-width="0.7"/><text x="1888" y="685.5" font-size="4" fill="#333" text-anchor="middle" font-family="Liberation Sans">259</text><circle cx="1865" cy="649" r="4.5" fill="#fff" stroke="#333" stroke-width="0.7"/><text x="1865" y="650.5" font-size="4" fill="#333" text-anchor="middle" font-family="Liberation Sans">258A</text><circle cx="1782" cy="657" r="4.5" fill="#fff" stroke="#333" stroke-width="0.7"/><text x="1782" y="658.5" font-size="4" fill="#333" text-anchor="middle" font-family="Liberation Sans">258B</text><path d="M1786 684 V670 H1840 V684" fill="none" stroke="#1a1a1a" stroke-width="2" stroke-linejoin="round"/><path d="M1786 684 V670 H1840 V684" fill="none" stroke="#fff" stroke-width="0.72" stroke-dasharray="2.4 0.9"/><rect x="1796" y="672" width="8" height="6" fill="none" stroke="#222" stroke-width="1.2"/><rect x="1820" y="672" width="8" height="6" fill="none" stroke="#222" stroke-width="1.2"/><circle cx="1767" cy="620" r="3" fill="none" stroke="#222" stroke-width="1.3"/><circle cx="1797" cy="620" r="3" fill="none" stroke="#222" stroke-width="1.3"/><line x1="1841" y1="600" x2="1857" y2="629" stroke="#222" stroke-width="0.8"/><path d="M1902 506 V497 Q1902 488 1912 488 H1926 Q1937 488 1937 499 V686 Q1937 697 1926 697 H1912 Q1902 697 1902 689 V684" fill="none" stroke="#1a1a1a" stroke-width="2.4" stroke-linejoin="round"/><path d="M1902 506 V497 Q1902 488 1912 488 H1926 Q1937 488 1937 499 V686 Q1937 697 1926 697 H1912 Q1902 697 1902 689 V684" fill="none" stroke="#fff" stroke-width="0.86" stroke-dasharray="2.4 0.9"/><path d="M1853 492 L1902 489 M1853 698 L1902 697" stroke="#111" stroke-width="0.8" stroke-dasharray="2 1.5"/><rect x="1937" y="520" width="62" height="149" rx="10" fill="#fff"/><path d="M1947 520 H1989 Q1999 520 1999 530 V659 Q1999 669 1989 669 H1947 Q1937 669 1937 659 V530 Q1937 520 1947 520 Z" fill="none" stroke="#1a1a1a" stroke-width="2.6" stroke-linejoin="round"/><path d="M1947 520 H1989 Q1999 520 1999 530 V659 Q1999 669 1989 669 H1947 Q1937 669 1937 659 V530 Q1937 520 1947 520 Z" fill="none" stroke="#fff" stroke-width="0.94" stroke-dasharray="2.4 0.9"/><path d="M1937 595 H1999" fill="none" stroke="#1a1a1a" stroke-width="2.4" stroke-linejoin="round"/><path d="M1937 595 H1999" fill="none" stroke="#fff" stroke-width="0.86" stroke-dasharray="2.4 0.9"/><rect x="1996.4" y="575" width="5.2" height="16.5" fill="#fff"/><rect x="1996.4" y="598.5" width="5.2" height="16.5" fill="#fff"/><path d="M1999 592.4 H1982 M1999 597.6 H1982" stroke="#111" stroke-width="2.2"/><path d="M1982 592.4 A17 17 0 0 1 1999 575.4 M1982 597.6 A17 17 0 0 0 1999 614.6" fill="none" stroke="#111" stroke-width="0.9"/><circle cx="2000" cy="583" r="4.5" fill="#fff" stroke="#333" stroke-width="0.7"/><text x="2000" y="584.5" font-size="4" fill="#333" text-anchor="middle" font-family="Liberation Sans">261</text><circle cx="2000" cy="606" r="4.5" fill="#fff" stroke="#333" stroke-width="0.7"/><text x="2000" y="607.5" font-size="4" fill="#333" text-anchor="middle" font-family="Liberation Sans">262</text><text x="1964" y="558" font-size="7.5" font-weight="700" fill="#111" text-anchor="middle" font-family="Liberation Sans" style="white-space:pre" textLength="38" lengthAdjust="spacingAndGlyphs">OFFICE  261</text><line x1="1945.0" y1="560" x2="1983.0" y2="560" stroke="#111" stroke-width="1"/><text x="1962" y="632" font-size="7.5" font-weight="700" fill="#111" text-anchor="middle" font-family="Liberation Sans" style="white-space:pre" textLength="33" lengthAdjust="spacingAndGlyphs">COPY  262</text><line x1="1945.5" y1="634" x2="1978.5" y2="634" stroke="#111" stroke-width="1"/><path d="M1999 520.5 H2073 M1999 668.5 H2073" fill="none" stroke="#1a1a1a" stroke-width="2.6" stroke-linejoin="round"/><path d="M1999 520.5 H2073 M1999 668.5 H2073" fill="none" stroke="#fff" stroke-width="0.94" stroke-dasharray="2.4 0.9"/><path d="M1937 505 H2073 M1937 685 H2073" stroke="#111" stroke-width="1" stroke-dasharray="2 1.5"/><path d="M1430 505 H1441 M1430 685 H1441" stroke="#111" stroke-width="1"/><text x="1027" y="783" font-size="7.5" font-weight="700" fill="#111" text-anchor="middle" font-family="Liberation Sans" style="white-space:pre" textLength="57" lengthAdjust="spacingAndGlyphs">OPEN OFFICE  244</text><line x1="998.5" y1="785" x2="1055.5" y2="785" stroke="#111" stroke-width="1"/><path d="M1132 855 V736 Q1132 724 1146 724 L1230 729 Q1243 730 1243 742 V855" fill="none" stroke="#1a1a1a" stroke-width="3.2" stroke-linejoin="round"/><path d="M1132 855 V736 Q1132 724 1146 724 L1230 729 Q1243 730 1243 742 V855" fill="none" stroke="#fff" stroke-width="1.15" stroke-dasharray="2.4 0.9"/><path d="M1132 787 H1243" fill="none" stroke="#1a1a1a" stroke-width="2.6" stroke-linejoin="round"/><path d="M1132 787 H1243" fill="none" stroke="#fff" stroke-width="0.94" stroke-dasharray="2.4 0.9"/><rect x="1240.4" y="767" width="5.2" height="16.5" fill="#fff"/><rect x="1240.4" y="790.5" width="5.2" height="16.5" fill="#fff"/><path d="M1243 784.4 H1226 M1243 789.6 H1226" stroke="#111" stroke-width="2.2"/><path d="M1226 784.4 A17 17 0 0 1 1243 767.4 M1226 789.6 A17 17 0 0 0 1243 806.6" fill="none" stroke="#111" stroke-width="0.9"/><circle cx="1244" cy="775" r="4.5" fill="#fff" stroke="#333" stroke-width="0.7"/><text x="1244" y="776.5" font-size="4" fill="#333" text-anchor="middle" font-family="Liberation Sans">242</text><circle cx="1244" cy="798" r="4.5" fill="#fff" stroke="#333" stroke-width="0.7"/><text x="1244" y="799.5" font-size="4" fill="#333" text-anchor="middle" font-family="Liberation Sans">243</text><text x="1185" y="759" font-size="7.5" font-weight="700" fill="#111" text-anchor="middle" font-family="Liberation Sans" style="white-space:pre" textLength="38" lengthAdjust="spacingAndGlyphs">OFFICE  242</text><line x1="1166.0" y1="761" x2="1204.0" y2="761" stroke="#111" stroke-width="1"/><text x="1185" y="822" font-size="7.5" font-weight="700" fill="#111" text-anchor="middle" font-family="Liberation Sans" style="white-space:pre" textLength="38" lengthAdjust="spacingAndGlyphs">OFFICE  243</text><line x1="1166.0" y1="824" x2="1204.0" y2="824" stroke="#111" stroke-width="1"/><path d="M1297 855 V748 Q1297 736 1311 736 L1394 742 Q1408 742 1408 754 V855" fill="none" stroke="#1a1a1a" stroke-width="3.2" stroke-linejoin="round"/><path d="M1297 855 V748 Q1297 736 1311 736 L1394 742 Q1408 742 1408 754 V855" fill="none" stroke="#fff" stroke-width="1.15" stroke-dasharray="2.4 0.9"/><path d="M1352 741.0 V855" fill="none" stroke="#1a1a1a" stroke-width="2.2" stroke-linejoin="round"/><path d="M1352 741.0 V855" fill="none" stroke="#fff" stroke-width="0.79" stroke-dasharray="2.4 0.9"/><path d="M1297 797 H1408" fill="none" stroke="#1a1a1a" stroke-width="2.6" stroke-linejoin="round"/><path d="M1297 797 H1408" fill="none" stroke="#fff" stroke-width="0.94" stroke-dasharray="2.4 0.9"/><rect x="1294.4" y="777" width="5.2" height="16.5" fill="#fff"/><rect x="1294.4" y="800.5" width="5.2" height="16.5" fill="#fff"/><path d="M1297 794.4 H1314 M1297 799.6 H1314" stroke="#111" stroke-width="2.2"/><path d="M1314 794.4 A17 17 0 0 0 1297 777.4 M1314 799.6 A17 17 0 0 1 1297 816.6" fill="none" stroke="#111" stroke-width="0.9"/><circle cx="1296" cy="785" r="4.5" fill="#fff" stroke="#333" stroke-width="0.7"/><text x="1296" y="786.5" font-size="4" fill="#333" text-anchor="middle" font-family="Liberation Sans">240</text><circle cx="1296" cy="808" r="4.5" fill="#fff" stroke="#333" stroke-width="0.7"/><text x="1296" y="809.5" font-size="4" fill="#333" text-anchor="middle" font-family="Liberation Sans">241</text><rect x="1405.4" y="777" width="5.2" height="16.5" fill="#fff"/><rect x="1405.4" y="800.5" width="5.2" height="16.5" fill="#fff"/><path d="M1408 794.4 H1391 M1408 799.6 H1391" stroke="#111" stroke-width="2.2"/><path d="M1391 794.4 A17 17 0 0 1 1408 777.4 M1391 799.6 A17 17 0 0 0 1408 816.6" fill="none" stroke="#111" stroke-width="0.9"/><circle cx="1409" cy="785" r="4.5" fill="#fff" stroke="#333" stroke-width="0.7"/><text x="1409" y="786.5" font-size="4" fill="#333" text-anchor="middle" font-family="Liberation Sans">238</text><circle cx="1409" cy="808" r="4.5" fill="#fff" stroke="#333" stroke-width="0.7"/><text x="1409" y="809.5" font-size="4" fill="#333" text-anchor="middle" font-family="Liberation Sans">239</text><text x="1323" y="767" font-size="7.5" font-weight="700" fill="#111" text-anchor="middle" font-family="Liberation Sans" style="white-space:pre" textLength="38" lengthAdjust="spacingAndGlyphs">OFFICE  240</text><line x1="1304.0" y1="769" x2="1342.0" y2="769" stroke="#111" stroke-width="1"/><text x="1381" y="768" font-size="7.5" font-weight="700" fill="#111" text-anchor="middle" font-family="Liberation Sans" style="white-space:pre" textLength="38" lengthAdjust="spacingAndGlyphs">OFFICE  238</text><line x1="1362.0" y1="770" x2="1400.0" y2="770" stroke="#111" stroke-width="1"/><text x="1323" y="828" font-size="7.5" font-weight="700" fill="#111" text-anchor="middle" font-family="Liberation Sans" style="white-space:pre" textLength="38" lengthAdjust="spacingAndGlyphs">OFFICE  241</text><line x1="1304.0" y1="830" x2="1342.0" y2="830" stroke="#111" stroke-width="1"/><text x="1379" y="828" font-size="7.5" font-weight="700" fill="#111" text-anchor="middle" font-family="Liberation Sans" style="white-space:pre" textLength="38" lengthAdjust="spacingAndGlyphs">OFFICE  239</text><line x1="1360.0" y1="830" x2="1398.0" y2="830" stroke="#111" stroke-width="1"/><path d="M1462 855 V759 Q1462 747 1476 747 L1558 755 Q1572 755 1572 767 V855" fill="none" stroke="#1a1a1a" stroke-width="3.2" stroke-linejoin="round"/><path d="M1462 855 V759 Q1462 747 1476 747 L1558 755 Q1572 755 1572 767 V855" fill="none" stroke="#fff" stroke-width="1.15" stroke-dasharray="2.4 0.9"/><path d="M1517 753.0 V855" fill="none" stroke="#1a1a1a" stroke-width="2.2" stroke-linejoin="round"/><path d="M1517 753.0 V855" fill="none" stroke="#fff" stroke-width="0.79" stroke-dasharray="2.4 0.9"/><path d="M1462 797 H1572" fill="none" stroke="#1a1a1a" stroke-width="2.6" stroke-linejoin="round"/><path d="M1462 797 H1572" fill="none" stroke="#fff" stroke-width="0.94" stroke-dasharray="2.4 0.9"/><rect x="1459.4" y="777" width="5.2" height="16.5" fill="#fff"/><rect x="1459.4" y="800.5" width="5.2" height="16.5" fill="#fff"/><path d="M1462 794.4 H1479 M1462 799.6 H1479" stroke="#111" stroke-width="2.2"/><path d="M1479 794.4 A17 17 0 0 0 1462 777.4 M1479 799.6 A17 17 0 0 1 1462 816.6" fill="none" stroke="#111" stroke-width="0.9"/><circle cx="1461" cy="785" r="4.5" fill="#fff" stroke="#333" stroke-width="0.7"/><text x="1461" y="786.5" font-size="4" fill="#333" text-anchor="middle" font-family="Liberation Sans">236</text><circle cx="1461" cy="808" r="4.5" fill="#fff" stroke="#333" stroke-width="0.7"/><text x="1461" y="809.5" font-size="4" fill="#333" text-anchor="middle" font-family="Liberation Sans">237</text><rect x="1569.4" y="777" width="5.2" height="16.5" fill="#fff"/><rect x="1569.4" y="800.5" width="5.2" height="16.5" fill="#fff"/><path d="M1572 794.4 H1555 M1572 799.6 H1555" stroke="#111" stroke-width="2.2"/><path d="M1555 794.4 A17 17 0 0 1 1572 777.4 M1555 799.6 A17 17 0 0 0 1572 816.6" fill="none" stroke="#111" stroke-width="0.9"/><circle cx="1573" cy="785" r="4.5" fill="#fff" stroke="#333" stroke-width="0.7"/><text x="1573" y="786.5" font-size="4" fill="#333" text-anchor="middle" font-family="Liberation Sans">234</text><circle cx="1573" cy="808" r="4.5" fill="#fff" stroke="#333" stroke-width="0.7"/><text x="1573" y="809.5" font-size="4" fill="#333" text-anchor="middle" font-family="Liberation Sans">235</text><text x="1488" y="777" font-size="7.5" font-weight="700" fill="#111" text-anchor="middle" font-family="Liberation Sans" style="white-space:pre" textLength="38" lengthAdjust="spacingAndGlyphs">OFFICE  236</text><line x1="1469.0" y1="779" x2="1507.0" y2="779" stroke="#111" stroke-width="1"/><text x="1543" y="777" font-size="7.5" font-weight="700" fill="#111" text-anchor="middle" font-family="Liberation Sans" style="white-space:pre" textLength="42" lengthAdjust="spacingAndGlyphs">MEETING  234</text><line x1="1522.0" y1="779" x2="1564.0" y2="779" stroke="#111" stroke-width="1"/><text x="1488" y="832" font-size="7.5" font-weight="700" fill="#111" text-anchor="middle" font-family="Liberation Sans" style="white-space:pre" textLength="38" lengthAdjust="spacingAndGlyphs">OFFICE  237</text><line x1="1469.0" y1="834" x2="1507.0" y2="834" stroke="#111" stroke-width="1"/><text x="1543" y="832" font-size="7.5" font-weight="700" fill="#111" text-anchor="middle" font-family="Liberation Sans" style="white-space:pre" textLength="42" lengthAdjust="spacingAndGlyphs">MEETING  235</text><line x1="1522.0" y1="834" x2="1564.0" y2="834" stroke="#111" stroke-width="1"/><path d="M1791 855 V767 Q1791 755 1805 755 L1890 747 Q1904 747 1904 759 V855" fill="none" stroke="#1a1a1a" stroke-width="3.2" stroke-linejoin="round"/><path d="M1791 855 V767 Q1791 755 1805 755 L1890 747 Q1904 747 1904 759 V855" fill="none" stroke="#fff" stroke-width="1.15" stroke-dasharray="2.4 0.9"/><path d="M1847 753.0 V855" fill="none" stroke="#1a1a1a" stroke-width="2.2" stroke-linejoin="round"/><path d="M1847 753.0 V855" fill="none" stroke="#fff" stroke-width="0.79" stroke-dasharray="2.4 0.9"/><path d="M1791 797 H1904" fill="none" stroke="#1a1a1a" stroke-width="2.6" stroke-linejoin="round"/><path d="M1791 797 H1904" fill="none" stroke="#fff" stroke-width="0.94" stroke-dasharray="2.4 0.9"/><rect x="1788.4" y="777" width="5.2" height="16.5" fill="#fff"/><rect x="1788.4" y="800.5" width="5.2" height="16.5" fill="#fff"/><path d="M1791 794.4 H1808 M1791 799.6 H1808" stroke="#111" stroke-width="2.2"/><path d="M1808 794.4 A17 17 0 0 0 1791 777.4 M1808 799.6 A17 17 0 0 1 1791 816.6" fill="none" stroke="#111" stroke-width="0.9"/><circle cx="1790" cy="785" r="4.5" fill="#fff" stroke="#333" stroke-width="0.7"/><text x="1790" y="786.5" font-size="4" fill="#333" text-anchor="middle" font-family="Liberation Sans">231</text><circle cx="1790" cy="808" r="4.5" fill="#fff" stroke="#333" stroke-width="0.7"/><text x="1790" y="809.5" font-size="4" fill="#333" text-anchor="middle" font-family="Liberation Sans">232</text><rect x="1901.4" y="777" width="5.2" height="16.5" fill="#fff"/><rect x="1901.4" y="800.5" width="5.2" height="16.5" fill="#fff"/><path d="M1904 794.4 H1887 M1904 799.6 H1887" stroke="#111" stroke-width="2.2"/><path d="M1887 794.4 A17 17 0 0 1 1904 777.4 M1887 799.6 A17 17 0 0 0 1904 816.6" fill="none" stroke="#111" stroke-width="0.9"/><circle cx="1905" cy="785" r="4.5" fill="#fff" stroke="#333" stroke-width="0.7"/><text x="1905" y="786.5" font-size="4" fill="#333" text-anchor="middle" font-family="Liberation Sans">229</text><circle cx="1905" cy="808" r="4.5" fill="#fff" stroke="#333" stroke-width="0.7"/><text x="1905" y="809.5" font-size="4" fill="#333" text-anchor="middle" font-family="Liberation Sans">230</text><text x="1820" y="777" font-size="7.5" font-weight="700" fill="#111" text-anchor="middle" font-family="Liberation Sans" style="white-space:pre" textLength="42" lengthAdjust="spacingAndGlyphs">MEETING  231</text><line x1="1799.0" y1="779" x2="1841.0" y2="779" stroke="#111" stroke-width="1"/><text x="1877" y="777" font-size="7.5" font-weight="700" fill="#111" text-anchor="middle" font-family="Liberation Sans" style="white-space:pre" textLength="38" lengthAdjust="spacingAndGlyphs">OFFICE  229</text><line x1="1858.0" y1="779" x2="1896.0" y2="779" stroke="#111" stroke-width="1"/><text x="1820" y="826" font-size="7.5" font-weight="700" fill="#111" text-anchor="middle" font-family="Liberation Sans" style="white-space:pre" textLength="42" lengthAdjust="spacingAndGlyphs">MEETING  232</text><line x1="1799.0" y1="828" x2="1841.0" y2="828" stroke="#111" stroke-width="1"/><text x="1880" y="826" font-size="7.5" font-weight="700" fill="#111" text-anchor="middle" font-family="Liberation Sans" style="white-space:pre" textLength="38" lengthAdjust="spacingAndGlyphs">OFFICE  230</text><line x1="1861.0" y1="828" x2="1899.0" y2="828" stroke="#111" stroke-width="1"/><path d="M1956 855 V754 Q1956 742 1970 742 L2053 736 Q2067 736 2067 748 V855" fill="none" stroke="#1a1a1a" stroke-width="3.2" stroke-linejoin="round"/><path d="M1956 855 V754 Q1956 742 1970 742 L2053 736 Q2067 736 2067 748 V855" fill="none" stroke="#fff" stroke-width="1.15" stroke-dasharray="2.4 0.9"/><path d="M2011 741.0 V855" fill="none" stroke="#1a1a1a" stroke-width="2.2" stroke-linejoin="round"/><path d="M2011 741.0 V855" fill="none" stroke="#fff" stroke-width="0.79" stroke-dasharray="2.4 0.9"/><path d="M1956 797 H2067" fill="none" stroke="#1a1a1a" stroke-width="2.6" stroke-linejoin="round"/><path d="M1956 797 H2067" fill="none" stroke="#fff" stroke-width="0.94" stroke-dasharray="2.4 0.9"/><rect x="1953.4" y="777" width="5.2" height="16.5" fill="#fff"/><rect x="1953.4" y="800.5" width="5.2" height="16.5" fill="#fff"/><path d="M1956 794.4 H1973 M1956 799.6 H1973" stroke="#111" stroke-width="2.2"/><path d="M1973 794.4 A17 17 0 0 0 1956 777.4 M1973 799.6 A17 17 0 0 1 1956 816.6" fill="none" stroke="#111" stroke-width="0.9"/><circle cx="1955" cy="785" r="4.5" fill="#fff" stroke="#333" stroke-width="0.7"/><text x="1955" y="786.5" font-size="4" fill="#333" text-anchor="middle" font-family="Liberation Sans">227</text><circle cx="1955" cy="808" r="4.5" fill="#fff" stroke="#333" stroke-width="0.7"/><text x="1955" y="809.5" font-size="4" fill="#333" text-anchor="middle" font-family="Liberation Sans">228</text><rect x="2064.4" y="777" width="5.2" height="16.5" fill="#fff"/><rect x="2064.4" y="800.5" width="5.2" height="16.5" fill="#fff"/><path d="M2067 794.4 H2050 M2067 799.6 H2050" stroke="#111" stroke-width="2.2"/><path d="M2050 794.4 A17 17 0 0 1 2067 777.4 M2050 799.6 A17 17 0 0 0 2067 816.6" fill="none" stroke="#111" stroke-width="0.9"/><circle cx="2068" cy="785" r="4.5" fill="#fff" stroke="#333" stroke-width="0.7"/><text x="2068" y="786.5" font-size="4" fill="#333" text-anchor="middle" font-family="Liberation Sans">225</text><circle cx="2068" cy="808" r="4.5" fill="#fff" stroke="#333" stroke-width="0.7"/><text x="2068" y="809.5" font-size="4" fill="#333" text-anchor="middle" font-family="Liberation Sans">226</text><text x="1984" y="757" font-size="7.5" font-weight="700" fill="#111" text-anchor="middle" font-family="Liberation Sans" style="white-space:pre" textLength="38" lengthAdjust="spacingAndGlyphs">OFFICE  227</text><line x1="1965.0" y1="759" x2="2003.0" y2="759" stroke="#111" stroke-width="1"/><text x="2039" y="757" font-size="7.5" font-weight="700" fill="#111" text-anchor="middle" font-family="Liberation Sans" style="white-space:pre" textLength="38" lengthAdjust="spacingAndGlyphs">OFFICE  225</text><line x1="2020.0" y1="759" x2="2058.0" y2="759" stroke="#111" stroke-width="1"/><text x="1984" y="828" font-size="7.5" font-weight="700" fill="#111" text-anchor="middle" font-family="Liberation Sans" style="white-space:pre" textLength="38" lengthAdjust="spacingAndGlyphs">OFFICE  228</text><line x1="1965.0" y1="830" x2="2003.0" y2="830" stroke="#111" stroke-width="1"/><text x="2036" y="828" font-size="7.5" font-weight="700" fill="#111" text-anchor="middle" font-family="Liberation Sans" style="white-space:pre" textLength="38" lengthAdjust="spacingAndGlyphs">OFFICE  226</text><line x1="2017.0" y1="830" x2="2055.0" y2="830" stroke="#111" stroke-width="1"/><path d="M1243 729 L1297 735 M1408 742 L1462 747 M1572 755 L1600 757 M1765 756 L1791 755 M1904 747 L1956 742 M2067 736 L2073 735" stroke="#111" stroke-width="0.9" stroke-dasharray="2 1.5"/><rect x="1568" y="745" width="229" height="123" rx="5" fill="none" stroke="#333" stroke-width="0.9" stroke-dasharray="4 2.5"/><path d="M1600 756 L1682 763 L1765 756 V780 H1600 Z" fill="none" stroke="#1a1a1a" stroke-width="2" stroke-linejoin="round"/><path d="M1600 756 L1682 763 L1765 756 V780 H1600 Z" fill="none" stroke="#fff" stroke-width="0.72" stroke-dasharray="2.4 0.9"/><rect x="1603" y="770" width="20" height="10" fill="none" stroke="#222" stroke-width="1"/><rect x="1737" y="770" width="20" height="10" fill="none" stroke="#222" stroke-width="1"/><rect x="1628" y="769" width="104" height="10" fill="none" stroke="#222" stroke-width="0.9"/><rect x="1669" y="772" width="15" height="7" fill="none" stroke="#222" stroke-width="0.9"/><rect x="1631" y="789" width="101" height="33" fill="none" stroke="#333" stroke-width="0.8" stroke-dasharray="2 1.5"/><rect x="1631" y="797" width="101" height="16" fill="none" stroke="#222" stroke-width="0.9"/><text x="1679" y="808" font-size="7.5" font-weight="700" fill="#111" text-anchor="middle" font-family="Liberation Sans" style="white-space:pre" textLength="36" lengthAdjust="spacingAndGlyphs">BREAK  233</text><line x1="1661.0" y1="810" x2="1697.0" y2="810" stroke="#111" stroke-width="1"/><rect x="1592" y="835" width="180" height="15" fill="none" stroke="#222" stroke-width="1.6"/><rect x="1592" y="835" width="15" height="15" fill="none" stroke="#222" stroke-width="1.6"/><rect x="1757" y="835" width="15" height="15" fill="none" stroke="#222" stroke-width="1.6"/><path d="M1797 862 L1806 878" stroke="#222" stroke-width="0.8"/><circle cx="1812" cy="888" r="11" fill="#fff" stroke="#222" stroke-width="1"/><line x1="1802" y1="888" x2="1822" y2="888" stroke="#222" stroke-width="0.7"/><text x="1812" y="886" font-size="5" fill="#333" text-anchor="middle" font-family="Liberation Sans">01</text><text x="1812" y="895" font-size="5" fill="#333" text-anchor="middle" font-family="Liberation Sans">A6.01</text><path d="M841 1134.5 H2073 M841 1250.5 H2073" stroke="#333" stroke-width="1.3"/><line x1="1280.5" y1="1134.5" x2="1280.5" y2="1250.5" stroke="#333" stroke-width="1.3"/><line x1="1422.5" y1="1134.5" x2="1422.5" y2="1250.5" stroke="#333" stroke-width="1.3"/><line x1="1564" y1="1134.5" x2="1564" y2="1250.5" stroke="#333" stroke-width="1.3"/><line x1="1705.5" y1="1134.5" x2="1705.5" y2="1250.5" stroke="#333" stroke-width="1.3"/><line x1="1848" y1="1134.5" x2="1848" y2="1250.5" stroke="#333" stroke-width="1.3"/><line x1="1990" y1="1134.5" x2="1990" y2="1250.5" stroke="#333" stroke-width="1.3"/><rect x="848.5" y="1141.5" width="188" height="101" fill="none" stroke="#6b95a3" stroke-width="1.5"/><rect x="852.5" y="1145.5" width="180" height="93" fill="none" stroke="#6b95a3" stroke-width="1"/><text x="942" y="1183" font-size="22" font-weight="700" fill="#3d6e80" text-anchor="middle" font-family="Liberation Sans" textLength="141" lengthAdjust="spacing">BRIGHTER</text><text x="942" y="1205" font-size="22" font-weight="700" fill="#3d6e80" text-anchor="middle" font-family="Liberation Sans" textLength="141" lengthAdjust="spacing">GRAPHICS</text><text x="942" y="1219" font-size="4.5" font-weight="700" fill="#5a8898" text-anchor="middle" font-family="Liberation Sans" textLength="113" lengthAdjust="spacing">DIGITISING CONSTRUCTION SINCE 2003</text><path d="M1046 1166 H1091 V1211 H1046 Z M1053 1173 V1204 H1084 V1173 Z" fill="#1a84d8" fill-rule="evenodd"/><rect x="1061" y="1180" width="15" height="15" fill="#1a84d8"/><rect x="1053" y="1166" width="5" height="7" fill="#fff"/><text x="1102" y="1203" font-size="40" font-weight="700" fill="#1a84d8" font-family="Liberation Sans" textLength="163" lengthAdjust="spacingAndGlyphs">BLUEBEAM</text><text x="1102" y="1219" font-size="12" font-weight="700" fill="#111" font-family="Liberation Sans" textLength="88" lengthAdjust="spacingAndGlyphs">Platinum Partner</text><text x="1293" y="1149" font-size="11.5" font-weight="700" fill="#111" font-family="Liberation Sans">Capture Engineers</text><text x="1293" y="1162.5" font-size="11.5" font-weight="400" fill="#111" font-family="Liberation Sans">Mechanical</text><text x="1293" y="1176" font-size="11.5" font-weight="400" fill="#111" font-family="Liberation Sans">Electrical</text><text x="1293" y="1189" font-size="11.5" font-weight="400" fill="#111" font-family="Liberation Sans">Plumbing</text><text x="1293" y="1214" font-size="11.5" font-weight="400" fill="#111" font-family="Liberation Sans">1234 Miller St.</text><text x="1293" y="1227" font-size="11.5" font-weight="400" fill="#111" font-family="Liberation Sans">Manchester, NH 06930</text><text x="1438" y="1149" font-size="11.5" font-weight="700" fill="#111" font-family="Liberation Sans">REVU ARCHITECTS</text><text x="1438" y="1175" font-size="11.5" font-weight="400" fill="#111" font-family="Liberation Sans">5555 N. Broad St</text><text x="1438" y="1188" font-size="11.5" font-weight="400" fill="#111" font-family="Liberation Sans">Pasadena CA 91101</text><text x="1575" y="1149" font-size="11.5" font-weight="700" fill="#111" font-family="Liberation Sans">OFFICE BUILDING</text><text x="1575" y="1175" font-size="11.5" font-weight="400" fill="#111" font-family="Liberation Sans">Project No: 323232</text><text x="1575" y="1201" font-size="11.5" font-weight="400" fill="#111" font-family="Liberation Sans">Project Address:</text><text x="1575" y="1214" font-size="11.5" font-weight="400" fill="#111" font-family="Liberation Sans">123 Schonsett St</text><text x="1575" y="1227" font-size="11.5" font-weight="400" fill="#111" font-family="Liberation Sans">Chicago, IL 60601</text><text x="1713" y="1150" font-size="5.8" font-weight="700" fill="#111" font-family="Liberation Sans">LEGAL DISCLAIMER:</text><text x="1713" y="1163.0" font-size="5.8" fill="#222" font-family="Liberation Sans">ALL IDEAS, DESIGNS, AND PLANS INDICATED</text><text x="1713" y="1169.65" font-size="5.8" fill="#222" font-family="Liberation Sans">OR REPRESENTED BY THESE DRAWINGS</text><text x="1713" y="1176.3" font-size="5.8" fill="#222" font-family="Liberation Sans">ARE OWNED AND ARE THE PROPERTY OF</text><text x="1713" y="1182.95" font-size="5.8" fill="#222" font-family="Liberation Sans">BLUEBEAM, INC. AND WERE CREATED AND</text><text x="1713" y="1189.6" font-size="5.8" fill="#222" font-family="Liberation Sans">DEVELOPED FOR DEMONSTRATION</text><text x="1713" y="1196.25" font-size="5.8" fill="#222" font-family="Liberation Sans">PURPOSES ONLY.  NONE OF SUCH IDEAS,</text><text x="1713" y="1202.9" font-size="5.8" fill="#222" font-family="Liberation Sans">DESIGNS, OR PLANS SHALL BE USED FOR</text><text x="1713" y="1209.55" font-size="5.8" fill="#222" font-family="Liberation Sans">ANY PURPOSE WHATSOEVER EXCEPT AS A</text><text x="1713" y="1216.2" font-size="5.8" fill="#222" font-family="Liberation Sans">DEMONSTRATION SET WITHOUT THE</text><text x="1713" y="1222.85" font-size="5.8" fill="#222" font-family="Liberation Sans">EXPRESSED WRITTEN CONCENT OF</text><text x="1713" y="1229.5" font-size="5.8" fill="#222" font-family="Liberation Sans">BLUEBEAM, INC.</text><text x="1863" y="1143" font-size="5.5" fill="#222" font-family="Liberation Sans">DATE:</text><text x="1973" y="1143" font-size="5.5" fill="#222" text-anchor="end" font-family="Liberation Sans">03/04/2018</text><text x="1863" y="1150.5" font-size="5.5" fill="#222" font-family="Liberation Sans">ISSUED FOR:</text><text x="1973" y="1150.5" font-size="5.5" fill="#222" text-anchor="end" font-family="Liberation Sans">INTERNAL REVIEW</text><text x="1863" y="1165" font-size="5.5" fill="#222" font-family="Liberation Sans">PROJECT:</text><text x="1973" y="1165" font-size="5.5" fill="#222" text-anchor="end" font-family="Liberation Sans">3232</text><text x="1863" y="1172.5" font-size="5.5" fill="#222" font-family="Liberation Sans">DRAWN BY:</text><text x="1973" y="1172.5" font-size="5.5" fill="#222" text-anchor="end" font-family="Liberation Sans">Author</text><text x="1863" y="1179.5" font-size="5.5" fill="#222" font-family="Liberation Sans">CHECKED BY:</text><text x="1973" y="1179.5" font-size="5.5" fill="#222" text-anchor="end" font-family="Liberation Sans">Checker</text><text x="1863" y="1186.5" font-size="5.5" fill="#222" font-family="Liberation Sans">APPROVED BY:</text><text x="1973" y="1186.5" font-size="5.5" fill="#222" text-anchor="end" font-family="Liberation Sans">Approver</text><line x1="1863" y1="1144.5" x2="1973" y2="1144.5" stroke="#333" stroke-width="0.8"/><line x1="1863" y1="1160" x2="1973" y2="1160" stroke="#333" stroke-width="0.8"/><line x1="1863" y1="1167" x2="1973" y2="1167" stroke="#333" stroke-width="0.8"/><line x1="1863" y1="1174" x2="1973" y2="1174" stroke="#333" stroke-width="0.8"/><line x1="1863" y1="1181" x2="1973" y2="1181" stroke="#333" stroke-width="0.8"/><rect x="1863.5" y="1190.5" width="109" height="7" fill="none" stroke="#222" stroke-width="1"/><path d="M1890.5 1190.5 V1197.5 M1918 1190.5 V1197.5" stroke="#222" stroke-width="0.8"/><text x="1877" y="1196" font-size="4.5" fill="#222" text-anchor="middle" font-family="Liberation Sans">#</text><text x="1904" y="1196" font-size="4.5" fill="#222" text-anchor="middle" font-family="Liberation Sans">DATE</text><text x="1945" y="1196" font-size="4.5" fill="#222" text-anchor="middle" font-family="Liberation Sans">DESCRIPTION</text><text x="2027" y="1183" font-size="16" font-weight="700" fill="#000" font-family="Liberation Sans">NOT FOR</text><text x="1998" y="1200" font-size="16" font-weight="700" fill="#000" font-family="Liberation Sans">CONSTRUCTION</text></svg>
</body></html>
